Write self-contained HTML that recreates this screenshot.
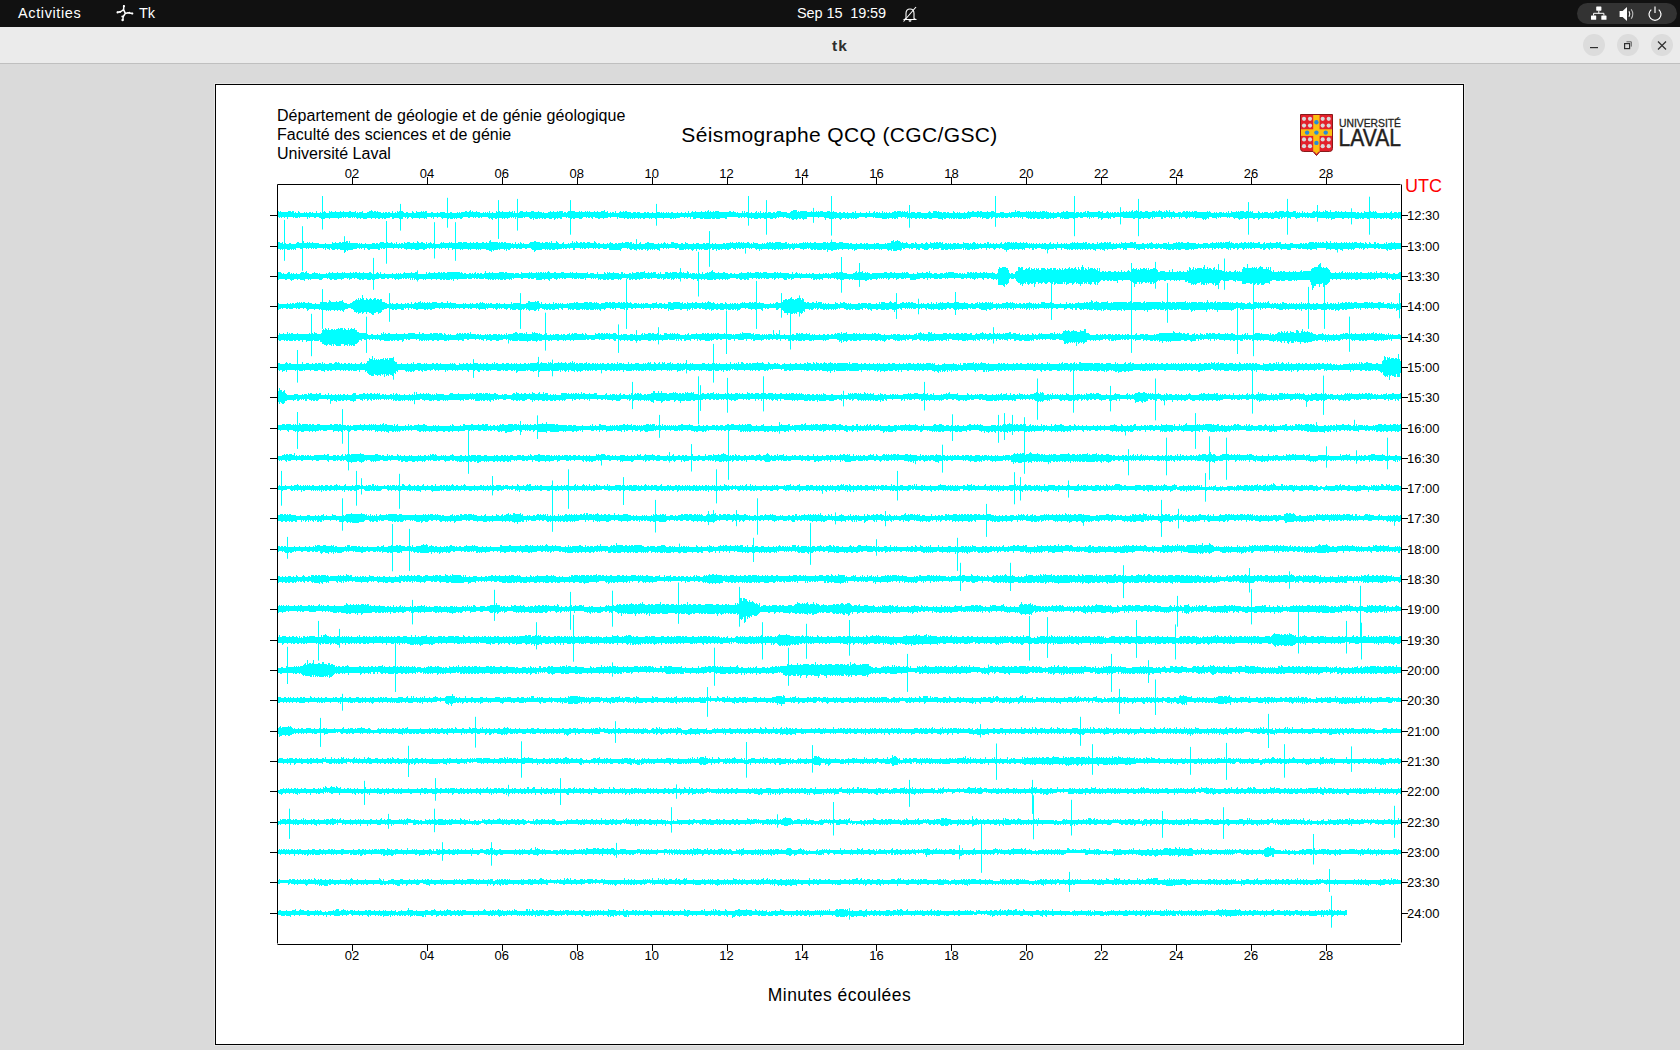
<!DOCTYPE html>
<html><head><meta charset="utf-8"><title>tk</title>
<style>
html,body{margin:0;padding:0;width:1680px;height:1050px;overflow:hidden;background:#dadada;font-family:"Liberation Sans",sans-serif;}
#top{position:absolute;left:0;top:0;width:1680px;height:27px;background:#111111;color:#fff;}
#top .t{position:absolute;top:0;height:27px;line-height:27px;font-size:14.5px;white-space:nowrap;}
#tb{position:absolute;left:0;top:27px;width:1680px;height:36px;background:#ebebeb;border-bottom:1px solid #bfbfbf;}
#tb .title{position:absolute;left:0;width:1680px;top:1px;height:36px;line-height:36px;text-align:center;font-size:15.5px;letter-spacing:1px;font-weight:bold;color:#2e2e2e;}
.wbtn{position:absolute;top:7px;width:22px;height:22px;border-radius:50%;background:#dcdcdc;}
#pill{position:absolute;left:1577px;top:3px;width:100px;height:21px;border-radius:11px;background:#333333;}
#cv{position:absolute;left:215px;top:84px;width:1247px;height:959px;border:1px solid #000;background:#fff;box-shadow:0 0 0 1px #e6e6e6;}
svg#main{position:absolute;left:0;top:0;}
</style></head>
<body>
<div id="top">
  <div class="t" style="left:18px;letter-spacing:0.62px;">Activities</div>
  <svg style="position:absolute;left:116px;top:5px" width="18" height="18" viewBox="0 0 18 18">
    <g stroke="#fff" stroke-width="1.5" fill="none" stroke-linecap="round" stroke-linejoin="round">
      <path d="M7.8 0.8 L7.6 4.6 L5 6.5 L1.6 7.2 M7.6 4.6 L9.3 8.4 L12 7.8 L16.2 8.4 M9.3 8.4 L7.3 11.5 L6.8 15"/>
    </g>
    <g fill="#fff">
      <circle cx="7.9" cy="1.2" r="1.1"/><circle cx="1.6" cy="7.4" r="1.1"/><circle cx="4" cy="7" r="0.9"/>
      <circle cx="16.3" cy="8.5" r="1.1"/><circle cx="13.4" cy="7.6" r="0.9"/>
      <circle cx="6.6" cy="15" r="1.2"/><circle cx="6.3" cy="11.6" r="1"/>
    </g>
  </svg>
  <div class="t" style="left:139px;">Tk</div>
  <div class="t" style="left:797px;letter-spacing:-0.1px;">Sep 15&nbsp; 19:59</div>
  <svg style="position:absolute;left:902px;top:6px" width="16" height="17" viewBox="0 0 16 17">
    <g stroke="#fff" stroke-width="1.1" fill="none">
      <path d="M4 12.5 L4 7.5 C4 4.5 5.5 3 8 3 C10.5 3 12 4.5 12 7.5 L12 12.5 L13.5 13.5 L2.5 13.5 L4 12.5"/>
      <path d="M1.5 15.5 L14 1"/>
    </g>
    <path d="M6.5 14.3 h3 a1.5 1.5 0 0 1 -3 0z" fill="#fff"/>
  </svg>
  <div id="pill">
    <svg style="position:absolute;left:13px;top:2.5px" width="18" height="17" viewBox="0 0 18 17">
      <g fill="#fff"><rect x="6.2" y="0.5" width="5.2" height="4.2" rx="0.6"/><rect x="1" y="9.5" width="5.2" height="4.3" rx="0.6"/><rect x="11.3" y="9.5" width="5.2" height="4.3" rx="0.6"/></g>
      <g stroke="#fff" stroke-width="1" fill="none"><path d="M8.8 4.7V7.3M3.6 9.5V7.3H13.9V9.5"/></g>
    </svg>
    <svg style="position:absolute;left:42px;top:2.5px" width="18" height="18" viewBox="0 0 18 18">
      <path d="M0.6 5 H3.6 L8 1 V15 L3.6 11 H0.6 Z" fill="#fff"/>
      <g stroke="#fff" stroke-width="1.1" fill="none"><path d="M10 5.3 Q11.6 8 10 10.7"/><path d="M12.2 3.2 Q15.4 8 12.2 12.8" stroke="#bbb"/></g>
    </svg>
    <svg style="position:absolute;left:70px;top:2.5px" width="16" height="16" viewBox="0 0 16 16">
      <g stroke="#fff" stroke-width="1.2" fill="none"><path d="M4.3 3.6 A6 6 0 1 0 11.7 3.6"/><path d="M8 0.5V7"/></g>
    </svg>
  </div>
</div>
<div id="tb">
  <div class="title">tk</div>
  <div class="wbtn" style="left:1583px;">
    <svg style="position:absolute;left:0;top:0" width="22" height="22" viewBox="0 0 22 22"><path d="M7 13.6H15" stroke="#2e2e2e" stroke-width="1.2"/></svg>
  </div>
  <div class="wbtn" style="left:1617px;">
    <svg style="position:absolute;left:0;top:0" width="22" height="22" viewBox="0 0 22 22"><g fill="none" stroke="#2e2e2e"><rect x="7.6" y="9.6" width="5" height="5" stroke-width="1.2"/><path d="M9.5 7.8H14.3V12.6" stroke-width="0.7"/></g></svg>
  </div>
  <div class="wbtn" style="left:1651px;">
    <svg style="position:absolute;left:0;top:0" width="22" height="22" viewBox="0 0 22 22"><g stroke="#2e2e2e" stroke-width="1.2"><path d="M7 7.5L15 15.5M15 7.5L7 15.5"/></g></svg>
  </div>
</div>
<div id="cv"></div>
<svg id="main" width="1680" height="1050" viewBox="0 0 1680 1050">
  <g fill="#00ffff" stroke="none">
<path d="M277 212h1v-1h1v1h1v-1h1v1h7v-1h3v1h1v-1h2v2h1v-1h1v1h2v-2h1v1h1v1h4v-1h1v1h1v-1h1v1h2v-1h2v1h1v-1h1v1h3v-2h1v2h3v-1h1v1h2v-1h1v-1h1v1h1v1h3v-2h1v1h1v-1h1v1h3v-1h1v1h4v-1h1v1h2v-1h1v1h5v-1h2v1h4v-1h1v2h1v-1h1v1h1v-1h3v-1h1v2h4v-1h2v-1h2v-1h1v1h1v1h1v-1h2v1h1v-1h1v1h3v1h2v-1h1v1h1v-1h2v1h1v-1h2v1h2v-2h1v2h2v-1h1v1h1v-2h1v1h1v-1h4v1h1v1h2v-1h2v1h4v-2h1v1h1v1h2v-2h1v1h4v-1h1v1h1v-1h1v1h1v-1h2v2h4v-1h2v1h4v-1h1v1h2v-1h5v1h2v-1h1v1h2v-1h2v1h5v-1h1v1h1v-1h1v1h1v-1h4v-1h2v1h2v-1h1v-1h1v2h1v-1h1v1h3v-1h1v1h3v1h3v-1h1v1h1v-1h1v1h1v-1h1v1h1v-2h1v2h2v-1h1v1h3v-2h1v1h2v-1h1v1h2v-1h1v1h6v-1h1v1h2v-1h1v2h1v-2h1v2h2v-1h1v1h1v-1h1v-1h3v1h3v-1h1v1h4v-1h3v1h4v-1h1v1h3v1h1v-1h1v1h4v-1h2v-1h1v1h2v-1h1v1h3v-1h1v1h1v-1h4v2h1v-1h2v1h1v-1h1v-1h7v1h4v-1h1v1h1v-1h1v1h3v-1h1v1h1v-1h1v1h1v-1h1v1h4v-1h1v1h2v-1h1v1h3v-1h3v-1h1v2h2v-1h1v2h2v-1h1v1h1v-1h2v1h1v-2h1v2h3v-1h1v-1h1v1h2v-1h1v1h1v-1h2v1h4v1h2v-1h3v1h1v-1h3v1h4v-1h2v1h1v-1h2v1h3v-1h1v1h4v-1h3v1h1v-1h1v1h1v-1h1v1h2v-1h1v1h1v-1h1v1h2v-1h2v1h4v-1h1v1h3v-1h1v1h3v-1h1v1h2v-2h1v2h2v-1h1v-1h1v1h2v-1h1v1h5v-1h1v1h3v-1h1v1h1v-1h1v-1h1v2h1v-1h1v1h2v-1h1v1h1v-1h4v1h10v-1h2v1h2v-1h1v1h2v1h1v-1h1v1h4v-2h1v2h1v-2h1v2h1v-1h3v1h2v-1h1v1h3v-1h1v-1h1v2h1v-1h1v1h1v-2h1v2h2v-1h1v1h1v-1h2v1h1v-1h3v1h2v-1h2v1h1v-1h1v-1h4v1h6v1h3v-1h1v-1h2v-1h4v2h1v-1h1v1h1v-1h7v1h4v-1h1v1h1v-1h1v1h2v-1h1v1h1v-1h1v1h1v-1h3v1h4v-1h3v1h1v-1h1v1h1v-1h1v1h3v1h2v-1h2v1h2v-1h2v1h2v-1h1v1h4v-1h2v1h1v-2h1v2h4v-1h1v1h5v-1h1v1h2v-2h1v2h3v-1h1v-1h1v2h1v-1h2v1h1v-1h1v1h2v-2h1v2h1v-1h1v1h1v-1h1v1h2v-1h1v1h2v-1h2v-1h2v1h1v-1h4v1h1v-1h1v1h1v-1h1v1h2v-1h1v2h1v-1h1v1h1v-1h4v1h2v-1h4v1h7v-1h1v-1h1v1h1v1h2v-2h4v1h1v-1h1v1h3v1h1v-1h3v1h1v-1h2v1h4v-2h1v1h1v1h2v-1h1v1h1v-1h1v1h4v-1h1v1h2v-1h1v-1h1v1h3v-1h2v1h3v-1h2v1h1v-1h2v1h5v-1h1v1h3v-1h3v1h2v1h4v-1h4v1h5v-1h1v1h1v-1h4v-2h1v2h1v-1h3v1h6v-1h1v1h1v-1h1v1h1v-1h1v1h2v-1h1v1h1v-1h1v1h4v-1h1v1h1v-1h3v1h1v-1h1v1h2v1h1v-1h1v1h2v-1h1v1h3v-1h2v1h2v-1h2v-1h1v1h2v-1h2v1h6v1h2v-1h3v1h1v-1h2v1h1v-1h2v-1h1v2h1v-2h2v1h9v-1h2v1h2v-1h1v2h3v-1h1v-1h1v1h1v1h1v-1h1v1h1v-1h1v1h1v-1h2v1h1v-1h2v1h1v-2h1v1h2v-1h1v1h2v-1h1v1h2v-1h1v1h1v-1h1v-1h1v2h1v-1h2v-1h1v1h2v1h1v-1h2v1h3v-1h3v1h4v-1h3v1h1v-1h1v1h1v-1h1v-1h1v1h2v1h2v-1h1v1h1v-2h1v1h1v1h1v-2h1v2h3v-1h1v1h1v1h3v-1h3v1h1v-1h1v-1h2v1h1v-1h2v1h1v-1h1v1h2v-1h1v1h1v-1h3v1h10v-1h1v1h1v-1h1v1h1v1h3v-1h1v1h1v-1h1v1h2v-1h3v1h1v-1h1v1h2v-1h1v1h1v-2h1v2h2v-2h1v1h4v-1h1v1h1v-1h1v1h1v-1h4v1h2v-1h3v1h1v-1h1v1h1v-1h1v2h5v-2h1v1h1v1h2v-1h1v1h1v-1h4v1h2v-1h1v1h1v-1h1v1h1v-1h1v-1h2v1h2v-1h5v1h2v-1h3v1h4v-1h3v2h1v-1h1v1h1v-1h1v1h2v-2h1v2h1v-1h1v1h2v-1h1v1h4v-1h1v-1h2v1h1v-1h1v1h2v-1h1v1h3v-1h1v1h1v-2h1v1h2v1h2v-2h1v2h4v-1h2v1h1v-1h1v1h2v-1h1v1h3v-1h1v1h5v1h1v-1h4v1h1v-1h2v1h2v-1h1v1h2v-2h1v1h4v-1h2v1h2v-1h1v1h1v-1h1v1h1v1h7v-1h1v1h1v-1h1v1h3v-1h1v-1h1v2h2v-1h3v1h1v-1h3V219h-1v-1h-1v1h-1v-1h-2v1h-1v-1h-2v1h-1v1h-1v-1h-2v-1h-2v1h-1v-1h-2v1h-1v-1h-1v1h-2v-1h-3v1h-1v-1h-1v1h-1v-1h-4v1h-3v-1h-3v1h-2v-1h-1v1h-1v-1h-1v1h-4v-1h-3v1h-1v-1h-2v1h-1v-1h-4v1h-2v-1h-7v1h-3v1h-1v-2h-2v1h-1v-1h-1v1h-1v-1h-9v-1h-2v1h-5v-1h-1v1h-2v-1h-1v1h-1v-1h-2v1h-1v-1h-2v1h-3v1h-1v-1h-1v-1h-4v2h-1v-1h-2v-1h-3v1h-1v-1h-1v1h-1v1h-1v-2h-1v2h-2v-1h-4v1h-3v-1h-2v1h-1v-1h-5v1h-1v-1h-2v1h-1v1h-1v-2h-3v1h-2v-1h-4v1h-1v-1h-1v1h-2v-1h-2v1h-3v1h-1v-1h-1v-1h-3v1h-1v-1h-1v-1h-3v1h-1v-1h-1v1h-1v-1h-6v1h-1v-1h-1v1h-1v-1h-1v2h-1v-1h-4v-1h-3v2h-1v-1h-1v1h-1v1h-1v-1h-1v1h-1v-1h-1v-1h-6v1h-1v-2h-1v1h-1v-1h-3v1h-1v-1h-1v1h-1v1h-1v-1h-1v-1h-3v1h-1v-1h-1v2h-1v-2h-4v1h-1v-1h-2v2h-1v-2h-1v1h-1v-1h-3v1h-2v-1h-1v2h-2v-2h-6v1h-1v-1h-1v2h-1v-2h-1v1h-1v1h-2v-1h-4v1h-1v-1h-2v1h-2v-1h-4v1h-2v-1h-10v-1h-2v1h-1v-1h-5v1h-2v-1h-2v2h-1v-1h-1v1h-1v-1h-5v1h-1v1h-1v-2h-2v1h-1v-2h-4v1h-1v-1h-1v1h-1v-1h-1v2h-1v-2h-1v1h-1v-1h-4v1h-3v-1h-2v1h-4v1h-1v-1h-4v1h-5v-1h-1v1h-1v-1h-1v1h-1v-2h-3v1h-3v1h-1v-1h-2v1h-1v-1h-1v1h-3v-1h-2v1h-3v-1h-1v1h-3v-1h-2v1h-2v-1h-1v1h-2v-1h-1v1h-1v-1h-2v-1h-3v2h-1v-2h-1v1h-1v-1h-1v1h-1v-1h-3v1h-1v-1h-2v1h-2v-1h-2v1h-3v-1h-1v1h-3v-1h-1v1h-1v-1h-1v1h-3v-1h-2v1h-1v1h-1v-2h-1v1h-1v1h-3v-1h-3v1h-1v-2h-1v1h-1v-1h-2v1h-1v-1h-6v1h-1v1h-1v-1h-1v1h-1v-1h-1v1h-3v-1h-1v1h-4v-1h-1v1h-1v-1h-1v1h-2v-1h-1v1h-1v-1h-1v1h-1v-1h-3v1h-2v-1h-1v2h-1v-1h-4v-1h-6v1h-3v-1h-2v1h-3v-1h-1v1h-1v-1h-2v1h-1v-1h-2v1h-2v-1h-3v1h-1v-1h-3v1h-1v-2h-1v1h-1v-1h-3v1h-1v-1h-3v2h-1v-1h-1v1h-2v-1h-1v1h-1v-1h-3v1h-1v-1h-1v1h-5v-1h-7v-1h-1v1h-1v-1h-6v1h-2v-1h-6v1h-2v1h-2v-1h-1v1h-1v-1h-1v1h-1v-1h-2v1h-2v-1h-1v1h-1v-1h-3v1h-1v1h-1v-1h-1v-1h-3v1h-1v-1h-1v1h-5v-1h-3v2h-1v-2h-1v-1h-5v1h-1v-1h-4v1h-1v-1h-6v2h-3v1h-1v-1h-1v-1h-1v1h-2v-1h-1v1h-1v1h-1v-1h-2v1h-2v-1h-1v-1h-1v1h-1v-1h-3v-1h-2v1h-1v-1h-4v1h-1v-1h-1v1h-1v1h-1v-1h-2v1h-3v-1h-4v1h-2v-1h-3v1h-1v-1h-2v1h-4v-1h-2v1h-1v-1h-2v-1h-1v1h-1v-1h-2v1h-1v-1h-2v1h-1v-1h-1v1h-2v-1h-11v2h-2v-1h-5v1h-4v-1h-1v1h-3v-1h-1v1h-7v-1h-1v1h-3v-1h-4v1h-3v-2h-2v2h-1v-2h-2v1h-1v-1h-2v1h-1v-1h-4v1h-4v1h-1v-1h-1v1h-1v-1h-1v1h-2v-1h-6v1h-1v-1h-7v1h-1v-1h-3v1h-1v-1h-1v1h-1v-1h-4v1h-2v-1h-2v1h-1v-1h-1v1h-1v-1h-3v1h-1v-1h-1v1h-1v-1h-1v1h-1v-1h-1v1h-2v-1h-2v1h-1v-1h-5v-1h-1v2h-1v-2h-6v1h-1v-1h-2v1h-4v1h-1v-1h-3v1h-2v-1h-3v-1h-2v2h-1v-1h-1v-1h-1v1h-2v-1h-1v1h-1v-1h-3v1h-1v1h-3v-1h-4v1h-2v-1h-1v1h-1v-1h-3v-1h-1v1h-1v-1h-4v2h-2v-1h-2v1h-1v-1h-1v1h-1v1h-1v-2h-2v1h-3v-1h-3v1h-2v-1h-1v1h-1v-1h-2v1h-1v-1h-1v1h-3v-1h-1v2h-1v-2h-1v1h-2v-1h-1v-1h-4v1h-1v-1h-1v1h-6v-1h-1v2h-1v-2h-1v1h-1v-1h-1v1h-1v-1h-1v1h-2v1h-1v-1h-2v1h-1v-1h-1v1h-1v-1h-5v1h-2v-1h-2v2h-1v-1h-1v-1h-1v1h-1v-1h-1v-1h-6v1h-1v-1h-1v1h-2v-1h-2v1h-1v-1h-1v1h-1v-1h-3v1h-2v-1h-5v1h-1v1h-2v-1h-3v1h-1v-1h-1v1h-1v-1h-1v1h-3v-1h-1v1h-1v-1h-5v1h-1v-1h-1v-1h-3v1h-1v-1h-3v2h-1v-2h-1v1h-1v-1h-4v2h-1v-1h-1v1h-1v-1h-4v1h-1v-1h-6v1h-1v-1h-1v-1h-2v1h-1v1h-1v-2h-1v1h-1v-1h-2v2h-2v-1h-1v1h-1v-1h-5v1h-2v-2h-2v1h-4v1h-2v-1h-1v1h-1v-1h-2v1h-2v-1h-2v1h-1v-1h-3v1h-1v-1h-4v1h-4v-1h-2v1h-1v-1h-2v1h-1v-1h-1v-1h-1v1h-1v-1h-1v1h-1v-1h-1v1h-3v-1h-2v1h-1v-1h-1v1h-1v-1h-1v1h-3v1h-1v-1h-8v1h-1v-1h-4v1h-2v-1h-1v1h-1v-1h-2v-1h-3v1h-2v-1h-4v1h-1v-1h-1v2h-1v-2h-7v1h-1v-1h-1v1h-3v-1h-1v1h-1v-1h-5v2h-1v-2h-2v1h-1v-1h-2v1h-1v-1h-1v1h-1v-1h-2z"/>
<path d="M277 242h3v1h2v-1h1v2h2v-1h1v1h3v-1h2v1h5v-1h1v-1h2v1h4v-2h1v2h3v-1h1v1h1v-1h1v1h2v-1h1v1h6v1h6v-1h1v1h6v-2h1v1h2v-1h1v1h3v-1h2v1h1v-1h4v-1h2v2h1v-2h1v2h8v1h1v-1h1v1h1v-1h1v1h3v-1h1v1h6v-1h3v1h1v-1h2v1h1v-1h1v-1h4v1h2v-1h2v1h3v-1h1v1h1v1h1v-1h1v1h1v-2h1v2h2v-1h1v1h1v-1h2v1h1v-2h1v1h2v-1h3v1h3v-1h1v1h3v-2h1v1h1v1h2v-1h2v1h2v1h1v-2h1v2h1v-1h2v-1h1v1h1v1h1v-1h1v1h6v-1h1v-1h1v1h1v-1h1v1h5v-1h1v1h1v-1h1v1h3v-1h1v1h2v-1h4v1h1v-1h4v1h3v-1h1v1h2v-1h1v1h2v-1h2v1h4v-1h2v1h2v-1h1v1h2v-2h1v-1h1v2h7v1h1v-1h1v1h1v-1h2v1h1v-1h2v1h5v1h1v-1h1v1h2v-2h1v2h2v-1h1v1h1v-2h1v1h1v1h1v-1h1v1h5v-1h1v-1h4v-1h2v1h4v1h2v-1h1v1h2v-1h3v1h1v-1h1v1h1v-2h1v2h4v-2h1v1h1v1h1v1h3v-1h1v-1h1v2h4v-1h1v1h1v-1h2v-2h1v2h1v-1h1v1h1v-2h1v1h1v1h2v-1h2v1h1v-1h2v1h2v-1h3v1h4v-2h1v1h1v1h1v1h1v-1h2v1h3v-1h1v1h3v-1h1v1h1v-1h1v-1h1v1h2v1h2v-1h2v1h1v-1h4v-1h1v1h2v-1h4v1h1v-1h2v2h1v-1h1v1h2v-1h1v1h2v-1h1v-1h1v2h4v-1h2v-1h2v1h5v1h4v-1h1v1h2v-1h1v1h1v-1h1v-1h1v1h1v1h1v-1h1v1h3v-2h3v1h4v1h3v-1h2v1h2v-2h1v1h2v1h5v-1h1v1h2v-1h3v1h4v-1h2v1h1v-1h3v1h3v-1h1v1h2v-1h1v1h7v-1h2v1h1v-1h4v-1h1v1h1v-1h1v1h3v-1h1v1h1v-1h2v1h1v-1h1v1h1v-1h1v1h3v-1h2v1h1v1h1v-1h1v1h1v-2h1v1h4v1h4v-1h1v1h1v-1h1v1h1v-1h1v-1h1v1h1v-1h2v1h1v-1h1v1h2v-1h6v1h4v-1h2v2h1v-1h1v1h3v-1h1v1h1v-1h1v1h1v-1h1v1h2v-1h4v-1h1v1h1v-1h1v1h1v-1h1v1h2v-1h1v1h3v-1h2v1h7v-1h3v1h1v-1h1v1h2v-1h1v1h1v-1h4v1h3v-1h4v1h6v1h1v-1h2v1h4v-1h1v1h3v-1h2v1h2v-1h1v1h1v-1h2v1h6v-1h1v1h1v-1h3v1h6v-1h1v1h1v-1h4v-2h2v-1h1v2h1v-1h2v-1h1v1h2v1h1v1h1v-1h1v1h3v-1h1v1h1v1h3v-1h3v1h1v-2h1v1h1v1h4v-1h2v1h2v-1h1v-1h1v1h1v1h2v-2h1v1h3v-1h1v1h1v-1h2v1h1v-1h2v1h1v-1h1v2h2v-1h2v1h1v-1h1v1h1v-1h1v1h2v-1h3v1h1v-1h2v1h4v-2h1v1h5v1h1v-1h1v1h1v-1h1v-1h2v1h1v1h1v-1h1v1h2v-1h1v1h3v-1h2v1h1v-2h2v2h1v-1h1v1h2v-1h1v1h2v-1h1v1h3v-1h1v-1h1v2h2v-1h1v-1h1v1h1v-1h3v1h1v-1h1v1h1v-1h1v1h1v-1h2v1h3v-1h1v1h2v-1h1v1h2v-1h1v1h1v1h1v-1h1v1h1v-1h1v1h1v-1h1v1h2v-1h1v1h2v-1h1v1h2v-1h1v1h1v-1h2v1h3v-1h1v-1h1v2h2v-1h1v1h3v-2h1v2h3v-1h1v1h2v-1h1v1h1v-1h1v1h3v-1h2v-1h1v1h1v-1h1v1h2v-1h1v1h5v-1h1v1h1v-1h2v2h1v-1h2v1h2v-1h2v1h3v-2h1v2h1v-1h2v-1h1v1h2v-1h2v1h1v-1h1v1h1v-1h2v2h2v-1h1v1h2v-1h1v1h2v-1h1v1h1v-2h1v1h3v-1h1v1h4v-1h3v1h1v-1h2v2h6v-1h2v1h3v-1h1v1h1v-1h2v-1h1v1h1v1h3v-1h1v1h1v-1h1v1h4v-1h4v1h1v-2h1v2h4v-1h3v-1h1v1h1v-1h2v1h1v-1h2v1h4v-1h2v1h7v1h2v-1h1v1h4v-1h5v1h2v-1h2v-1h1v1h3v-1h1v1h1v-1h1v1h1v-1h2v1h1v-1h1v1h1v-1h4v-1h1v2h1v-1h1v1h2v1h1v-1h3v1h1v-1h2v-1h1v1h2v-1h2v1h2v-1h1v1h1v-1h2v1h1v-1h1v1h4v-1h2v2h3v-1h1v-1h1v2h1v-1h4v-1h1v1h5v-1h2v1h1v-1h2v2h4v-1h1v1h4v-1h3v1h7v-1h2v1h1v-1h1v1h1v-1h2v1h1v-1h1v-1h5v1h1v-1h2v1h1v-1h1v1h1v-1h1v1h1v-1h2v1h2v-2h1v1h1v1h2v-2h1v2h3v-1h1v1h1v-1h1v1h4v-1h1v1h2v-1h1v1h1v-1h1v1h2v-1h1v1h2v-1h1v1h1v-1h3v1h3v-1h1v1h3v1h1v-2h1v1h1v1h2v-2h1v1h1v1h3v-2h2v2h1v-1h2v1h5v-1h1v1h1v-2h1v2h1v-1h3v-1h1v1h2v-1h1v1h6V249h-5v1h-1v-1h-3v1h-3v-1h-1v2h-1v-1h-1v-1h-5v-1h-1v1h-2v-1h-2v1h-2v-1h-6v1h-1v-1h-2v1h-1v1h-1v-2h-1v1h-1v-1h-1v1h-1v-1h-4v1h-1v1h-1v-1h-1v1h-1v-1h-2v1h-1v-1h-5v2h-1v-1h-2v-1h-2v1h-3v-1h-4v1h-1v-1h-3v1h-1v-2h-9v2h-1v-1h-4v1h-2v-1h-2v1h-1v-1h-5v-1h-1v1h-3v-1h-1v1h-1v-1h-5v2h-4v-1h-5v1h-1v-1h-1v-1h-3v1h-1v-1h-3v1h-2v-1h-1v2h-1v-1h-1v-1h-2v1h-1v1h-2v-2h-1v1h-2v-1h-5v1h-1v-1h-2v1h-2v-1h-1v1h-1v-1h-1v1h-1v-1h-1v1h-1v1h-1v-1h-1v-1h-3v1h-1v1h-1v-2h-2v1h-2v-1h-2v2h-1v-2h-1v2h-1v-1h-2v-1h-3v1h-2v-1h-2v1h-1v-1h-2v1h-2v-1h-1v2h-1v-2h-3v1h-1v-1h-2v1h-1v-1h-1v1h-1v-1h-2v1h-1v-1h-2v1h-4v1h-1v-1h-1v1h-1v-1h-2v1h-4v-1h-4v1h-3v-1h-1v1h-1v-1h-2v1h-2v-1h-1v1h-3v-1h-1v1h-1v-1h-3v-1h-1v1h-2v-1h-2v1h-3v-1h-2v1h-3v-1h-1v1h-2v-1h-2v2h-1v-1h-4v1h-2v-1h-1v1h-1v-2h-1v1h-1v-1h-7v2h-2v-1h-1v1h-1v-2h-2v1h-1v-1h-3v1h-4v1h-1v-1h-4v1h-1v-1h-2v2h-1v-1h-2v-1h-1v1h-1v-1h-4v2h-1v-1h-2v-1h-2v1h-1v-1h-2v1h-1v-1h-1v1h-1v-1h-2v1h-1v-1h-1v1h-1v-1h-2v1h-1v-1h-1v1h-1v-1h-2v1h-2v-1h-1v1h-1v-1h-1v1h-1v-1h-3v-1h-2v2h-1v-2h-4v2h-1v-1h-1v-1h-1v1h-5v1h-2v-1h-1v1h-1v-1h-4v-1h-4v1h-2v-1h-1v2h-2v-2h-2v1h-1v-1h-4v2h-1v-1h-1v1h-1v-1h-3v1h-1v-1h-3v1h-1v-1h-1v1h-1v-1h-3v1h-2v-1h-1v1h-2v-1h-2v-1h-2v1h-1v-1h-3v1h-1v1h-1v-1h-1v-1h-3v1h-1v-1h-2v2h-1v-2h-4v1h-1v-1h-2v1h-4v1h-1v-1h-1v1h-1v-1h-2v1h-3v-1h-1v1h-1v-2h-1v2h-1v-2h-1v1h-7v1h-1v-1h-1v1h-1v-1h-1v1h-1v-1h-2v1h-3v-1h-1v1h-3v-2h-2v1h-5v1h-1v-2h-1v1h-1v-1h-2v1h-1v1h-4v-1h-2v-1h-2v2h-2v-1h-1v1h-1v-2h-3v1h-2v-1h-1v1h-1v-1h-4v1h-2v-1h-1v2h-1v1h-1v-1h-3v1h-4v-2h-1v2h-1v-1h-2v1h-1v-1h-1v-1h-5v1h-1v-1h-1v1h-1v-1h-4v1h-1v-1h-4v1h-1v-1h-1v1h-2v-1h-1v1h-1v-1h-7v1h-2v1h-1v-2h-1v1h-1v-1h-3v1h-1v-1h-5v1h-1v-1h-3v1h-1v-1h-1v1h-4v1h-2v-1h-3v2h-1v-3h-1v1h-3v-1h-1v1h-5v-1h-1v1h-2v-1h-1v1h-2v-1h-1v-1h-1v1h-1v-1h-1v1h-3v1h-1v-1h-3v-1h-5v1h-1v1h-1v-1h-1v-1h-1v1h-1v1h-1v-2h-1v1h-5v1h-1v-1h-1v1h-1v-1h-1v1h-1v-1h-2v1h-2v-1h-1v1h-1v-1h-3v1h-1v-1h-6v1h-1v-1h-1v2h-1v-2h-2v1h-1v-1h-1v-1h-3v1h-1v-1h-1v1h-1v-1h-3v1h-1v-1h-1v1h-2v-1h-1v1h-2v-1h-1v1h-1v-1h-1v2h-1v-1h-2v-1h-2v1h-2v1h-2v-1h-1v1h-1v-1h-3v1h-1v-1h-1v1h-2v-1h-1v2h-1v-2h-2v1h-2v-2h-1v1h-3v1h-4v-1h-2v1h-1v-1h-1v1h-1v-1h-2v2h-1v-2h-2v1h-1v1h-1v-1h-1v-1h-2v1h-1v-1h-2v1h-1v-1h-1v1h-5v-2h-2v1h-2v-1h-6v1h-1v-1h-1v1h-1v-1h-2v1h-1v-1h-3v3h-1v-1h-2v-1h-2v1h-1v-1h-1v1h-1v-1h-1v1h-1v-1h-1v1h-1v1h-1v-2h-1v1h-1v-1h-2v1h-2v-1h-1v1h-1v-1h-3v1h-2v-1h-2v1h-2v-1h-1v-1h-1v1h-1v-1h-5v1h-1v2h-1v-1h-11v-2h-2v1h-4v-1h-3v1h-2v-1h-2v1h-1v-1h-1v1h-1v-1h-4v1h-1v-1h-2v1h-2v-1h-1v1h-1v-1h-1v1h-1v-1h-5v2h-2v-2h-3v1h-1v-1h-2v1h-2v-1h-1v1h-1v-1h-1v1h-4v1h-1v-1h-2v1h-3v-1h-1v1h-2v-1h-1v1h-1v-1h-1v1h-1v-1h-3v1h-6v1h-1v1h-1v-2h-2v-1h-1v-1h-4v1h-2v-1h-3v1h-3v-1h-1v1h-2v-1h-2v1h-1v-1h-2v1h-1v1h-2v-1h-1v2h-1v-2h-1v1h-1v-1h-4v1h-1v-1h-1v1h-4v1h-1v-1h-1v2h-1v-1h-2v-1h-3v-1h-5v1h-1v-1h-1v1h-1v-1h-1v1h-1v-1h-5v1h-1v-1h-1v1h-1v-1h-5v1h-1v-1h-1v1h-1v-1h-4v1h-1v-1h-2v1h-1v-2h-3v2h-1v-2h-2v1h-1v-1h-3v1h-1v-1h-1v1h-1v-1h-3v1h-2v-1h-1v1h-1v-1h-2v1h-1v-1h-2v1h-2v1h-2v-1h-4v1h-4v-1h-3v1h-1v-1h-4v1h-1v-1h-2v-1h-2v1h-1v-1h-2v1h-1v-1h-4v1h-1v-1h-8v1h-2v-1h-1v1h-1v-1h-1v2h-2v-1h-8v1h-2v-1h-1v-1h-2v2h-1v-2h-2v1h-1v-1h-1v1h-1v-1h-2v1h-4v1h-5v1h-1v-1h-1v2h-1v-2h-5v-1h-2v1h-1v-1h-2v1h-3v-1h-1v-1h-1v2h-1v-1h-2v-1h-1v2h-1v-2h-1v1h-1v-1h-6v1h-2v-1h-1v1h-1v-1h-1v1h-1v-1h-2v1h-1v-1h-1v1h-1v-1h-3v1h-3v-1h-4v2h-1v-1h-1v1h-1v-1h-1v1h-1v-1h-1v1h-3v-1h-2v1h-1v-1h-1v1h-1v-1h-1v1h-1v-1h-2v1h-1z"/>
<path d="M277 273h1v-1h3v1h1v1h1v-1h1v1h3v-1h1v-1h2v2h1v-1h1v1h1v-1h1v1h2v-1h1v1h3v-1h1v-1h3v1h1v-1h1v-1h1v2h2v1h3v-1h2v-1h1v1h3v1h1v-1h1v1h6v-1h1v1h1v-1h1v-1h1v1h2v-1h1v1h4v-1h1v1h4v-1h1v1h1v-1h1v1h5v-1h1v1h2v-1h1v1h1v-1h2v1h2v-1h1v1h3v-1h1v1h5v-1h2v1h1v1h4v-1h1v-1h1v1h1v1h1v-2h1v2h3v-1h1v1h7v-1h1v1h3v-1h1v1h1v-1h1v1h1v-1h1v1h2v-1h1v-1h1v1h6v-1h1v1h3v-1h2v1h1v1h8v-2h1v2h1v-1h1v-1h1v1h4v-1h1v1h3v-1h2v1h1v-1h1v1h1v-1h2v1h2v-1h13v1h1v-1h1v1h1v1h1v-1h2v1h3v-1h2v1h1v-1h1v1h1v-1h1v-1h1v2h1v-1h2v1h1v-1h2v1h2v-1h1v-2h1v2h3v-1h1v1h2v-1h1v1h6v-1h5v1h1v-1h2v1h7v1h1v-1h4v1h2v-2h1v1h7v-1h1v1h1v-1h1v1h4v-1h1v1h1v-1h1v1h1v-1h2v1h1v-1h1v1h1v-1h1v1h1v-1h1v-1h1v1h1v1h4v-1h2v1h5v-1h3v1h6v-1h1v1h1v-1h1v1h3v-1h1v1h10v-1h1v2h2v-1h4v1h3v-2h1v2h6v-2h1v1h1v1h1v-2h1v1h1v-1h1v1h3v-1h1v1h5v1h2v-2h2v2h1v-1h1v1h4v-1h2v1h1v-2h1v1h3v-1h3v1h1v-1h4v-1h1v2h3v-1h1v1h2v-1h1v1h1v-1h3v2h2v-1h1v1h1v-2h1v2h4v-2h3v1h2v-1h1v1h1v-1h5v1h2v-1h1v1h1v-1h1v1h1v-1h1v1h3v-2h1v1h1v2h1v-1h1v1h1v-1h3v1h1v-1h1v1h2v-1h1v1h2v-2h1v2h2v-1h2v-1h1v1h1v-1h2v-1h1v-1h1v2h2v1h3v-1h1v1h4v-1h2v1h3v1h2v-1h2v1h2v-1h1v1h4v-1h2v-1h1v1h5v-1h2v1h1v-1h1v1h4v-1h4v1h1v-1h1v1h2v-1h4v1h7v-1h2v1h1v-1h1v1h2v-1h1v1h8v1h3v-2h1v2h2v-1h1v-1h1v1h1v1h1v-1h1v1h1v-1h1v1h4v-1h1v1h2v-1h1v1h2v-1h2v1h5v-1h1v1h3v-1h1v1h1v-1h2v1h1v-1h1v1h2v-1h3v-1h1v1h1v-1h2v1h1v-1h2v1h1v-1h1v1h4v1h6v-1h2v-1h1v-1h1v2h1v-1h4v-1h1v2h2v-1h1v1h1v-1h1v1h2v1h2v-1h12v-1h3v1h3v-1h2v1h2v-1h1v1h7v-1h1v1h1v-1h1v1h1v-1h2v1h1v1h4v-1h1v1h3v-2h1v1h4v-1h1v1h3v-1h2v1h1v-2h1v2h2v1h2v-1h3v1h3v-1h3v1h1v-1h2v-1h1v1h1v-1h6v1h4v1h1v-1h2v1h1v-1h1v1h1v-1h1v1h2v-2h2v1h1v-1h2v1h1v-1h1v1h1v-1h2v1h3v-1h1v1h2v-1h2v1h1v-1h1v1h5v-1h1v1h2v1h2v-1h1v-4h1v-2h1v1h2v-1h4v1h2v2h1v3h1v1h1v-1h2v1h2v-2h1v-1h2v-4h2v1h1v-1h2v3h2v-1h1v-1h1v1h1v-1h1v-1h1v3h1v-2h1v1h2v-1h1v2h1v-2h1v1h1v-1h1v2h2v-2h4v1h1v1h1v-2h1v1h2v-1h2v2h1v-2h3v2h1v-1h1v1h1v-2h1v1h1v1h1v-2h1v2h1v-1h1v-1h1v1h2v-1h1v-1h1v2h1v-1h2v1h1v-1h1v-1h1v2h1v1h1v-3h1v2h1v1h1v-3h1v-2h1v2h1v3h1v-2h1v1h1v1h1v-3h1v2h1v-1h3v1h1v-1h1v1h1v1h1v-2h1v3h1v-3h1v4h2v-1h2v1h1v-1h1v1h2v-1h3v1h3v-1h2v1h2v-1h1v1h2v-2h1v2h2v-1h1v1h2v-1h1v-1h1v1h1v1h1v-1h1v-2h1v-1h1v1h2v-1h1v2h1v-1h1v1h1v-2h1v1h2v-1h2v1h1v-1h1v2h1v-2h1v2h1v-1h3v-1h2v2h1v-1h1v1h1v2h2v-1h5v1h4v-2h1v2h2v-3h1v3h4v-1h1v1h1v-1h2v1h2v-1h1v1h3v-2h1v1h1v-4h1v1h1v2h1v-1h1v-2h1v3h1v-2h1v1h1v-1h5v1h1v-2h1v-2h1v4h2v-2h1v2h1v-1h2v1h1v1h1v-2h1v-1h1v3h1v-1h1v1h1v-1h1v1h3v1h3v1h1v-1h1v1h2v-1h2v1h3v-1h1v-1h1v2h1v-1h1v1h1v-1h1v1h2v-3h1v-2h2v1h2v-4h1v4h4v-1h1v1h1v-1h1v1h1v-1h1v2h1v-1h1v-1h1v-1h1v1h2v2h3v-2h1v2h1v-2h1v3h1v-3h1v4h1v1h1v-2h1v2h4v-1h1v1h1v-1h2v1h1v-1h2v1h4v-1h1v1h3v-1h1v1h1v-1h1v1h4v-1h1v-1h1v2h1v-1h8v-2h1v-1h2v-1h4v-2h1v-1h1v-1h1v4h1v1h1v-1h1v1h2v-1h1v1h1v1h1v1h1v2h1v1h4v-1h1v1h3v-1h1v1h1v-1h1v-1h1v2h2v-1h1v1h1v-1h1v1h1v-1h1v1h1v-1h1v1h2v-1h1v1h1v-1h2v1h2v-1h2v1h6v-1h1v1h1v-1h2v1h2v-1h1v1h1v-2h1v2h3v-1h2v1h3v-1h1v1h1v-1h1v2h1v-1h1v1h3v-1h2v1h3v-1h1v-1h2V280h-1v-1h-4v1h-1v-1h-1v1h-2v-1h-1v-1h-1v1h-1v-1h-1v2h-1v-1h-1v-1h-4v1h-1v-1h-3v1h-1v-1h-1v1h-1v1h-1v-1h-3v1h-1v-1h-2v1h-1v-1h-6v1h-1v-1h-2v1h-3v-1h-3v1h-1v-1h-2v1h-1v-1h-1v1h-1v-1h-5v1h-1v-1h-3v1h-1v-1h-3v1h-1v-1h-2v3h-1v1h-1v1h-1v1h-2v1h-1v1h-1v-4h-1v1h-2v3h-1v-3h-3v2h-2v2h-1v2h-1v-5h-1v-3h-1v-2h-13v1h-1v-1h-1v1h-1v-1h-2v1h-4v-1h-3v1h-4v-1h-1v1h-4v-1h-4v1h-2v3h-1v-1h-4v1h-1v1h-3v-2h-1v1h-1v1h-2v-2h-1v1h-1v1h-2v-2h-1v1h-2v-1h-4v1h-4v-3h-5v-1h-1v2h-1v-1h-2v-1h-4v1h-4v-1h-1v1h-1v-1h-2v1h-1v2h-1v-1h-1v3h-2v1h-1v-3h-1v2h-1v-1h-1v-1h-3v1h-1v-1h-1v2h-1v-2h-1v2h-2v-1h-1v1h-1v-3h-1v1h-3v1h-1v1h-1v-1h-1v1h-1v-1h-1v1h-1v-2h-3v-2h-1v1h-2v-2h-5v1h-1v-1h-2v1h-1v-1h-1v1h-1v-1h-3v1h-1v-1h-4v1h-2v-1h-4v1h-1v-1h-1v1h-1v1h-1v1h-2v1h-1v-2h-1v2h-2v-2h-1v1h-1v-1h-1v1h-2v-1h-2v1h-1v1h-1v-2h-1v2h-1v-2h-2v2h-2v3h-1v-4h-1v-1h-1v-1h-2v-1h-7v1h-1v-1h-4v3h-1v-2h-4v-1h-1v1h-2v-1h-1v1h-2v-1h-2v1h-2v-1h-2v1h-1v1h-1v1h-1v2h-1v-3h-1v3h-1v-1h-1v-2h-2v2h-1v1h-1v-1h-2v-2h-1v2h-1v-1h-1v1h-1v-2h-1v2h-2v2h-1v-2h-2v-1h-1v1h-1v-2h-1v1h-1v1h-1v1h-1v-2h-3v1h-2v1h-1v-3h-1v2h-1v-2h-1v2h-6v-1h-1v1h-1v1h-1v-3h-1v2h-1v-1h-2v-1h-2v1h-1v1h-2v-1h-1v-1h-1v1h-1v1h-1v-1h-2v1h-1v-2h-2v2h-1v3h-1v-4h-1v1h-2v-1h-1v1h-1v1h-1v-1h-1v-2h-1v2h-1v-1h-1v1h-1v2h-1v-2h-1v1h-1v-2h-2v-1h-1v-1h-1v-2h-1v-1h-1v1h-3v-1h-1v1h-1v4h-1v1h-1v1h-1v-1h-1v3h-1v-1h-1v-1h-5v-6h-1v1h-1v-1h-2v1h-1v-1h-2v-1h-2v1h-2v-1h-3v2h-1v-1h-1v-1h-4v1h-1v-1h-1v1h-1v1h-1v-1h-2v-1h-1v1h-1v-1h-3v1h-1v-1h-2v1h-3v-1h-6v1h-1v-1h-6v1h-1v-1h-1v1h-1v-1h-3v1h-3v-1h-1v1h-4v-1h-3v1h-1v-1h-2v2h-1v-2h-2v1h-2v-1h-3v1h-4v1h-6v-2h-4v1h-1v-1h-1v1h-3v-1h-2v1h-2v1h-1v-2h-2v1h-1v-1h-3v1h-1v1h-1v-2h-1v1h-1v-1h-2v1h-1v-1h-1v1h-1v-1h-1v1h-1v-1h-1v1h-1v1h-1v-1h-4v1h-2v-1h-1v1h-2v1h-2v-1h-11v-1h-1v1h-1v-1h-2v1h-1v-1h-5v1h-2v-1h-1v1h-1v-1h-2v1h-1v-1h-1v-1h-1v1h-1v-1h-3v1h-1v-1h-1v1h-1v-1h-5v2h-1v-1h-2v1h-1v-1h-2v1h-1v-1h-1v1h-2v-2h-1v1h-1v-1h-10v1h-1v-1h-6v1h-2v1h-1v-2h-1v1h-2v-1h-1v2h-3v-1h-1v-1h-4v1h-1v-1h-2v1h-1v1h-1v-2h-1v1h-1v-1h-3v1h-3v-1h-1v1h-1v-1h-2v1h-1v-1h-1v1h-2v-1h-1v1h-1v-1h-3v1h-1v-1h-3v2h-2v-1h-1v1h-2v-1h-2v1h-2v-1h-1v-1h-1v1h-2v-1h-6v1h-2v1h-1v-1h-1v1h-1v-1h-2v1h-1v-1h-2v1h-1v-1h-3v1h-2v-1h-1v1h-6v-1h-2v1h-1v-1h-2v1h-1v-1h-3v2h-1v-2h-3v1h-1v-1h-2v-1h-3v1h-2v-1h-1v1h-1v-1h-4v1h-2v-1h-1v1h-1v-1h-1v1h-1v1h-1v-1h-1v1h-1v-2h-1v1h-3v-1h-1v1h-2v1h-1v-2h-1v1h-1v-1h-1v1h-3v-1h-5v1h-1v-1h-1v1h-3v-1h-1v1h-1v-1h-2v1h-3v1h-1v-1h-2v1h-2v-1h-2v1h-1v-1h-1v1h-2v-2h-1v1h-1v-1h-5v1h-1v1h-1v-1h-1v1h-1v-1h-4v1h-3v-1h-2v1h-2v-1h-1v1h-3v-1h-2v1h-1v-1h-1v1h-1v-2h-2v1h-1v-1h-1v1h-1v-1h-1v1h-1v-1h-5v2h-1v-2h-1v1h-4v-1h-1v1h-1v-1h-1v1h-3v-1h-1v1h-1v-1h-6v1h-2v-1h-1v1h-1v-1h-2v1h-1v-1h-1v1h-1v1h-1v-1h-2v-1h-2v1h-2v2h-1v-1h-1v-1h-3v1h-1v-1h-2v1h-6v-2h-2v1h-3v-1h-1v1h-2v-1h-5v1h-2v-1h-7v1h-1v-1h-1v2h-1v-1h-1v1h-1v-1h-3v1h-2v-1h-1v1h-3v-1h-1v1h-1v-1h-2v1h-1v-1h-1v1h-2v-1h-1v1h-1v-1h-1v1h-1v-1h-3v-1h-1v1h-5v-1h-1v1h-2v-1h-1v1h-1v-1h-2v1h-4v-1h-1v1h-9v1h-1v-1h-3v2h-1v-2h-1v1h-1v-1h-1v1h-4v-1h-1v1h-2v-1h-1v1h-2v-1h-3v1h-1v-1h-4v1h-1v-1h-5v1h-1v-1h-1v1h-1v-1h-4v1h-3v-1h-1v1h-1v-2h-1v2h-1v-2h-1v2h-1v-2h-1v1h-1v-1h-1v1h-2v-1h-1v1h-1v-1h-1v1h-3v1h-1v-1h-2v1h-1v-1h-1v-1h-1v1h-1v-1h-3v1h-2v-1h-2v1h-4v-1h-2v1h-4v1h-3v-1h-1v1h-4v-1h-3v1h-2v-1h-1v1h-2v-1h-2v-1h-2v1h-1v-1h-2v1h-2v1h-1v-2h-1v1h-1v-1h-3v1h-2v1h-1v-1h-4v1h-3v-1h-2v1h-2v-1h-1v-1h-1v1h-1v-1h-4v1h-1v1h-3v-1h-8v1h-1v-1h-1v1h-1v-1h-3v2h-1v-1h-4v-1h-2v1h-1v-1h-3v1h-2v1h-1v-1h-1v-1h-3v1h-2v-1h-6v1h-2z"/>
<path d="M277 304h1v-1h1v1h8v-1h1v1h2v-1h1v1h1v-1h2v1h1v-1h2v-1h1v1h1v-1h1v1h1v-1h1v1h1v-1h2v1h3v-1h1v1h3v1h3v-1h1v1h4v-2h7v1h1v-1h1v-2h1v1h1v1h5v-1h1v1h2v-1h3v-1h1v2h1v1h3v1h3v-1h2v-1h1v-1h2v-1h1v-1h1v1h1v-2h1v2h1v-2h1v1h1v-4h1v3h1v2h2v-2h1v1h1v1h1v-1h1v-1h1v1h1v1h1v-1h1v-1h2v2h1v-1h2v1h1v-1h2v3h3v1h2v1h3v-1h1v1h1v-1h1v1h3v-1h2v1h3v-1h1v1h3v-1h1v1h1v-1h2v1h2v-2h1v2h2v-1h1v-1h1v1h2v-1h2v-1h1v2h1v-1h1v1h1v-1h1v1h2v-1h1v1h1v-1h1v1h2v-1h5v1h4v-1h2v1h4v-2h1v2h2v-1h1v1h5v1h7v-1h1v1h1v-1h1v1h4v-1h1v1h1v-1h1v1h3v-1h2v1h1v-1h1v-1h1v1h1v-1h1v1h2v1h1v-1h1v1h1v-1h1v1h1v-1h2v1h4v-1h2v1h1v-1h1v1h4v-1h1v1h6v-2h1v2h1v-1h8v1h5v-1h2v-2h2v1h5v-1h1v1h1v-1h2v2h1v1h1v-2h1v2h3v-1h1v1h3v-1h1v1h3v-2h1v2h1v-1h2v1h1v-1h1v1h1v-1h1v1h1v-1h1v1h4v-1h1v1h1v-1h5v-1h1v1h1v-1h2v1h6v-1h4v1h1v-1h3v1h2v-1h1v1h1v-1h1v1h2v1h2v-1h4v-1h3v1h1v-1h2v1h1v-1h3v1h3v-1h2v1h1v-1h1v1h1v-1h2v1h1v-2h1v1h1v1h2v-1h1v1h1v1h2v-1h3v1h1v-1h1v1h2v-1h1v1h1v-1h1v1h1v-1h3v1h4v-1h4v-1h1v2h2v-1h3v1h2v-1h1v1h3v-2h3v1h2v-1h7v1h2v-1h1v2h1v-1h2v1h1v-2h1v1h4v-1h1v1h2v-1h2v1h5v-1h1v1h2v-1h1v1h1v-1h1v-1h1v1h2v1h2v-1h1v1h1v1h2v-1h1v1h2v-1h3v1h2v-2h1v1h1v1h3v-1h1v1h1v-1h1v1h1v-1h2v1h1v-1h1v1h2v-1h2v-1h1v1h1v-1h1v1h4v-1h2v1h1v-1h1v1h1v-1h2v1h3v-1h1v1h4v1h6v-1h1v1h2v-1h1v1h1v-1h1v-1h2v1h3v-1h2v-2h2v-1h2v1h1v-1h2v-1h1v-1h1v2h2v1h1v-1h2v-1h2v-2h1v2h1v2h1v-2h1v1h1v3h2v1h1v-1h2v1h3v-1h2v1h2v-2h1v2h1v-1h4v2h1v-1h1v1h1v-1h1v1h2v-1h1v1h6v-2h1v1h2v1h2v-2h1v1h2v-1h2v1h2v1h1v-1h1v1h1v-1h1v1h7v-1h2v1h1v-1h6v1h1v-1h3v1h5v-1h1v1h2v-2h1v2h1v-2h4v1h4v-1h1v-1h1v1h1v1h2v-1h2v1h1v1h3v-1h2v-1h2v1h2v-1h1v1h1v-1h2v1h1v-1h2v1h3v1h5v-1h1v1h1v-1h1v1h3v-1h2v1h2v-2h1v2h1v-1h1v1h2v-2h1v2h1v-1h2v-1h1v1h1v-1h1v1h4v-1h2v1h5v-1h5v1h5v-1h1v1h3v1h3v-1h2v1h2v-1h2v-1h1v2h1v-2h1v1h2v-1h1v1h2v-1h2v1h1v-1h1v1h1v-1h1v1h1v-1h1v2h3v-1h1v1h1v-1h1v1h3v-1h4v-1h2v1h2v-1h1v1h1v-1h1v1h2v1h1v-1h1v1h2v-1h2v1h2v-1h2v1h1v-1h3v-1h1v1h2v1h1v-1h1v1h1v-1h1v1h2v-1h1v1h2v-2h4v1h5v-1h2v1h2v1h6v-1h1v1h5v-2h1v2h2v-1h2v1h1v-1h1v1h2v-1h3v-1h1v1h5v-1h1v1h1v-1h2v1h1v-1h2v-2h1v1h1v2h1v-1h2v-1h1v1h2v1h2v-1h6v-1h1v2h3v-1h1v1h1v-1h14v1h1v-1h2v-1h1v1h1v1h1v-1h8v1h2v-1h1v-1h1v2h1v-1h15v1h1v-2h1v1h2v1h1v-1h5v1h1v-1h3v1h1v-1h9v-1h1v2h1v-1h1v1h1v-1h1v1h1v-1h6v1h1v-1h5v1h1v-1h1v1h1v-1h1v-2h1v2h1v1h1v-1h3v1h1v-1h1v-1h1v2h1v-1h4v1h1v-1h7v1h1v-1h1v1h1v-1h1v1h3v-1h2v1h3v-1h1v1h3v1h2v-1h2v-1h1v1h1v1h3v-2h3v1h1v-1h1v1h1v-1h1v1h2v-1h1v1h1v-1h1v1h1v-1h1v-1h1v2h1v1h2v-1h1v1h1v-1h2v1h1v-1h1v1h2v-1h1v1h1v-2h2v1h3v1h2v-1h1v1h1v-1h1v1h1v-1h1v1h2v-1h1v1h2v-1h1v1h1v-2h1v2h1v-1h1v1h1v-1h1v1h1v-1h1v1h1v-1h1v1h3v-1h1v1h2v-1h2v1h5v-1h1v1h1v-1h1v1h1v-2h1v2h2v-1h2v1h1v-1h1v1h1v-1h1v1h2v-2h1v2h1v-1h2v-1h1v1h2v-1h2v1h1v-1h2v1h1v-1h1v1h2v-1h3v1h7v-1h4v1h1v-1h1v1h1v-1h2v1h5v-1h3v1h2v-1h1v2h3v-1h3v1h1v-2h1v2h1v-1h1v1h3v-1h1v1h1v-1h2V309h-1v1h-3v1h-1v-3h-1v1h-1v-1h-1v1h-4v-1h-1v1h-1v-1h-7v2h-1v-1h-1v-1h-4v1h-1v-1h-1v1h-1v-1h-3v1h-1v-1h-1v1h-1v-1h-4v2h-1v-2h-1v1h-1v-1h-1v1h-1v-1h-2v1h-7v1h-2v-1h-1v1h-2v-1h-2v1h-1v1h-1v-1h-2v1h-1v-2h-1v1h-3v-1h-1v1h-1v-1h-2v1h-2v-1h-1v1h-3v-1h-4v1h-4v-1h-1v1h-2v-1h-1v1h-1v-1h-1v1h-2v-1h-3v2h-1v-2h-1v1h-1v-1h-2v1h-2v-1h-6v1h-1v-1h-2v1h-1v-1h-2v1h-4v-1h-3v-1h-2v1h-1v-1h-1v1h-1v-1h-5v1h-1v-1h-2v1h-1v-1h-1v2h-1v-2h-1v1h-1v-1h-2v1h-4v1h-1v-1h-7v1h-2v-1h-1v1h-1v-2h-4v1h-2v1h-2v1h-1v-1h-13v2h-1v-2h-3v-1h-1v1h-1v-1h-2v1h-1v-1h-1v1h-1v2h-1v-2h-11v1h-1v-1h-1v1h-1v1h-1v-2h-1v-1h-1v1h-8v-1h-2v1h-1v-1h-1v1h-3v-1h-1v1h-4v-1h-1v1h-2v1h-1v-2h-1v1h-4v-1h-1v1h-2v-1h-2v1h-1v-1h-2v1h-4v2h-1v-2h-2v1h-1v-1h-8v1h-1v-1h-10v1h-1v-1h-1v-1h-1v2h-1v-1h-3v1h-1v-1h-6v1h-1v-1h-3v-1h-1v1h-2v1h-1v-2h-1v2h-1v-1h-3v1h-1v-1h-3v-1h-1v1h-4v-1h-1v1h-1v-1h-3v1h-1v-1h-1v1h-2v-1h-1v-1h-2v2h-2v-2h-2v2h-1v-1h-2v-1h-3v1h-2v1h-1v-2h-6v1h-2v-1h-3v1h-1v-1h-3v1h-1v-1h-1v1h-1v-1h-1v1h-1v-1h-5v1h-1v-1h-1v1h-2v-1h-1v2h-1v-2h-1v1h-1v-1h-1v2h-1v-2h-1v1h-1v1h-1v-2h-1v1h-1v-1h-1v1h-1v-1h-1v1h-1v-1h-4v1h-1v-1h-1v2h-1v-2h-1v1h-2v-1h-2v2h-1v-2h-1v1h-1v-1h-1v1h-1v-1h-1v1h-1v-1h-1v1h-1v-1h-1v1h-1v1h-1v-2h-3v1h-2v1h-2v-1h-2v2h-1v-1h-5v-1h-2v-1h-3v1h-4v-1h-1v1h-1v-1h-2v2h-1v-1h-4v1h-1v-1h-3v1h-1v-1h-1v1h-3v-1h-1v-1h-2v1h-2v-1h-2v1h-1v1h-1v-1h-2v1h-2v-1h-1v1h-2v-1h-4v1h-1v-1h-1v1h-1v-1h-3v-1h-1v2h-1v-1h-1v-1h-3v1h-1v-1h-1v1h-2v-1h-2v1h-3v-1h-1v1h-1v-1h-1v1h-1v-1h-1v1h-1v-1h-1v1h-1v-1h-3v2h-1v-1h-1v-1h-1v1h-3v1h-1v2h-1v-2h-2v-1h-3v1h-3v-1h-1v1h-4v-1h-3v1h-2v-1h-4v2h-1v-1h-1v-1h-1v1h-1v-1h-1v-1h-1v1h-1v-1h-2v2h-1v-1h-2v1h-5v-1h-2v1h-1v-1h-1v1h-2v-1h-1v1h-2v-1h-2v-1h-4v1h-1v-1h-1v1h-2v1h-1v-1h-1v1h-1v-1h-1v1h-1v-1h-2v1h-1v-1h-1v1h-1v-1h-1v1h-2v-1h-3v-1h-1v1h-1v1h-1v-2h-1v1h-1v-1h-1v1h-1v1h-2v-1h-1v1h-1v-1h-4v3h-1v-1h-1v2h-1v1h-1v-1h-2v-1h-2v2h-1v-1h-1v1h-1v-1h-1v1h-2v-2h-1v1h-2v2h-1v-2h-3v-2h-1v-1h-1v-1h-1v-1h-2v1h-1v1h-2v-2h-7v1h-2v-1h-1v1h-1v-1h-2v3h-1v-1h-1v-1h-4v1h-2v-1h-3v1h-1v-1h-3v-1h-2v1h-1v-1h-4v1h-1v1h-2v1h-1v-2h-1v1h-1v-1h-1v1h-2v-1h-1v1h-3v-1h-1v1h-1v-1h-2v1h-4v-1h-2v1h-2v-1h-2v1h-2v1h-1v-2h-1v1h-1v-1h-2v1h-2v-1h-3v-1h-1v1h-2v-1h-2v1h-3v-1h-1v2h-1v-2h-1v1h-1v1h-1v-1h-1v2h-1v-2h-5v1h-2v-1h-6v1h-4v-1h-1v2h-1v-3h-1v1h-3v-1h-2v1h-1v-1h-2v1h-1v-1h-4v1h-1v-1h-2v2h-1v-2h-6v1h-1v-1h-1v1h-1v-1h-5v1h-1v-1h-2v1h-2v-1h-3v2h-1v-2h-2v2h-1v-1h-4v-1h-4v2h-1v-2h-1v1h-2v-1h-1v1h-1v-1h-4v1h-1v1h-1v-1h-3v2h-1v-1h-1v-1h-1v1h-1v-1h-1v1h-1v-1h-1v1h-4v-1h-1v1h-3v-1h-1v1h-1v-1h-1v1h-1v-1h-2v1h-4v-1h-2v1h-2v-1h-1v1h-1v-1h-1v1h-1v-2h-5v2h-1v-1h-1v-1h-2v2h-1v-1h-3v1h-3v-1h-1v1h-2v-1h-1v1h-2v-1h-1v1h-1v-1h-2v-1h-2v1h-1v2h-1v-2h-1v1h-1v1h-2v-1h-4v1h-1v-1h-1v-1h-1v1h-1v-2h-1v1h-1v1h-1v-1h-1v1h-4v-1h-2v1h-4v-1h-1v1h-1v-2h-2v1h-1v1h-1v-1h-2v-1h-2v1h-1v-1h-1v1h-1v-1h-1v1h-1v1h-1v-1h-1v-1h-1v1h-1v-1h-5v1h-1v-1h-1v2h-1v-1h-5v1h-1v-1h-1v-1h-1v1h-1v-1h-4v1h-2v-1h-1v1h-1v-1h-3v1h-2v-1h-3v1h-1v-1h-3v1h-1v-1h-1v1h-1v-1h-1v1h-1v-1h-1v1h-1v-1h-4v1h-1v-1h-1v1h-1v-1h-2v1h-1v-1h-4v1h-3v1h-2v-1h-2v1h-1v-1h-1v1h-2v-1h-6v1h-2v-1h-3v-1h-1v1h-1v-1h-2v2h-1v-2h-2v1h-1v-1h-1v2h-3v-1h-4v1h-2v-1h-1v1h-2v-1h-2v-1h-3v1h-3v1h-2v2h-1v1h-2v1h-1v-2h-2v1h-2v2h-2v-1h-1v-1h-2v-1h-2v2h-1v-2h-2v1h-1v1h-1v-2h-1v1h-2v1h-1v-2h-1v1h-1v-1h-2v-2h-1v-1h-2v-1h-3v1h-3v1h-1v2h-1v-1h-1v-1h-1v1h-1v-1h-2v1h-1v-1h-2v1h-1v-1h-3v1h-1v-1h-1v1h-1v-1h-1v1h-1v-1h-3v1h-1v-1h-1v-1h-1v1h-1v-1h-4v1h-1v-1h-5v1h-1v1h-1v-2h-1v-1h-2v1h-1v-1h-3v1h-2v-1h-1v1h-1v-1h-3v1h-4v-1h-1v1h-2v-1h-3v1h-1v-1h-1v1h-2v1h-1v-1h-1z"/>
<path d="M277 334h1v1h1v-2h1v1h3v-1h1v1h3v-2h1v2h1v-1h1v1h1v-1h2v1h4v-1h1v1h11v-1h1v1h1v-1h2v1h1v-2h1v1h2v1h4v-1h1v-3h1v-1h1v1h1v-2h1v1h1v1h1v-2h1v2h2v-1h2v1h1v-1h1v1h1v-1h2v-1h1v1h1v-1h3v2h1v-2h1v1h1v1h2v-2h1v2h1v-1h1v-1h1v1h2v-1h1v2h2v2h2v1h8v1h1v1h3v-1h2v1h4v-1h1v1h3v-2h1v1h1v-2h1v2h1v-1h1v1h2v-1h2v1h6v-1h1v1h7v-1h1v1h3v-1h7v1h4v-2h1v2h2v-1h2v1h6v-1h2v1h1v-1h5v1h1v-1h3v1h1v1h1v-2h1v1h1v1h2v-1h1v1h1v-1h1v1h5v-1h1v-1h1v1h1v-1h2v1h1v-1h1v1h1v-1h2v1h1v-1h2v1h1v-2h1v2h5v1h1v-1h2v1h1v-1h1v1h4v-1h1v1h1v-1h1v1h1v-1h2v1h2v-1h4v1h1v-1h2v1h1v-1h1v1h2v-1h1v1h1v-2h1v2h1v-1h5v-1h2v-1h2v1h1v1h1v-1h4v1h1v-1h1v1h1v-2h1v2h5v-2h1v1h1v-1h1v1h3v1h1v-1h1v1h2v1h2v-1h1v-1h2v2h3v-1h1v1h2v-1h1v1h1v-1h4v1h2v-1h1v1h1v-1h2v1h2v-1h2v-1h1v2h1v-1h1v-1h1v1h1v-1h3v1h5v-1h1v1h1v1h1v-2h1v1h1v1h8v-2h1v1h2v-1h2v1h1v-1h2v1h1v-1h1v1h1v-1h2v1h1v-1h1v1h3v-1h3v1h1v1h1v-1h1v1h2v-1h1v1h1v-1h4v1h3v-1h3v1h1v-1h1v1h1v-1h1v1h4v-1h1v-1h1v2h1v-2h1v1h3v-1h3v1h1v-1h2v1h3v-1h1v2h2v-1h1v1h3v-2h3v1h3v-1h1v1h1v-1h1v1h1v-1h1v1h2v-1h1v1h2v1h5v-1h1v1h1v-1h1v-1h1v2h2v-1h5v-1h1v1h5v-1h2v1h1v-1h1v1h1v-1h2v1h2v-1h1v1h1v-1h1v1h1v-1h1v1h1v-1h2v1h5v-1h1v1h7v1h1v-1h1v1h1v-1h5v-1h1v1h1v-2h1v1h8v1h2v-1h1v2h1v-1h5v1h2v-1h1v1h1v-1h1v1h1v-1h1v1h1v-1h4v1h1v-1h2v1h1v-2h1v1h3v1h4v-1h1v1h5v-1h1v1h1v-1h2v1h2v-2h2v1h1v-1h1v1h1v-1h2v1h3v-1h1v1h2v-1h1v2h2v-1h1v1h1v-1h1v1h4v-1h1v1h3v-1h2v1h2v-1h2v1h2v-1h2v1h1v-1h1v-1h1v1h1v-1h3v1h1v-2h1v2h1v-1h3v-1h1v2h6v-1h2v1h1v-1h1v1h2v-1h1v1h3v-1h1v1h1v-1h1v1h6v-1h1v1h1v-1h2v1h2v-1h1v1h2v1h3v-1h1v1h6v-1h1v1h1v-1h3v1h1v-1h3v1h3v-1h1v1h2v-1h1v1h2v-1h1v1h4v-1h2v-1h1v2h1v-2h2v-1h1v1h1v1h1v-1h1v1h4v-2h2v1h1v-1h1v2h2v-1h1v1h8v-1h4v1h2v-1h2v1h2v-1h1v1h2v-1h3v1h2v-1h2v1h1v-1h3v1h3v-1h2v2h3v-1h1v-1h1v1h3v-1h2v-1h1v1h1v1h1v-1h1v1h3v-1h2v1h3v-1h1v1h2v-1h1v1h1v-1h1v1h3v-1h1v1h1v-1h4v-1h2v2h2v-1h3v1h3v-1h1v2h2v-1h1v1h2v-1h1v1h1v-1h2v1h3v-2h1v1h1v1h1v-1h1v1h2v-1h1v-1h1v1h1v-1h1v1h8v-1h3v1h1v-2h1v2h2v-1h1v1h1v-1h1v1h2v-1h1v-2h2v-1h1v1h2v-1h1v1h1v1h1v-1h2v-1h1v1h3v1h3v-2h1v1h3v-2h2v4h3v1h1v1h6v-1h2v1h2v-1h1v1h1v-1h1v1h1v-1h2v1h2v-1h3v1h1v-1h1v1h2v-1h2v1h1v-1h2v1h2v-1h1v1h2v-1h1v1h1v-1h2v1h6v-1h1v-1h1v2h3v-1h4v1h1v-1h3v1h6v-1h1v1h1v-1h3v-1h14v-2h1v1h1v1h4v-1h1v1h2v1h1v-1h2v1h2v-1h2v2h3v-1h2v-1h1v2h1v-1h2v1h2v-2h1v1h2v1h1v-1h1v1h1v-2h2v1h1v-1h2v1h1v-1h3v1h3v-1h2v1h5v-1h1v1h1v-1h1v1h3v-1h2v1h2v1h7v-1h1v1h1v-1h1v-1h1v2h1v-2h1v2h5v-1h2v-1h5v1h1v-1h1v1h7v1h1v-2h1v2h1v-1h2v1h1v-1h2v-1h1v-1h2v1h1v-2h1v1h1v1h1v-2h1v2h1v-1h1v-1h1v2h2v-2h1v1h3v1h2v-3h2v1h1v2h2v-2h1v-2h1v3h1v-1h1v1h2v-1h1v1h2v1h1v-1h1v1h1v1h3v1h2v-1h4v-1h1v1h1v1h1v-1h1v1h2v-1h1v1h4v-1h1v1h2v-1h1v1h3v-1h3v-1h1v1h1v-1h3v1h1v-1h1v1h1v-1h1v1h3v-1h1v1h5v-1h1v1h1v-1h2v1h2v-1h1v1h1v-1h1v1h1v-1h2v-1h1v2h1v-1h2v1h2v-1h1v1h1v-1h1v1h3v1h1v-1h1v1h1v-2h1v2h1v-1h1v1h1v-1h1v1h5v-1h2v1h1V340h-1v-1h-8v2h-1v-2h-1v1h-1v-1h-1v1h-4v1h-1v-1h-1v1h-1v-1h-2v1h-1v-1h-1v1h-3v-1h-7v1h-2v-1h-1v1h-2v-1h-1v1h-2v-1h-4v1h-1v-1h-1v1h-1v-1h-1v-1h-4v1h-1v-1h-3v1h-1v-1h-1v1h-1v1h-2v-1h-3v1h-2v-1h-1v1h-1v-1h-1v1h-1v-1h-1v2h-1v-2h-1v2h-1v-2h-2v1h-1v-1h-4v1h-2v-1h-1v1h-3v1h-4v1h-1v-1h-1v1h-2v-1h-3v2h-1v-2h-3v-1h-1v1h-1v-1h-1v2h-3v-2h-1v1h-1v2h-1v-1h-1v-2h-2v2h-1v-2h-2v2h-1v-1h-1v-1h-2v1h-1v-2h-1v1h-2v1h-1v-1h-4v-1h-5v1h-1v-1h-2v1h-1v-1h-2v1h-1v-1h-3v-1h-1v2h-1v-2h-1v1h-2v-1h-1v1h-2v-1h-1v1h-1v-1h-1v2h-3v-1h-5v1h-2v-1h-2v1h-1v-1h-5v1h-1v-1h-5v-1h-2v1h-1v-1h-1v2h-1v-2h-3v2h-1v-2h-1v1h-1v-1h-4v1h-1v-1h-1v1h-2v-1h-1v2h-1v-2h-2v2h-4v1h-1v-1h-1v-1h-3v1h-3v-1h-3v1h-10v1h-1v-1h-1v1h-1v-1h-1v1h-1v-1h-3v2h-1v-2h-2v1h-1v-2h-1v1h-1v-1h-1v1h-2v-1h-1v1h-3v-1h-3v1h-1v-1h-2v1h-1v-2h-2v1h-5v1h-1v-2h-1v1h-1v-1h-1v2h-1v-2h-2v1h-2v-1h-1v1h-2v-1h-1v1h-1v-1h-1v1h-5v1h-1v-1h-1v1h-3v-2h-1v2h-1v-1h-1v-1h-2v1h-1v-1h-2v1h-3v1h-1v-1h-3v1h-1v-1h-1v1h-1v-1h-2v1h-1v-1h-3v2h-2v1h-1v1h-1v-2h-1v1h-1v-1h-1v1h-1v1h-1v-2h-1v4h-1v-4h-1v1h-1v-1h-1v1h-1v-1h-1v1h-1v-1h-1v1h-1v1h-1v-1h-1v1h-2v-3h-1v-1h-4v-1h-3v1h-4v-1h-1v1h-1v-1h-4v1h-1v-1h-2v1h-1v-1h-2v1h-1v-1h-1v1h-2v-1h-2v2h-1v-1h-1v1h-1v-1h-1v1h-6v-1h-2v1h-3v-1h-3v1h-2v-2h-3v1h-1v-1h-2v2h-1v-1h-3v-1h-1v1h-1v-1h-1v1h-2v-1h-2v2h-1v-2h-2v1h-1v-1h-1v1h-1v-1h-1v1h-2v1h-1v-2h-2v1h-1v-1h-1v1h-1v-1h-2v2h-1v-1h-2v-1h-1v2h-1v-1h-1v1h-1v-1h-5v1h-1v-1h-1v1h-4v-1h-3v1h-1v-1h-6v-1h-3v2h-1v-2h-1v2h-1v-1h-3v1h-2v-1h-1v1h-1v-1h-3v1h-1v-1h-1v1h-5v1h-1v-2h-1v1h-1v-1h-1v1h-2v-1h-2v1h-1v-1h-1v-1h-2v1h-4v1h-1v-2h-3v1h-2v-1h-1v2h-1v-1h-3v1h-1v-1h-1v1h-3v-1h-1v1h-1v-1h-2v-1h-3v1h-2v-1h-1v1h-1v1h-1v1h-1v-1h-2v-1h-1v1h-1v-1h-2v1h-3v-1h-3v1h-1v-1h-2v1h-1v-1h-7v1h-2v-1h-2v1h-4v-1h-1v1h-2v-1h-2v1h-1v1h-1v-1h-2v1h-1v-2h-1v3h-1v-2h-1v1h-1v-2h-2v-1h-8v1h-3v1h-1v-1h-1v1h-1v-1h-9v1h-1v-1h-1v1h-3v-1h-4v1h-2v-1h-1v1h-4v-1h-1v1h-1v-1h-2v1h-2v-1h-1v1h-3v-2h-2v1h-1v-1h-4v2h-1v-2h-2v1h-2v-1h-3v1h-1v-1h-2v1h-2v-1h-1v1h-1v-1h-2v1h-2v1h-1v-1h-6v1h-2v-2h-1v1h-1v-1h-4v2h-1v-2h-2v1h-6v-1h-3v2h-1v-2h-3v1h-3v-1h-1v1h-1v-1h-4v1h-2v-1h-2v1h-2v-1h-2v1h-2v1h-1v-1h-1v1h-5v-1h-4v1h-1v-1h-1v-1h-1v2h-1v-2h-2v1h-1v-1h-3v2h-1v-1h-4v1h-2v-2h-2v2h-1v-1h-1v-1h-1v2h-1v-2h-1v2h-1v-2h-1v1h-6v-1h-1v1h-5v1h-1v-1h-6v1h-1v-1h-1v1h-1v-1h-2v1h-3v-1h-7v1h-2v-1h-1v1h-1v-1h-1v1h-1v-1h-2v1h-3v-1h-2v1h-1v-1h-2v1h-1v-1h-3v1h-1v-1h-2v-1h-2v2h-2v-1h-1v-1h-3v1h-1v-1h-4v1h-4v-1h-1v1h-1v-1h-4v1h-4v-1h-2v1h-2v-1h-1v1h-12v1h-1v-1h-2v1h-1v-1h-4v1h-1v-1h-1v1h-1v-1h-4v1h-2v-1h-5v1h-1v-1h-1v1h-2v-1h-2v1h-1v-1h-3v1h-3v-1h-1v1h-1v1h-1v-1h-4v-1h-1v1h-3v1h-1v-1h-8v-1h-1v1h-6v-1h-1v1h-1v-1h-2v-1h-1v1h-1v-1h-3v1h-4v1h-3v-1h-4v1h-2v-1h-3v1h-1v-2h-2v2h-1v-1h-2v-1h-1v1h-1v-1h-3v1h-1v-1h-6v1h-2v-1h-3v2h-2v-1h-3v1h-1v-1h-9v1h-1v-1h-1v1h-3v-1h-5v1h-2v-1h-3v1h-2v-1h-3v1h-1v-1h-1v1h-1v-1h-1v1h-1v-1h-1v1h-2v-1h-1v1h-1v-2h-2v1h-1v-1h-6v1h-2v-1h-1v1h-1v-1h-2v2h-1v1h-1v-2h-3v1h-2v-1h-2v1h-1v-1h-1v1h-2v-1h-1v1h-6v-1h-3v1h-1v-1h-1v-1h-1v1h-1v-1h-1v1h-1v-1h-2v1h-1v-1h-2v1h-1v-1h-3v1h-2v-1h-2v2h-1v-1h-2v2h-1v1h-1v1h-2v2h-2v-1h-1v1h-1v-1h-1v1h-1v-2h-1v2h-1v-1h-2v1h-1v-2h-3v2h-5v-1h-1v-1h-1v2h-1v-2h-1v2h-1v-1h-2v-1h-1v1h-1v1h-1v-1h-2v-1h-2v-2h-2v-2h-1v1h-5v-1h-1v1h-1v-1h-1v1h-4v1h-1v-2h-3v2h-1v-2h-2v1h-2v-1h-2v1h-2v-1h-1v1h-4v-1h-1v1h-2v-1h-1v1h-1v-1h-3v1h-2v-1h-2z"/>
<path d="M277 364h1v-1h2v1h5v-1h1v-1h1v1h1v1h1v-1h2v1h11v-2h1v2h3v-1h3v1h3v-1h1v1h2v-1h2v1h1v-1h3v1h1v-2h1v2h1v-1h1v1h4v-1h3v1h2v-1h1v-1h2v1h1v-1h1v1h1v1h1v-1h1v1h2v-1h2v1h2v-1h2v1h1v-1h1v1h3v-1h1v1h4v-1h1v-1h1v2h2v-1h1v1h1v-1h1v-2h2v-3h1v1h2v-3h1v4h1v-2h1v2h1v-1h1v1h1v-1h1v1h1v-1h3v-1h1v2h1v-2h1v1h1v-1h1v2h1v-2h4v1h1v2h1v1h2v2h4v-1h1v1h5v-1h1v1h3v-1h1v1h1v-2h1v2h3v-1h4v1h3v-1h1v1h1v-1h1v1h5v-1h2v1h2v-1h2v1h2v-1h1v1h9v-1h1v1h1v-1h1v1h1v-1h1v1h1v1h3v-2h1v1h3v-1h1v1h2v-1h2v1h2v-1h1v1h2v-2h1v1h4v1h2v-1h1v1h2v-1h1v1h2v-1h2v1h4v-1h1v1h1v-2h1v2h1v-1h2v1h4v-1h2v1h2v-1h3v1h2v-1h1v1h2v-1h1v1h1v-1h1v1h3v-1h1v1h3v-1h2v1h2v-1h1v1h1v-1h7v-1h2v2h1v-1h1v-1h1v1h5v1h1v-2h1v1h1v-1h1v1h2v1h1v-1h4v-1h1v1h2v-1h1v1h3v-1h1v1h1v1h1v-1h2v-1h1v1h1v-2h1v2h1v-1h1v2h1v-1h2v1h1v-1h4v1h1v-1h2v-1h1v2h1v-1h2v1h2v-1h2v1h1v-1h1v1h1v-1h1v1h2v-1h1v1h1v-1h2v1h3v-1h2v1h2v-1h2v1h1v-1h1v1h2v-2h1v2h1v-1h3v1h1v-1h1v1h4v-2h1v2h2v-1h1v1h3v-1h4v1h4v-1h1v1h1v-1h1v1h1v-1h1v-1h1v1h1v-1h1v2h3v-2h1v1h1v1h2v-1h1v-1h1v2h2v-2h1v1h1v-1h1v2h2v-1h3v-1h1v2h1v-1h1v1h4v-1h2v1h1v-1h1v1h2v-1h1v1h1v-1h2v1h3v-1h1v1h1v-1h1v1h9v-1h3v1h3v-1h1v1h3v-1h1v-1h1v1h1v1h1v-1h1v1h2v-1h1v1h6v-1h1v1h3v-2h1v2h3v-1h1v1h1v-1h1v1h1v-2h1v2h2v-2h2v1h1v1h2v-1h2v1h1v-1h2v1h1v-1h5v-1h1v1h4v-1h1v1h1v1h4v-2h1v1h1v1h4v-1h2v1h1v-1h1v1h2v1h2v-1h2v-1h1v1h5v-1h1v1h4v-1h2v1h3v-1h1v1h3v-1h2v1h1v-2h1v1h3v1h2v-2h1v1h1v1h1v-2h1v1h2v1h1v-1h2v1h1v-1h1v-1h1v1h2v1h1v-1h2v-1h1v1h2v1h1v-1h2v1h1v-1h11v1h1v-2h1v2h2v-1h6v1h3v-1h1v1h2v-1h2v1h3v-1h1v1h3v-1h1v1h3v-1h1v1h1v-1h1v1h3v-1h1v1h4v-1h2v1h2v-1h3v1h4v-1h1v1h3v-1h1v1h2v-1h1v1h1v-1h3v1h2v-1h1v1h3v-1h2v1h1v-1h1v1h2v-1h1v1h2v-1h5v1h1v-1h1v1h1v-1h1v2h3v-1h1v1h3v-1h2v-1h1v1h8v-1h1v1h3v1h1v-1h1v1h1v-2h1v2h2v-2h3v1h1v-1h6v-1h1v2h1v-1h2v1h1v-1h1v1h1v-1h1v-1h1v1h4v1h2v-1h1v1h9v-1h2v1h1v-1h1v1h1v-1h2v1h2v-1h1v1h5v-1h1v1h2v-1h2v1h2v-1h2v1h5v-1h2v1h1v-1h1v1h1v-1h1v1h2v-1h1v1h1v-1h1v1h3v-1h2v1h4v-2h1v2h1v-1h1v1h9v-1h1v1h1v-1h1v-1h1v2h1v-1h4v1h2v-1h2v1h1v-1h1v-1h1v2h1v-1h1v1h2v-2h2v1h12v1h1v-1h6v1h1v-1h2v1h3v-1h5v1h4v-2h1v2h1v-1h1v1h6v-1h1v-1h1v2h2v-1h2v-1h1v2h1v-1h2v1h7v-1h1v1h3v-1h2v1h2v-1h1v1h1v-1h1v1h1v-1h2v1h2v-1h1v1h3v-1h2v1h3v-1h2v1h3v-1h1v1h1v-1h1v1h1v-1h1v1h2v-1h1v1h2v-1h1v1h1v-1h1v1h1v-1h2v1h2v-1h1v1h1v-1h1v1h3v-1h1v1h3v-1h2v1h3v-1h3v1h1v-1h2v1h1v-2h1v1h2v-1h1v2h1v-1h2v-1h1v2h1v-1h4v1h2v-1h1v1h2v-1h4v1h2v-1h1v1h3v-2h1v1h1v1h3v-1h1v1h1v-1h2v1h1v-1h2v1h1v-1h2v1h1v-1h2v1h3v1h3v-2h1v1h5v-1h2v1h2v-1h2v1h1v-2h1v2h1v-2h1v2h2v-1h1v-1h1v1h1v1h2v-1h1v1h1v-2h1v2h2v-1h1v1h4v-1h1v1h1v-1h2v1h2v-1h1v1h2v-1h2v1h3v-1h1v1h3v-1h1v1h1v-1h1v1h1v-1h2v1h2v-1h2v1h3v-1h1v1h2v-1h1v1h1v1h1v-1h2v1h1v-1h1v1h3v-1h1v1h2v-1h6v-1h1v1h2v-1h1v1h1v-1h1v1h1v-1h1v1h2v-2h1v2h1v-2h1v1h1v1h1v-1h2v-1h2v1h4v1h4v-1h2v1h4v-3h1v-1h1v-4h1v1h1v3h1v-3h1v1h1v-1h1v2h1v-1h3v1h1v-1h2v1h1v-5h1v5h1v2h1V373h-1v4h-3v-3h-1v3h-2v-1h-2v-1h-1v1h-1v4h-1v-5h-1v2h-1v-1h-1v1h-1v-1h-1v-1h-1v-3h-1v1h-1v-1h-1v-1h-2v-1h-2v1h-1v-1h-2v1h-1v-1h-1v1h-3v-1h-1v1h-2v-1h-3v1h-2v-1h-6v1h-1v-1h-2v2h-1v-2h-11v1h-1v-1h-5v1h-1v-1h-5v1h-1v-1h-1v1h-1v-2h-3v1h-3v-1h-1v1h-2v1h-1v-1h-5v1h-1v-1h-4v1h-1v-1h-4v1h-1v1h-1v-2h-3v1h-1v-1h-1v2h-1v-2h-1v1h-2v-1h-1v1h-2v-1h-2v1h-5v-1h-4v1h-4v-1h-1v1h-4v-1h-1v1h-1v-1h-6v2h-1v-2h-1v1h-1v-1h-2v1h-1v-1h-4v1h-1v-1h-3v1h-1v-1h-1v1h-2v1h-1v-2h-1v1h-4v-1h-1v1h-1v-1h-2v1h-5v-1h-3v1h-1v-1h-2v1h-1v-1h-1v1h-1v-1h-2v-1h-2v1h-6v1h-1v-1h-1v1h-3v1h-2v-2h-1v1h-1v-1h-3v1h-2v-1h-3v1h-1v-1h-2v1h-1v-1h-1v1h-4v-1h-2v1h-1v-1h-10v1h-2v-1h-6v1h-1v-1h-4v1h-1v-1h-1v1h-2v-1h-1v1h-1v-1h-1v1h-4v-1h-1v1h-1v-1h-7v1h-4v1h-1v-1h-2v1h-2v-1h-2v1h-3v1h-1v-2h-1v1h-2v-1h-2v-1h-1v1h-1v-1h-2v1h-2v1h-1v-2h-1v2h-1v-1h-3v-1h-1v1h-2v1h-1v-1h-4v-1h-1v1h-2v-1h-1v1h-5v-1h-1v1h-4v-1h-2v1h-1v-1h-1v1h-1v-1h-2v1h-1v1h-1v-2h-1v1h-1v-1h-3v1h-1v-1h-2v1h-1v-1h-1v1h-3v-1h-5v1h-3v-1h-3v1h-2v-1h-2v2h-1v-1h-1v-1h-4v1h-3v-1h-7v1h-1v-1h-10v1h-1v-1h-1v1h-1v-1h-3v1h-1v-1h-2v1h-2v-1h-2v1h-2v-1h-1v2h-1v-2h-1v1h-1v-1h-2v1h-5v1h-1v-2h-1v2h-1v-2h-1v2h-2v-2h-5v1h-1v-1h-1v2h-1v-1h-1v-1h-7v1h-1v-1h-3v1h-2v-1h-3v1h-3v-1h-1v1h-1v-1h-1v2h-1v-2h-1v1h-1v-1h-1v2h-1v-2h-1v1h-1v1h-1v-1h-1v1h-1v-2h-1v2h-1v-1h-1v2h-1v-1h-1v-1h-2v1h-1v-1h-2v-1h-4v1h-1v-1h-3v1h-2v-1h-2v1h-1v-1h-1v1h-1v-1h-1v1h-2v-1h-5v1h-2v-1h-5v2h-1v-2h-2v2h-1v-2h-1v1h-2v-1h-2v1h-4v-1h-1v1h-3v1h-1v-1h-3v1h-1v-2h-1v1h-1v1h-1v-2h-1v1h-2v-1h-4v1h-1v-1h-1v1h-1v-1h-5v2h-1v-2h-2v1h-10v-1h-1v1h-1v-1h-1v1h-10v-1h-1v2h-1v-2h-1v1h-2v2h-1v-2h-2v1h-1v-1h-5v-1h-2v1h-1v-1h-2v1h-2v-1h-2v1h-2v-1h-2v1h-3v-1h-1v1h-1v-1h-11v1h-1v-1h-1v1h-2v-1h-2v1h-3v-2h-2v1h-1v-1h-8v1h-1v-1h-1v1h-1v-1h-1v1h-1v1h-1v-1h-1v1h-2v-1h-4v1h-2v-1h-2v1h-1v-1h-2v1h-1v-1h-1v1h-1v-1h-5v1h-1v-1h-6v1h-1v-1h-3v-1h-1v1h-1v-1h-1v1h-1v1h-1v-1h-1v1h-2v-1h-2v2h-1v-2h-1v1h-1v-1h-2v1h-4v-1h-1v1h-1v-1h-1v1h-4v-1h-1v1h-1v-1h-4v1h-1v-1h-1v1h-1v-1h-4v1h-1v-1h-3v1h-2v-1h-2v-1h-2v1h-2v1h-1v-1h-1v1h-3v1h-1v-2h-5v1h-1v-1h-1v1h-1v-1h-1v1h-1v-1h-5v1h-1v-1h-5v1h-3v-1h-1v1h-1v-1h-1v1h-1v-1h-3v1h-1v-1h-1v1h-3v-1h-1v1h-2v-1h-1v1h-1v-1h-2v1h-1v-1h-1v1h-6v-1h-2v2h-1v-2h-3v1h-1v-1h-1v1h-2v-1h-1v1h-2v-1h-1v1h-2v-1h-3v1h-2v-1h-3v1h-1v-1h-4v1h-2v-1h-2v1h-1v-1h-1v1h-1v-1h-1v1h-2v-1h-1v1h-1v-1h-2v1h-2v1h-1v-1h-2v1h-1v-1h-1v-1h-1v2h-1v-1h-3v-1h-2v2h-1v-2h-1v1h-1v1h-1v-1h-1v-1h-1v1h-1v-1h-1v2h-1v-2h-1v1h-8v-1h-1v1h-10v1h-1v-1h-1v-1h-1v1h-3v1h-1v-1h-3v-1h-2v1h-1v-1h-1v1h-8v1h-1v1h-1v-3h-1v1h-1v-1h-1v1h-2v-1h-3v1h-3v-1h-1v1h-1v-1h-2v1h-4v-1h-6v1h-1v-1h-1v1h-3v-1h-2v1h-1v-1h-3v2h-2v-1h-1v-1h-2v1h-1v-1h-5v2h-1v-1h-1v-1h-4v1h-1v-1h-4v1h-1v-1h-1v1h-1v-1h-2v1h-1v-1h-4v1h-1v-1h-1v2h-1v-2h-6v1h-1v-1h-2v1h-1v-1h-1v-1h-1v1h-2v1h-1v-1h-3v1h-3v-1h-1v2h-1v-1h-1v-1h-1v1h-2v-1h-3v1h-1v1h-1v-1h-1v1h-2v-1h-1v1h-1v-1h-1v1h-1v-1h-1v-1h-7v2h-1v-1h-1v3h-1v-1h-1v1h-1v2h-1v-1h-2v-1h-1v2h-1v-1h-1v1h-1v-2h-1v3h-1v-3h-1v1h-1v-1h-1v2h-1v-1h-2v1h-1v-1h-2v-1h-1v2h-3v-1h-2v-1h-1v-1h-1v-2h-1v1h-1v-2h-5v2h-1v-2h-2v1h-4v-1h-1v1h-1v-1h-1v1h-2v-1h-2v1h-1v-1h-1v1h-1v-1h-2v1h-1v-1h-4v1h-1v-1h-3v1h-2v-1h-1v1h-2v-1h-2v2h-1v-1h-3v-1h-3v1h-4v-1h-3v1h-1v-1h-5v1h-1v-1h-1v1h-4v-1h-3v1h-1v-1h-8v2h-1v-2h-1v1h-2v1h-1v-2h-2v1h-1v-1h-1v2h-1z"/>
<path d="M277 392h1v-1h1v-3h1v2h2v2h1v-1h1v-1h1v3h1v1h1v1h7v-1h4v1h4v-1h1v1h1v-1h3v1h1v-2h1v1h1v-1h2v1h4v-1h1v1h2v-1h2v2h4v-1h1v1h2v-2h1v2h2v-1h1v1h3v-1h1v1h2v-1h1v1h1v-1h1v1h2v-1h2v1h2v-1h1v1h4v-1h1v-1h3v2h3v-1h4v-1h2v1h2v-1h1v1h2v-1h2v1h2v-1h1v1h2v-1h1v1h1v-1h1v2h2v-1h2v1h1v-1h1v1h4v-1h2v1h1v-2h1v2h1v-1h1v-1h1v1h1v1h1v-1h1v1h4v-1h1v1h4v-1h1v1h2v-1h1v1h1v-1h1v1h1v-3h1v2h3v-1h1v1h2v-1h1v1h2v-1h1v1h1v-1h1v1h2v1h1v-1h1v1h1v-1h1v1h1v-2h1v1h7v1h5v-1h1v-1h3v1h5v-1h1v1h11v-1h1v1h1v-1h1v1h3v-1h2v1h1v-1h3v1h1v-1h1v1h1v-1h3v1h1v-1h1v1h4v-1h2v1h2v1h4v-1h1v1h1v-1h3v1h5v-1h1v-1h2v1h1v-2h1v1h2v1h2v-1h1v1h2v-1h2v1h3v-1h1v1h2v-2h1v1h2v1h3v-1h1v-1h1v2h3v-2h1v2h1v-1h3v2h2v-1h1v1h2v-1h1v1h1v-1h1v1h5v-2h6v1h1v-1h1v1h2v-1h1v1h1v-1h1v1h1v-1h2v1h1v-1h1v1h2v-2h1v2h1v-1h2v1h4v-1h1v1h4v-1h3v2h8v-1h1v-1h1v2h3v-1h1v1h1v-1h3v1h1v-1h1v1h2v-1h1v-1h1v2h2v-1h2v1h4v-1h1v1h1v-2h1v2h2v-1h1v-1h1v1h1v-1h2v1h1v-1h1v1h1v1h2v-1h2v1h1v-1h4v-1h2v-2h2v2h3v-2h1v2h2v-2h1v2h5v1h2v-1h4v-1h1v1h1v-1h1v1h2v1h1v-1h2v1h1v-1h2v1h1v-2h1v1h1v-1h1v1h3v-1h1v1h1v-1h1v2h5v1h1v-1h2v-1h2v1h3v-1h2v1h1v-1h3v-1h1v2h2v-1h1v1h1v-1h1v1h6v-1h1v1h2v-1h1v1h2v-1h1v1h3v-1h3v1h1v-1h1v1h2v-1h1v1h4v-2h1v1h2v1h1v-1h2v1h2v-1h4v1h2v-1h2v1h1v-1h2v1h2v-1h5v1h2v-1h1v1h4v-1h2v1h4v-1h1v1h2v-1h1v1h1v-1h3v1h2v-1h1v1h2v-1h1v1h1v-1h1v1h2v1h1v-1h1v1h1v-1h3v1h2v-1h2v1h2v-1h2v1h1v-1h1v1h1v-1h1v1h1v-2h1v1h2v1h5v-1h2v1h8v-1h1v1h6v-2h1v1h1v-1h1v1h1v-1h1v1h1v-1h3v1h1v-1h1v1h1v-1h1v1h3v-2h1v1h1v1h1v-1h1v1h2v-1h1v1h2v-1h1v2h4v-1h1v1h1v-2h1v1h2v1h1v-1h2v1h4v-1h1v1h1v-1h2v1h1v-1h1v1h1v-1h1v1h5v-1h5v-1h1v1h1v-1h1v1h3v-1h4v1h5v-1h1v1h3v-1h1v2h2v-1h2v1h1v-2h1v2h7v-1h1v1h1v-1h3v-1h1v1h1v-1h1v-1h1v2h7v-1h1v2h9v-2h1v1h1v1h2v-1h1v1h3v-1h1v1h1v-1h1v1h1v-1h4v1h2v-1h2v1h5v-1h1v1h3v-1h1v1h1v-1h1v1h1v-1h1v-1h1v2h1v-1h3v-1h1v2h3v-2h1v2h2v-1h2v1h2v-1h1v1h1v-2h1v1h3v1h1v-1h1v1h2v-1h1v1h2v-1h4v-1h2v-1h1v1h2v1h1v-2h1v1h1v-1h1v1h1v2h3v-1h2v1h1v-1h1v1h1v-2h1v2h2v-1h1v1h1v-1h1v1h2v-1h1v1h1v-1h1v1h3v-2h1v1h2v1h4v-1h1v1h1v-1h1v1h1v-1h3v1h1v-1h1v1h2v-1h1v1h1v-2h1v1h3v-1h2v1h1v-1h1v1h2v-1h3v1h2v1h5v-1h1v1h3v-1h1v1h3v-1h1v-1h1v1h4v1h6v-1h1v-1h1v2h1v-1h1v1h2v-1h1v1h1v-1h1v-1h3v-1h2v1h3v-1h2v1h2v1h1v-1h1v1h1v-1h1v1h1v-1h1v1h5v-1h1v1h2v1h3v-1h1v1h1v-2h1v1h1v1h1v-1h3v1h3v-1h2v1h1v-1h1v1h2v-1h1v1h4v-1h1v1h1v-1h1v-1h1v1h1v1h8v-1h2v-1h1v1h1v-1h2v1h3v-1h1v1h5v-1h1v1h1v-1h2v2h2v-1h1v1h1v-1h1v1h1v-1h2v1h3v-1h1v1h3v-2h1v2h5v-1h1v1h2v-1h1v1h3v-1h1v-1h1v2h1v-1h1v1h1v-1h3v1h2v-1h2v-2h1v2h1v-1h1v1h1v-1h1v1h4v1h4v-2h1v2h1v-1h1v1h1v-1h2v1h2v-2h4v1h1v-1h1v1h2v-1h1v1h7v-1h1v1h1v-1h1v1h1v-1h1v1h3v-1h1v1h1v1h3v-1h1v1h2v-2h1v1h3v-1h2v1h4v-1h1v1h3v-1h1v1h1v1h1v-1h1v1h1v-1h3v1h4v-1h1v1h3v-1h1v1h2v-1h1v-1h1v1h1v-1h1v1h1v-1h1v1h1v-1h1v1h7v-1h1v1h2v-1h1v1h2v-1h2v1h1v-1h2v1h1v-1h1v1h1v1h1v-1h2v1h1v-1h1v1h3v-1h1v1h1v-1h3v-1h1v2h1v-1h4v-1h2v1h6v-1h1V399h-2v2h-1v-1h-1v-1h-1v2h-1v-2h-2v1h-3v-1h-1v2h-1v-2h-2v1h-2v-1h-7v1h-1v-1h-5v1h-1v-1h-1v1h-2v-1h-6v1h-1v-1h-1v1h-3v-1h-1v1h-1v-1h-3v1h-1v1h-2v-1h-2v1h-1v-1h-1v1h-1v-1h-3v1h-1v-1h-1v-1h-2v1h-1v-1h-1v1h-2v-1h-1v1h-1v-1h-3v1h-2v1h-1v-1h-2v1h-1v-1h-2v1h-3v-1h-3v1h-3v-1h-1v1h-1v1h-1v-1h-2v-1h-2v-1h-1v1h-1v-1h-1v1h-1v-1h-3v1h-1v-1h-2v1h-2v1h-1v-2h-5v1h-1v-1h-1v1h-4v-1h-1v2h-1v-1h-3v1h-1v-1h-3v1h-1v-1h-3v1h-1v-1h-1v1h-1v-1h-1v1h-2v1h-1v-2h-1v1h-1v-1h-1v-1h-1v1h-1v-1h-5v1h-3v-1h-4v1h-1v-1h-1v1h-3v-1h-2v1h-1v-1h-1v1h-2v-1h-8v1h-3v1h-1v-1h-1v1h-2v-1h-3v1h-1v-1h-3v1h-1v-1h-1v1h-1v-1h-2v1h-2v-1h-2v1h-1v-1h-4v1h-3v-1h-2v-1h-2v1h-2v1h-2v-1h-2v1h-1v-1h-3v1h-1v-1h-4v2h-1v-2h-5v1h-1v-1h-1v1h-2v-1h-1v1h-1v-1h-1v-1h-3v2h-1v-2h-1v1h-2v-1h-1v1h-2v-1h-2v2h-2v1h-2v-1h-1v2h-1v-1h-1v-1h-2v1h-3v1h-1v-3h-1v-1h-3v1h-1v-1h-2v1h-1v-1h-7v2h-1v-2h-2v2h-1v-1h-4v1h-1v-1h-1v1h-1v-2h-3v1h-4v1h-1v-1h-2v-1h-3v1h-2v-1h-2v1h-2v-1h-1v1h-1v1h-1v-1h-1v-1h-1v1h-1v-1h-1v1h-1v1h-1v-2h-2v1h-1v1h-1v-1h-2v1h-1v-1h-2v1h-4v-1h-3v1h-1v-1h-2v1h-2v-1h-1v-1h-7v1h-1v-1h-1v2h-1v-1h-1v1h-1v-1h-3v1h-1v1h-1v-1h-1v1h-1v-1h-1v1h-1v1h-1v-2h-2v-1h-1v-1h-1v1h-1v-1h-2v1h-1v-1h-3v1h-1v-1h-2v1h-1v-1h-1v1h-1v-1h-4v2h-2v-1h-1v1h-1v-1h-3v1h-1v-1h-5v1h-1v-1h-3v1h-1v-1h-1v1h-3v-1h-1v1h-7v-1h-4v-1h-1v1h-2v-1h-5v1h-3v-1h-1v1h-3v1h-2v-1h-1v1h-1v-1h-3v1h-2v-1h-2v-1h-2v1h-2v-1h-4v1h-2v-1h-2v1h-2v1h-1v-1h-1v1h-1v-1h-4v1h-1v-1h-4v1h-1v-1h-2v1h-1v-1h-3v1h-2v-2h-1v1h-1v-1h-4v1h-1v-1h-2v1h-3v-1h-1v1h-1v-1h-2v2h-1v-2h-1v1h-1v1h-1v-2h-8v1h-1v-1h-5v2h-1v-1h-1v-1h-1v2h-2v-1h-1v2h-1v-2h-2v1h-3v-1h-1v1h-1v-1h-2v1h-1v-1h-1v1h-1v-1h-2v1h-1v-1h-1v1h-1v-1h-1v1h-1v-1h-2v1h-1v-1h-1v-1h-3v1h-1v1h-1v-2h-1v1h-2v-1h-2v1h-1v-1h-4v2h-1v-1h-2v-1h-2v1h-3v1h-5v-1h-3v1h-7v-1h-1v2h-1v-2h-2v1h-3v-1h-1v1h-2v-1h-1v1h-4v-1h-6v1h-1v-1h-2v1h-1v-1h-1v1h-1v-1h-8v-1h-3v2h-1v-2h-2v2h-1v-1h-2v-1h-1v1h-1v1h-1v-1h-1v-1h-1v1h-1v-1h-2v1h-1v-1h-2v1h-1v-1h-1v2h-1v-2h-2v1h-1v-1h-2v2h-1v-2h-5v1h-2v-1h-1v1h-1v-1h-2v1h-1v-1h-5v1h-2v1h-2v-1h-2v1h-1v-1h-2v-1h-2v1h-1v-1h-2v1h-1v-1h-1v1h-1v-1h-2v1h-3v-1h-1v1h-2v-1h-2v1h-2v-1h-3v1h-1v-1h-2v1h-8v1h-2v-1h-2v1h-5v-1h-1v1h-4v2h-1v-2h-2v-1h-2v1h-1v1h-1v-2h-4v1h-4v-1h-1v1h-2v1h-1v1h-1v-2h-5v-1h-2v3h-1v-1h-2v-1h-1v-1h-1v1h-1v-1h-1v1h-1v-1h-1v1h-1v-1h-3v1h-1v-1h-1v1h-1v-1h-4v1h-1v-1h-1v-1h-1v1h-1v1h-1v-2h-1v1h-1v-1h-6v1h-1v1h-4v-1h-3v1h-1v-1h-5v-1h-1v1h-1v-1h-2v1h-2v-1h-3v1h-1v-1h-7v2h-1v-2h-1v1h-1v-1h-2v1h-1v-1h-4v1h-1v-1h-3v1h-2v-1h-1v2h-1v-2h-6v1h-1v1h-1v-1h-1v1h-1v-1h-2v1h-1v-1h-3v1h-2v-1h-1v1h-3v-1h-2v1h-2v-1h-1v1h-3v-1h-3v1h-1v-1h-3v1h-1v-1h-1v2h-1v-2h-2v-1h-3v1h-2v1h-3v-1h-2v1h-1v-1h-1v1h-2v-1h-2v1h-1v-1h-2v-1h-5v1h-3v-1h-4v1h-1v-1h-1v1h-2v-1h-1v2h-1v-1h-2v2h-1v-1h-1v-1h-1v1h-1v-1h-2v1h-2v-1h-1v1h-1v-1h-1v1h-5v-2h-1v1h-1v-1h-1v1h-1v-1h-2v1h-4v-1h-1v2h-1v-1h-2v1h-1v-1h-12v1h-1v-1h-1v1h-1v-1h-1v1h-1v-1h-3v1h-3v-1h-3v1h-1v-1h-1v1h-3v-1h-4v1h-1v-1h-2v-1h-2v1h-7v1h-1v-1h-1v1h-1v-1h-1v1h-1v-1h-3v1h-1v-1h-1v1h-1v-1h-1v1h-3v-1h-1v1h-2v-1h-1v1h-1v-2h-1v1h-1v-1h-2v1h-1v-1h-1v1h-1v-1h-1v1h-1v-1h-3v1h-1v-1h-1v1h-1v-1h-1v1h-1v-1h-1v1h-2v-1h-1v2h-1v-1h-1v-1h-1v1h-1v1h-1v-2h-2v1h-1v-1h-1v2h-1v-1h-2v-1h-4v2h-2v1h-1v-1h-3v-1h-3v1h-1v-1h-2v1h-2v-1h-1v1h-3v-1h-1v2h-1v-1h-2v-1h-1v1h-2v-2h-3v1h-1v-1h-8v1h-1v1h-2v-1h-1v1h-2v-1h-1v1h-1v-1h-2v-1h-2v2h-2v-2h-1v1h-1v-1h-1v1h-1v-1h-1v1h-1v1h-2v-2h-1v1h-2v1h-1v-1h-6v1h-2v2h-1v1h-2v-1h-1v-1h-1v2h-1v-2h-2z"/>
<path d="M277 424h1v1h4v-1h3v1h1v-1h5v1h2v-1h1v1h1v-1h1v1h1v-1h1v1h1v-2h1v1h1v1h1v-1h6v1h1v-1h2v1h1v-1h2v1h3v-1h3v1h10v-1h2v1h2v-1h4v1h1v-1h2v1h1v-1h1v1h3v1h1v-1h2v1h1v-1h1v1h2v-1h7v-1h1v1h3v-1h1v1h4v-1h1v1h1v-1h1v1h1v-1h1v1h1v-1h1v1h4v-1h1v1h1v-1h1v-1h1v2h1v-1h2v1h6v1h1v-2h1v2h1v-1h1v-1h1v2h7v-1h1v1h2v-2h1v2h1v-1h2v1h2v-1h4v-1h1v1h4v-1h2v1h2v1h6v-1h1v1h1v-1h1v1h2v-1h1v1h11v-1h1v1h1v-2h1v1h1v1h6v-1h1v1h2v-2h2v1h6v-1h2v1h5v-1h1v1h3v-1h2v1h1v-1h3v2h2v-1h1v1h2v-1h2v1h2v-1h1v1h1v-1h1v-1h1v1h1v-1h2v1h4v-1h5v1h1v-1h3v1h1v-1h1v1h1v-2h1v2h2v-1h1v1h1v-1h1v1h1v-1h1v1h2v-1h1v1h3v-1h2v1h1v-1h5v-1h1v1h3v-2h1v2h8v1h1v-1h2v1h9v1h1v-1h4v1h1v-1h3v1h6v-1h1v1h7v-1h1v1h1v-2h1v2h2v-1h1v1h3v-2h2v1h5v1h4v-1h1v1h1v-1h1v1h1v-1h1v1h1v-1h2v1h1v-1h4v-1h2v1h2v-1h1v1h3v-1h1v2h1v-1h3v1h1v-1h1v1h1v-1h1v1h1v-1h1v1h1v-1h3v-1h3v1h1v-1h1v1h1v-1h3v2h1v-1h1v1h1v-1h1v1h1v-1h1v1h1v-2h1v2h1v-1h2v1h1v-1h1v1h1v-1h1v1h1v-1h1v1h1v-1h1v1h1v-1h1v1h2v-1h3v-1h2v1h6v-1h1v1h3v1h5v-1h2v1h3v-1h1v1h2v-1h2v1h4v-1h3v1h1v-1h2v1h2v-1h3v1h2v-1h2v-1h2v1h2v-1h3v1h5v-1h1v1h2v-1h1v1h2v-1h1v1h1v-1h4v1h1v1h4v-1h1v1h4v-1h2v-1h1v2h7v-1h1v1h8v-1h1v-1h1v1h6v-1h2v2h2v-1h1v1h1v-1h7v-1h2v1h1v-1h1v-1h1v2h5v-1h1v1h1v-1h1v1h1v-1h3v1h2v-1h1v1h1v-1h5v1h1v-1h1v1h3v-1h4v1h3v-1h2v1h2v1h2v-1h2v1h5v-1h2v1h2v-2h2v2h2v-1h1v1h3v-1h1v1h1v-1h1v-1h1v2h1v-1h1v-1h1v2h2v-1h2v1h1v-1h2v-1h1v2h1v-1h1v1h7v-1h2v1h4v-1h3v1h1v-1h1v1h1v-1h5v-1h1v1h3v-1h1v1h5v-1h1v1h2v1h3v-1h1v1h1v-2h1v2h9v-1h1v-1h2v1h3v-1h3v1h2v1h2v-1h3v1h2v-1h1v-1h1v2h2v-1h1v1h1v-1h2v1h4v-1h1v1h3v-1h2v-1h2v1h3v-1h1v1h2v-1h1v1h2v-1h1v1h2v1h8v-1h5v1h1v-1h2v1h1v-1h1v1h1v-1h1v-1h1v1h1v-1h1v1h1v-1h2v-1h1v1h3v1h1v-1h1v1h1v-1h2v1h2v-1h2v1h1v-1h3v2h3v-1h1v-1h1v2h1v-1h2v1h1v-1h1v1h1v-1h1v1h3v-2h1v2h1v-1h2v1h1v-1h1v1h4v-2h1v2h2v-1h1v-1h1v1h4v-1h2v1h2v1h5v-1h2v1h3v-2h1v1h1v1h2v-1h1v1h3v-1h1v1h3v-1h1v1h6v-1h1v1h3v-1h1v1h2v-1h1v1h3v-1h1v1h5v-1h4v-1h1v1h2v1h4v-2h1v1h1v1h4v-1h1v1h2v-1h2v1h1v-1h1v-1h2v2h5v-1h1v1h2v-1h2v1h1v-1h1v1h1v-1h4v1h2v-1h2v1h1v-1h1v1h2v-2h1v1h4v-1h1v1h6v1h1v-2h1v2h4v-2h1v2h1v-1h1v1h1v-1h2v-1h1v-1h1v2h10v-1h1v1h1v-1h1v1h3v-1h1v1h1v-1h7v1h1v-1h1v1h3v-1h2v2h2v-1h2v1h1v-1h1v1h3v-1h1v1h2v-1h1v1h1v-1h1v-1h2v1h1v-1h2v1h2v1h3v-1h1v1h1v-2h1v2h1v-1h1v-1h1v2h1v-1h2v1h5v-1h4v1h2v-1h1v-1h1v1h1v1h2v-1h1v1h1v-1h1v1h1v-2h1v2h6v-1h1v1h1v-1h3v-1h2v2h3v-1h1v1h1v-1h1v1h2v-2h2v1h1v-1h2v1h1v-1h1v1h3v-1h4v1h1v-1h2v1h1v-1h1v1h1v1h1v-2h1v1h1v1h6v-1h2v1h2v-1h1v1h1v-1h2v1h1v-1h2v1h1v-2h1v1h5v-1h2v1h4v-1h1v1h2v1h2v-1h2v1h1v-2h1v2h1v-1h5v1h1v-1h1v1h1v-1h2v1h5v-1h1v1h1v-1h3v-1h4v1h2v-1h2v1h4v-1h1v1h2v-1h3v1h1v-1h1v1h2v-1h1V431h-2v1h-2v-1h-1v1h-1v-1h-3v1h-1v-1h-3v1h-2v-1h-2v1h-1v-1h-1v1h-2v-1h-2v1h-2v-2h-1v1h-1v-1h-1v1h-1v-1h-2v1h-2v-1h-1v1h-2v-1h-6v2h-1v-1h-5v-1h-2v1h-2v-1h-1v1h-1v-1h-2v1h-1v-1h-3v1h-2v-1h-2v2h-1v-2h-1v1h-2v-1h-2v2h-1v-1h-1v1h-2v-1h-2v2h-1v-1h-5v-1h-1v1h-8v-1h-1v1h-2v-1h-3v-1h-1v1h-2v-1h-2v1h-1v-1h-5v1h-2v-1h-3v1h-2v-1h-1v1h-1v-1h-7v2h-1v-1h-1v1h-1v-1h-2v1h-3v-2h-1v1h-1v-1h-2v1h-2v-1h-1v1h-3v-1h-2v1h-1v-1h-1v1h-1v-1h-2v1h-6v-1h-7v1h-1v-1h-2v1h-1v-1h-1v1h-1v-1h-2v1h-1v1h-1v-1h-2v1h-3v-1h-1v1h-1v-1h-2v1h-1v-1h-2v1h-1v-1h-1v1h-5v-1h-1v1h-1v-1h-1v-1h-4v2h-1v-2h-2v2h-1v-1h-6v1h-2v-1h-7v1h-1v-1h-2v-1h-2v1h-2v-1h-2v1h-1v-1h-1v2h-2v-1h-1v1h-1v-1h-2v1h-3v-1h-1v1h-1v-1h-1v1h-1v-2h-5v1h-2v-1h-2v1h-1v-1h-4v2h-1v-2h-4v1h-2v-1h-1v1h-1v-1h-3v1h-1v1h-3v-1h-1v1h-1v-1h-3v1h-1v-1h-1v1h-2v-1h-2v1h-1v-1h-1v1h-1v-1h-3v1h-1v-1h-2v-1h-5v1h-1v-1h-3v1h-1v-1h-2v1h-3v-1h-4v1h-2v-1h-1v1h-1v-1h-3v2h-1v-1h-1v-1h-5v1h-1v-1h-2v1h-1v-1h-2v2h-1v-1h-2v1h-1v-1h-2v1h-2v-1h-1v1h-1v-1h-3v1h-1v-1h-1v1h-1v-1h-3v1h-1v-1h-2v-1h-1v1h-1v-1h-2v1h-1v1h-1v-2h-1v1h-7v1h-1v-1h-2v1h-1v-1h-1v1h-2v-1h-1v1h-3v-1h-5v1h-1v-1h-3v1h-1v-1h-1v1h-1v-1h-1v1h-2v-1h-1v2h-1v-1h-4v-1h-1v1h-2v-1h-1v1h-1v-1h-2v2h-1v-1h-1v-1h-1v1h-2v-1h-1v1h-1v1h-1v-1h-2v-1h-1v2h-1v-2h-2v1h-1v-1h-2v-1h-8v1h-2v-1h-2v2h-1v-1h-4v1h-3v-1h-1v1h-3v-1h-4v1h-1v-1h-6v1h-2v-1h-1v1h-3v-1h-1v1h-1v-1h-1v1h-1v-1h-1v1h-1v-1h-3v-1h-1v1h-1v-1h-4v1h-1v1h-2v-2h-1v1h-1v-1h-2v1h-2v-1h-2v1h-4v-1h-1v1h-1v-1h-1v1h-1v-1h-1v1h-2v-1h-4v1h-1v1h-1v-1h-2v1h-5v-1h-1v1h-1v-1h-1v1h-1v1h-1v-2h-3v-1h-5v1h-1v-1h-2v1h-1v-1h-2v1h-1v-1h-1v1h-2v-1h-1v1h-2v-1h-1v1h-2v-1h-1v2h-1v-2h-3v1h-1v1h-1v-1h-1v-1h-1v1h-1v-1h-1v2h-2v-1h-2v-1h-4v1h-1v-1h-3v2h-1v-2h-2v1h-1v-1h-2v1h-1v-1h-3v1h-2v1h-1v-2h-1v1h-3v-1h-2v1h-1v-1h-3v1h-2v-1h-1v1h-1v-1h-3v1h-1v-1h-2v1h-2v-1h-1v1h-1v-1h-3v2h-1v-1h-1v-1h-3v1h-1v-1h-1v2h-1v-1h-2v1h-2v-1h-6v1h-1v-1h-1v1h-2v-1h-1v1h-1v-1h-3v1h-2v-1h-1v1h-2v-1h-5v1h-1v-1h-3v1h-1v-1h-3v1h-2v-1h-1v1h-1v-1h-1v1h-1v-1h-1v1h-1v-1h-1v1h-2v-2h-1v1h-1v-1h-8v1h-1v-1h-3v1h-2v-1h-2v1h-1v-1h-2v1h-1v-1h-1v1h-1v-1h-7v1h-1v-1h-1v1h-1v1h-1v-1h-1v1h-2v-1h-4v1h-2v-1h-1v1h-1v-1h-3v-1h-3v1h-1v-1h-4v1h-2v-1h-1v1h-1v-1h-1v1h-4v-1h-3v1h-1v-1h-4v1h-1v-1h-4v1h-1v-1h-4v1h-1v-1h-1v1h-6v1h-3v-1h-1v-1h-1v1h-2v1h-1v-2h-2v1h-3v-1h-2v2h-1v-2h-4v1h-2v-1h-1v2h-1v-2h-2v2h-1v-1h-4v-1h-2v1h-1v-1h-1v1h-6v1h-1v-2h-3v1h-1v-1h-2v2h-1v-2h-2v1h-1v-1h-2v1h-3v-1h-8v2h-1v-2h-1v1h-1v-1h-1v1h-2v1h-1v-1h-2v1h-2v-1h-6v1h-1v-1h-1v1h-1v-1h-4v1h-9v-1h-3v2h-1v-1h-8v-1h-1v-1h-2v1h-1v1h-1v-2h-2v1h-2v-1h-1v1h-1v-1h-1v1h-1v-1h-3v2h-1v-2h-1v1h-1v-1h-2v1h-1v-1h-2v1h-2v1h-5v1h-2v-2h-3v1h-1v-1h-1v1h-2v-1h-1v-1h-2v1h-1v-1h-2v1h-2v-1h-1v1h-1v-1h-1v1h-4v-1h-2v1h-3v-1h-4v1h-1v-1h-1v1h-1v-1h-1v1h-1v-1h-4v1h-6v1h-1v-1h-5v1h-1v-1h-2v1h-2v-1h-3v1h-2v-1h-5v1h-2v-1h-4v1h-1v-1h-1v1h-1v-1h-3v1h-1v-1h-1v1h-1v-1h-2v1h-2v-1h-2v-1h-5v1h-1v-1h-2v1h-1v-1h-2v1h-1v-1h-1v1h-2v-1h-1v1h-1v1h-1v-1h-1v1h-1v-1h-1v1h-1v-1h-1v1h-2v-1h-3v2h-1v-1h-2v-1h-1v1h-1v-1h-2v1h-1v-1h-3v1h-1v-1h-1v1h-1v-2h-3v1h-1v-1h-1v1h-1v-1h-1v1h-1v-1h-3v1h-2v-1h-5v1h-3v-1h-3v1h-1v1h-1v-1h-2v-1h-2v1h-1v-1h-1v1h-1v1h-1v-1h-2v1h-1v-1h-4v1h-1v-2h-6v1h-4v-1h-2v1h-1v-1h-1v1h-3v1h-1v-1h-2v1h-1v-1h-2v1h-1v-1h-5v1h-3v-1h-2v1h-1v-1h-2v1h-1v-1h-2v-1h-4v2h-1v-1h-1v-1h-6v1h-1v-1h-3z"/>
<path d="M277 454h1v2h4v-1h2v-1h1v1h1v-1h2v1h1v-1h3v1h2v-2h1v3h1v-1h1v1h2v-1h1v1h1v-1h3v1h1v-1h1v1h1v-1h2v1h1v-1h1v1h3v-1h10v-1h1v1h2v-1h2v2h4v-1h3v1h1v-1h2v1h2v-1h1v-1h1v2h2v-2h1v1h1v-1h3v1h1v-1h9v-1h1v1h3v1h11v-1h3v1h3v1h1v-1h2v1h3v-2h1v2h1v-1h1v1h1v-1h2v1h4v-2h1v1h1v1h1v-1h1v1h3v-1h1v1h4v-1h1v1h1v-1h1v1h6v-1h1v1h1v-1h1v1h3v-1h2v1h2v-1h1v1h1v-2h1v1h1v-1h2v1h1v-1h1v1h1v1h4v-1h1v1h1v-1h1v1h1v-1h1v1h4v-1h2v-1h1v1h1v1h6v-1h2v1h3v-1h1v1h2v-1h2v1h1v-1h5v1h1v-1h4v1h3v-1h3v1h7v-1h1v1h1v-1h2v1h3v-1h2v1h1v-1h2v1h1v-1h1v1h2v-1h3v1h4v-1h4v1h1v-1h2v1h4v-1h1v1h1v-2h1v1h1v1h2v-1h4v-1h2v1h5v1h1v-1h4v1h1v-1h1v1h2v-1h1v1h1v-1h1v1h1v-1h2v1h2v-1h1v1h1v-1h4v1h1v-1h2v1h2v-1h3v1h2v-1h2v1h3v-1h1v1h2v-1h1v1h2v-1h1v1h6v-2h1v1h1v-1h1v1h2v-1h4v1h1v1h1v-1h3v1h2v-1h1v1h2v-1h1v1h4v-1h5v1h2v-1h1v1h3v-1h1v1h2v-1h1v1h2v-2h1v1h2v-1h1v2h3v-1h1v-1h1v1h6v-1h1v1h2v1h2v-1h3v1h7v-1h1v1h1v-1h1v1h2v-1h1v-1h1v2h4v-1h2v1h2v-1h2v1h1v-1h2v1h4v-1h1v-1h1v2h5v-1h2v1h5v-2h1v2h2v-1h4v1h1v-2h1v1h4v-1h1v1h2v-1h2v-1h1v1h2v1h2v1h2v-1h1v1h1v-1h2v1h1v-2h1v1h1v1h1v-1h2v1h4v-1h2v1h3v-1h1v1h1v-1h3v1h2v-1h3v-1h1v1h1v1h2v-1h3v-1h1v-1h1v1h1v1h1v1h1v-1h1v1h2v-1h2v1h1v-2h1v2h1v-1h4v-1h1v2h2v-1h1v1h5v-1h1v1h1v-1h2v1h3v-1h2v1h1v-1h1v1h4v-1h2v1h4v-2h1v2h3v-1h1v1h4v-1h1v1h3v-1h3v1h1v-1h3v1h1v-1h2v1h1v-1h1v1h1v-1h1v-1h1v1h2v-1h2v1h2v-1h1v1h1v-1h1v2h3v-2h1v2h2v-1h1v1h1v-1h1v1h1v-1h1v1h2v-1h2v1h3v-1h2v-1h1v1h2v-1h1v2h2v-2h1v1h1v1h4v-1h1v-1h2v1h1v-1h1v1h1v-1h1v1h2v-1h1v1h1v-1h3v1h1v-1h2v1h6v-1h3v1h2v-1h1v1h6v1h3v-2h1v2h1v-1h2v1h1v-1h2v1h1v-1h1v1h1v-1h4v1h1v-1h1v-1h1v1h4v1h1v-1h3v1h2v-1h1v1h2v-1h1v1h1v-1h1v1h1v-1h2v1h1v-1h2v1h3v-1h2v1h1v-1h4v1h1v-1h2v1h3v-1h5v1h2v-1h1v1h1v-1h3v1h1v-1h1v1h2v-1h1v1h3v-1h1v1h1v-1h1v1h5v-1h1v1h1v-1h5v1h1v-1h2v-1h1v-1h1v1h2v-1h1v1h2v-1h1v1h1v-1h2v1h1v1h1v-1h3v-1h1v-1h1v1h1v1h5v-1h1v1h2v1h1v-1h2v1h1v-1h1v1h4v-1h1v1h1v-1h1v1h1v-1h3v1h4v-1h8v-1h1v1h1v1h2v-1h3v1h2v-1h1v1h1v-1h2v1h1v-1h5v-1h1v2h1v-1h1v1h2v-1h4v-1h1v2h1v-1h1v1h2v-1h2v1h3v-1h3v1h3v1h1v-1h2v1h3v-1h1v1h3v-1h2v1h1v-1h2v1h3v-1h1v1h1v-1h1v-1h1v2h1v-1h1v1h1v-2h1v2h2v-1h1v-1h1v2h1v-1h1v1h1v-1h1v1h1v-1h1v1h4v-1h1v1h4v-1h2v1h3v-1h1v1h2v-1h1v1h2v-1h1v1h1v-1h2v1h3v-1h1v1h1v-2h1v2h2v-2h1v2h1v-1h2v1h2v-1h1v1h3v-1h2v1h1v-1h1v1h2v-1h1v1h1v-1h1v-1h1v1h2v-1h4v1h2v-1h2v-2h1v2h1v1h1v-1h2v1h1v1h4v-1h2v-1h7v1h2v-1h1v1h2v-1h1v1h2v-1h1v1h1v-1h1v1h7v-1h1v1h1v-1h3v1h2v1h2v-1h1v1h5v-1h1v1h5v-2h1v2h4v-1h1v1h1v-1h3v1h5v-1h1v1h2v-2h1v1h2v-1h1v1h2v-1h2v1h1v-1h1v1h7v-1h1v1h1v1h1v-1h3v-1h1v2h8v-1h8v1h2v-1h1v1h11v-2h1v2h1v-1h4v-1h1v1h2v-1h1v2h6v-1h1v1h2v-1h1v1h1v-1h1v1h2v-1h2v1h2v-1h3v-1h4v1h7v-1h1v1h2v1h4v-1h1v1h5v-1h2v1h4V460h-1v1h-1v-1h-1v2h-1v-2h-1v2h-1v-1h-2v-1h-4v1h-1v-1h-1v1h-2v-1h-2v1h-6v-1h-1v1h-1v-1h-2v1h-2v-1h-1v2h-1v-2h-4v1h-2v-1h-1v1h-2v-1h-2v1h-2v-1h-1v1h-1v-1h-3v1h-1v-1h-2v1h-1v-1h-3v1h-1v-1h-1v1h-1v-1h-5v1h-1v-1h-1v1h-1v-1h-1v1h-2v-1h-2v1h-1v-1h-2v1h-2v-1h-1v1h-1v-1h-3v1h-2v1h-1v-1h-1v1h-1v-1h-2v1h-1v-1h-2v-1h-1v1h-1v-1h-10v1h-1v-1h-4v1h-1v-1h-1v1h-1v-1h-1v1h-1v-1h-4v1h-1v-1h-1v1h-2v-1h-2v1h-1v-1h-1v1h-2v-1h-1v1h-1v-1h-1v1h-1v1h-1v-1h-2v1h-1v-1h-1v1h-2v-1h-4v-1h-1v2h-1v-1h-2v-1h-3v2h-1v-2h-3v1h-1v-1h-1v1h-1v-1h-1v1h-1v-1h-1v1h-1v-1h-2v1h-1v1h-1v-2h-6v1h-1v-1h-1v1h-1v-1h-3v1h-4v-1h-1v1h-3v2h-1v-1h-2v-1h-1v1h-1v-1h-2v1h-2v-1h-1v-1h-1v1h-2v-1h-1v1h-4v-1h-1v1h-1v-1h-3v1h-1v-1h-3v1h-1v-1h-2v1h-1v-1h-3v1h-2v-1h-1v1h-1v-1h-2v2h-1v-1h-1v-1h-1v1h-1v-1h-1v1h-5v-1h-1v1h-1v-1h-1v1h-1v-1h-1v1h-3v-1h-2v1h-1v-1h-4v1h-1v-1h-4v1h-1v-1h-1v1h-1v-1h-1v1h-2v-1h-3v1h-1v-1h-1v1h-1v-1h-1v1h-1v-1h-3v1h-3v-1h-1v2h-1v-2h-3v1h-2v-1h-3v1h-2v-1h-1v1h-1v1h-2v1h-1v-1h-2v-1h-2v1h-1v-1h-1v2h-1v-1h-1v-1h-2v1h-2v-1h-1v1h-9v-1h-1v1h-3v-1h-1v1h-2v-1h-1v1h-1v-1h-1v1h-1v-1h-1v1h-1v-1h-2v2h-1v-2h-1v1h-1v-1h-2v1h-2v-1h-1v1h-1v-1h-2v1h-1v-1h-1v1h-2v-1h-1v1h-2v-1h-2v2h-1v-1h-7v-1h-1v1h-1v-1h-1v1h-1v-1h-1v1h-2v-1h-1v1h-1v-1h-2v2h-1v-1h-2v1h-1v-2h-1v1h-5v1h-4v-1h-2v1h-1v-1h-1v2h-1v-2h-2v-2h-2v1h-1v-1h-2v1h-1v-1h-2v1h-7v1h-1v-1h-2v1h-1v-1h-2v-1h-2v1h-1v-1h-2v1h-2v-1h-1v2h-1v-1h-1v1h-1v-1h-2v1h-3v-1h-3v1h-1v-1h-2v-1h-2v1h-1v-1h-1v1h-1v-1h-10v1h-2v-1h-3v1h-2v-1h-1v1h-1v-1h-2v1h-3v2h-1v-1h-3v-1h-2v-1h-2v1h-2v-1h-1v1h-3v1h-1v-1h-1v-1h-2v1h-2v-1h-1v1h-2v1h-1v-1h-1v2h-1v-2h-1v1h-2v-1h-1v1h-1v-1h-4v-1h-6v1h-1v-1h-2v1h-1v-1h-2v1h-1v-1h-2v1h-3v-1h-1v1h-1v-1h-2v1h-1v1h-1v-1h-1v-1h-3v1h-2v-1h-6v1h-2v-1h-1v1h-1v-1h-1v1h-5v-1h-2v1h-5v1h-6v-1h-1v-1h-1v1h-1v-1h-1v2h-1v-2h-4v1h-1v-1h-4v2h-1v-2h-2v1h-1v-1h-2v1h-1v-1h-2v1h-3v1h-1v-1h-2v1h-2v-2h-4v1h-3v-1h-1v1h-1v-1h-2v1h-2v-1h-10v1h-3v-1h-1v1h-4v-1h-1v1h-1v-1h-2v1h-1v-1h-2v1h-4v-1h-1v1h-1v1h-5v-1h-1v-1h-2v1h-2v-1h-3v1h-2v-1h-8v2h-1v-2h-1v1h-1v-1h-1v1h-2v-1h-2v1h-3v-1h-2v1h-1v1h-1v-2h-1v1h-2v-1h-1v1h-1v1h-1v-1h-2v1h-1v-1h-1v1h-3v-1h-3v1h-1v-2h-1v1h-2v-1h-1v1h-1v-1h-1v1h-1v-1h-3v1h-3v-1h-3v1h-2v-1h-1v1h-3v-1h-1v1h-1v-1h-2v1h-4v1h-1v-1h-1v-1h-1v2h-1v-2h-5v1h-1v1h-1v-1h-1v-1h-1v1h-4v-1h-1v1h-4v-1h-3v1h-4v-1h-2v1h-1v-1h-3v1h-2v-1h-1v1h-1v1h-1v-2h-1v1h-1v-1h-9v1h-1v1h-2v-1h-8v1h-1v-1h-1v1h-1v-2h-2v1h-1v-1h-6v1h-2v-1h-7v1h-2v-1h-1v1h-1v-1h-2v1h-3v1h-2v-1h-1v1h-1v-1h-2v1h-1v-1h-1v-1h-1v2h-1v-1h-1v-1h-7v1h-1v-1h-3v1h-1v-1h-1v1h-3v-1h-6v1h-2v1h-1v-2h-3v1h-4v1h-1v-1h-3v1h-1v-1h-5v1h-2v-1h-3v-1h-2v2h-1v-2h-4v1h-2v-1h-1v1h-3v-1h-5v1h-1v-1h-1v1h-1v-1h-3v2h-1v-1h-1v1h-2v-1h-2v1h-2v-1h-2v1h-1v-1h-2v1h-1v-1h-2v1h-2v-1h-4v1h-1v-1h-1v1h-1v-1h-1v1h-1v-1h-3v1h-2v1h-2v-2h-1v1h-2v-1h-2v1h-2v-1h-2v1h-2v-1h-2v1h-1v-1h-1v1h-3v-1h-1v1h-1v-1h-2v-1h-1v1h-2v-1h-2v1h-4v1h-1v-1h-1v-1h-4v1h-2v-1h-1v1h-4v-1h-2v1h-1v-1h-1v1h-1v-1h-2v1h-1v1h-1v-1h-1v1h-1v-1h-4v1h-1v-1h-2v1h-3v-1h-4v1h-3v-1h-2v1h-2v-2h-1v1h-2v-1h-7v1h-1v-1h-2v1h-5v-1h-3v1h-4v1h-1v-1h-1v1h-1v-1h-1v1h-1v-1h-1v-1h-3v1h-1v-1h-1v1h-1v1h-2v1h-1v-1h-2v-1h-2v1h-5v1h-1v-1h-4v-1h-1v-1h-2v1h-1v-1h-1v1h-2v-1h-2v1h-1v-1h-1v1h-3v-1h-4v2h-1v-1h-1v-1h-8v1h-3v-1h-3v1h-1v-1h-9v1h-2v-1h-4v1h-1v-1h-5v1h-3v-1h-1v2h-1v-1h-1v-1h-3v1h-1v-1h-1v1h-1v-1h-2z"/>
<path d="M277 486h2v-1h1v1h1v-1h1v1h3v-1h1v1h5v-1h1v1h2v-1h3v-1h1v1h1v1h1v-1h1v1h2v-1h1v1h1v-1h1v1h1v-1h1v1h1v-1h1v1h2v-1h2v1h5v-1h1v1h1v-1h2v1h2v-1h3v1h2v-1h2v1h2v-1h2v-1h1v1h1v1h1v-1h1v1h4v-1h1v-1h1v2h6v-1h1v1h2v-1h1v1h1v-1h3v1h2v-1h1v1h3v-1h1v1h1v-1h3v1h1v-2h2v2h1v-1h1v1h1v-1h1v1h6v-1h1v1h2v-1h2v1h1v-1h1v1h1v-1h3v1h1v-1h1v1h1v-1h2v1h2v-2h2v1h1v1h3v-1h1v-1h1v1h1v1h3v-1h1v1h2v-1h2v1h3v-1h1v-1h1v2h3v-1h1v1h3v-1h2v1h2v-2h1v2h4v-1h2v1h1v-1h2v1h1v-1h2v1h1v-1h1v1h1v-1h1v-1h1v1h1v1h2v-1h2v1h3v-1h1v1h1v-1h1v-1h1v1h1v1h8v-1h1v1h5v-1h2v1h1v-1h1v1h3v-1h1v1h2v-1h1v1h2v-1h1v1h2v-1h5v1h2v-1h1v1h1v-1h3v1h4v-1h1v1h4v-2h1v1h1v1h4v-1h1v1h2v-1h1v-1h1v1h1v-1h2v2h4v-1h1v1h1v-1h1v1h2v-1h2v1h9v-1h2v1h4v-1h1v1h3v-1h1v1h2v-1h1v1h1v-1h2v1h6v-1h1v-1h1v2h1v-1h1v1h4v-1h1v-1h1v1h1v1h1v-1h1v1h2v-2h1v2h3v-1h2v1h1v-2h1v1h1v1h1v-1h1v1h4v-1h1v1h2v-2h1v2h1v-1h1v1h5v-1h6v1h1v-1h1v1h1v-1h1v1h2v-1h1v1h1v-1h3v1h1v-1h4v1h1v-1h1v1h2v-1h1v1h2v-1h1v-1h1v1h1v1h1v-1h1v1h2v-1h2v1h1v-1h3v1h3v-1h1v-1h1v2h5v-1h2v1h1v-1h1v1h4v-1h2v1h1v-1h2v1h2v-1h1v1h2v-1h1v1h1v-1h1v1h1v-1h1v1h3v-1h2v1h1v-1h1v1h2v-1h1v1h2v-1h1v1h2v-1h2v1h1v-1h1v1h3v-1h1v1h1v-1h1v1h5v-1h1v1h3v-2h1v1h2v1h1v-1h1v1h3v-1h1v1h2v-1h1v1h4v-1h1v1h1v-1h1v1h2v-1h1v-1h1v2h3v-2h1v2h1v-1h1v1h2v-1h1v1h7v-1h1v1h2v-1h1v1h5v-1h1v1h1v-1h1v1h1v-1h2v1h6v-1h1v1h1v-1h4v-1h1v2h2v-1h1v1h3v-1h2v-1h1v2h6v-1h3v1h1v-1h3v1h3v-1h1v1h2v-1h1v1h2v-1h2v1h3v-1h1v1h2v-1h1v1h1v-1h1v1h4v-1h2v1h1v-1h1v-1h1v1h1v-1h1v2h1v-1h3v1h1v-2h1v1h1v1h2v-1h1v1h3v-1h2v1h1v-1h2v1h3v-1h3v1h3v-1h1v1h1v-1h1v1h1v-1h1v1h2v-1h1v1h2v-1h3v1h1v-1h2v1h4v-2h1v2h1v-1h2v1h2v-1h1v1h2v-1h3v1h5v-1h3v1h1v-1h1v1h1v-2h1v2h1v-2h1v2h4v-1h2v1h1v-1h1v1h5v-1h1v1h7v-1h2v-1h1v1h5v1h2v-1h1v1h1v-1h1v1h1v-1h1v1h2v-1h1v1h1v-1h1v1h5v-1h2v1h2v-2h1v1h3v-1h1v2h1v-1h2v1h3v-1h1v1h5v-1h1v-1h1v2h4v-1h2v1h1v-1h1v1h1v-1h1v1h1v-1h1v1h1v-1h1v1h3v-1h1v1h5v-1h5v1h1v-2h1v2h1v-1h1v1h1v-1h1v1h4v-1h1v-1h1v1h1v1h1v-1h3v1h3v-1h1v1h1v-1h2v1h1v-1h1v1h4v-2h1v2h3v-1h7v1h3v-1h2v1h2v-1h1v1h4v-1h3v1h7v-1h1v-1h1v2h2v-1h1v1h1v-1h3v1h1v-1h1v1h3v-1h1v1h3v-1h4v1h1v-1h1v1h2v-1h1v1h2v-2h1v1h1v1h1v-1h1v1h2v-1h1v1h1v-1h1v-1h5v1h2v1h2v-1h2v1h9v-1h6v1h2v-1h2v1h1v-1h7v1h3v-1h1v1h1v-1h1v1h2v-1h1v1h1v-1h1v-1h1v1h2v1h5v-1h2v-1h1v1h2v2h2v-1h4v-1h1v1h4v-1h1v1h1v-1h1v1h2v-1h1v1h3v-1h1v1h1v-1h1v2h1v-2h1v2h7v-1h1v1h1v-1h1v1h1v-1h2v-1h1v2h4v-1h1v1h1v-1h1v1h4v-1h6v1h1v-1h1v1h1v-1h1v-1h2v1h1v-1h1v1h3v-1h4v1h1v-1h1v1h1v-1h2v1h1v-1h3v-1h1v2h1v-1h2v1h2v-1h2v-1h1v2h1v-1h1v1h1v-1h2v-1h1v1h1v-2h1v1h1v1h1v1h5v-2h2v2h1v-1h1v1h1v-1h1v1h2v-1h4v1h1v-1h1v1h1v-1h1v1h4v-1h2v1h1v-1h1v1h1v-1h1v1h2v-1h4v1h3v-1h1v1h1v1h2v-1h2v1h3v-1h1v-1h1v1h8v-1h3v1h1v-1h1v-1h1v2h1v-1h3v1h3v-1h2v1h7v-1h1v1h1v-1h2v1h2v-1h2v1h3v1h1v-1h1v1h1v-2h1v1h1v-1h2v1h1v-1h1v1h1v-1h1v1h2v-2h2v1h1v1h2v-2h1v1h2v-1h1v2h1v-1h1v1h2v-1h5v1h2V491h-1v-1h-1v1h-2v-1h-1v1h-5v-1h-2v1h-1v-1h-9v1h-4v-1h-1v1h-1v-1h-4v2h-1v-2h-7v1h-4v1h-1v-1h-2v-1h-1v1h-1v-1h-2v1h-3v-1h-5v1h-1v-1h-2v1h-2v-1h-2v1h-5v-1h-1v1h-1v-1h-3v1h-1v-1h-1v-1h-2v1h-3v1h-2v-1h-1v1h-2v-1h-4v1h-1v-1h-5v1h-4v-1h-4v1h-1v1h-1v-1h-1v-1h-4v1h-1v-1h-4v1h-1v-1h-3v1h-1v-1h-5v1h-1v-1h-2v1h-3v-1h-1v1h-3v-1h-4v2h-1v-2h-1v1h-1v-1h-2v1h-4v-1h-1v1h-2v-1h-1v1h-3v-1h-4v1h-1v-1h-1v1h-1v-1h-1v1h-1v-1h-4v1h-2v-1h-3v1h-1v-1h-2v1h-2v-1h-1v1h-3v-1h-2v1h-1v-1h-6v1h-1v-1h-11v1h-1v-1h-2v1h-2v-1h-1v1h-1v-1h-1v2h-1v-2h-1v1h-2v-1h-1v1h-2v-1h-3v-1h-1v1h-3v1h-2v1h-1v-2h-2v1h-1v-1h-3v1h-2v-1h-1v1h-1v-1h-3v1h-2v-1h-1v1h-2v-1h-1v1h-1v-1h-1v2h-1v-1h-1v-1h-2v1h-2v-1h-6v1h-2v-1h-7v1h-1v-1h-5v1h-1v-1h-1v1h-1v-1h-7v1h-1v-1h-3v1h-1v-1h-1v1h-2v-1h-3v1h-2v-1h-2v1h-5v-1h-5v1h-4v-1h-2v1h-1v-1h-1v1h-5v-1h-7v1h-1v-1h-7v2h-1v-2h-1v1h-2v-1h-1v1h-1v-1h-4v1h-1v1h-1v-1h-3v-1h-2v2h-1v-2h-1v1h-2v-1h-2v1h-2v-1h-2v1h-2v-1h-2v1h-1v-1h-1v1h-1v-1h-2v2h-1v-1h-1v1h-1v-1h-1v-1h-2v1h-1v-1h-1v1h-1v-1h-1v1h-3v-1h-2v1h-1v-1h-3v1h-2v-1h-1v1h-1v-1h-1v2h-1v-2h-1v1h-1v-1h-3v1h-2v-1h-1v1h-1v-1h-1v1h-1v-1h-11v1h-1v-1h-3v1h-1v-1h-1v1h-2v-1h-4v1h-1v-2h-3v2h-1v-1h-1v1h-5v-1h-1v1h-2v-1h-2v1h-1v-1h-1v1h-1v-1h-1v1h-1v-1h-4v1h-1v-1h-2v1h-2v-1h-2v2h-1v-1h-1v-1h-2v1h-1v-1h-4v1h-2v-1h-6v-1h-1v1h-2v-1h-1v1h-2v1h-2v-1h-4v1h-1v-1h-2v1h-1v-1h-2v1h-2v-1h-1v1h-2v-1h-1v1h-1v-1h-7v1h-1v-1h-2v-1h-1v1h-1v-1h-1v2h-1v-2h-1v2h-2v-1h-5v1h-1v-1h-1v1h-1v-1h-3v1h-1v-1h-4v1h-1v-1h-2v2h-1v-2h-2v2h-1v-1h-1v-1h-1v2h-1v-2h-1v1h-1v-1h-5v1h-2v-1h-2v2h-1v-2h-2v1h-1v-1h-2v1h-1v-1h-2v2h-1v-1h-1v-1h-3v1h-1v-1h-1v1h-1v-1h-1v1h-2v-1h-2v1h-1v-1h-3v1h-1v-1h-1v1h-2v-1h-3v1h-1v-1h-1v1h-1v1h-1v-2h-3v1h-1v-1h-6v1h-1v-1h-1v1h-2v-1h-2v-1h-4v1h-1v1h-1v-1h-4v1h-3v-1h-2v1h-1v-1h-5v1h-2v-1h-3v1h-1v-1h-1v1h-2v-1h-1v1h-2v-1h-3v1h-1v-1h-2v1h-1v-1h-3v1h-2v-1h-1v-1h-1v1h-1v-1h-2v1h-2v-1h-1v1h-1v1h-1v-1h-1v1h-1v-1h-3v1h-2v-1h-1v1h-1v-1h-1v1h-1v1h-1v-1h-2v-1h-2v1h-1v-1h-2v2h-1v-2h-1v1h-2v-1h-1v1h-1v-1h-2v1h-1v-1h-1v1h-4v-1h-1v1h-2v-1h-1v1h-2v-1h-2v1h-1v-1h-1v1h-1v-1h-1v1h-1v-1h-1v1h-1v-1h-1v1h-1v1h-1v-2h-3v1h-2v-1h-2v1h-1v-1h-1v1h-1v-1h-1v1h-2v-1h-1v1h-2v-1h-2v1h-3v-1h-4v1h-1v-1h-5v1h-2v-1h-3v1h-3v-1h-2v1h-5v-1h-1v1h-1v-1h-4v1h-1v-1h-3v1h-2v-1h-2v1h-1v-1h-4v1h-1v-1h-1v1h-2v-1h-4v-1h-2v1h-7v1h-2v-1h-1v1h-1v-1h-3v1h-1v-1h-2v1h-1v-1h-1v1h-1v-1h-5v1h-1v-1h-1v1h-1v-1h-3v1h-1v-1h-2v1h-1v-1h-4v1h-1v-1h-3v1h-1v-1h-1v1h-2v-1h-5v1h-3v-1h-5v1h-2v-1h-7v1h-1v-1h-1v1h-3v-1h-1v1h-2v-1h-5v2h-1v-2h-1v1h-1v-1h-1v1h-1v-2h-2v1h-2v-1h-1v1h-1v-1h-1v1h-1v-1h-3v1h-2v1h-1v-1h-2v1h-2v-1h-3v1h-2v-1h-3v1h-1v-1h-2v1h-1v-1h-1v1h-1v-1h-5v1h-1v-1h-2v1h-1v-1h-2v1h-3v-1h-4v1h-1v-1h-3v1h-1v-1h-1v1h-1v-1h-2v1h-1v-1h-1v1h-1v-1h-2v1h-5v-1h-2v1h-1v-1h-1v1h-1v-1h-1v1h-7v1h-1v-1h-1v-1h-5v1h-1v-1h-4v2h-1v-1h-4v-1h-1v1h-1v-1h-1v1h-1v-1h-1v1h-2v-1h-1v1h-1v-1h-6v1h-1v-1h-1v1h-1v-1h-2v1h-1v-1h-3v1h-1v-1h-2v1h-1v-1h-1v-1h-5v1h-1v1h-5v-1h-1v1h-2v-1h-1v1h-1v-1h-1v1h-5v-1h-1v-1h-5v1h-3v1h-2v-1h-2v1h-2v-1h-1v1h-1v-1h-3v2h-1v-2h-1v1h-1v-1h-5v1h-1v-1h-1v1h-1v-1h-3v1h-2v-1h-2v1h-2v-1h-1v1h-1v-1h-1v2h-1v-2h-1v1h-1v-1h-1v1h-1v-1h-1v1h-1v-1h-1v1h-1v-1h-1v1h-1v-1h-6v1h-2v-1h-1v2h-1v-2h-3v1h-1v-1h-2v1h-1v-1h-1v1h-2v-1h-1v-1h-3v1h-4v1h-1v-1h-5z"/>
<path d="M277 514h1v1h2v-1h3v1h1v-1h2v1h1v-1h1v1h1v-1h2v1h5v1h4v-1h1v1h6v-1h3v1h5v-1h1v1h2v-1h1v1h2v-1h2v-1h1v2h2v-1h1v1h5v-2h1v1h3v1h6v-1h2v1h1v-1h1v-1h5v-1h1v1h9v-1h1v1h3v1h1v-1h1v2h1v-1h1v1h1v-2h1v2h1v-1h1v1h1v-1h1v1h1v-2h1v2h2v-1h1v-1h1v1h5v-1h1v1h1v-1h9v1h2v-1h3v1h13v-1h1v1h7v-1h1v1h1v-1h1v1h2v-1h1v1h1v-1h3v1h2v-1h1v1h1v-1h1v1h3v1h1v-1h2v1h6v-1h2v-1h1v2h1v-1h1v1h1v-1h3v1h1v-2h2v1h2v-1h3v1h1v-1h4v1h1v-1h1v1h3v1h4v-1h1v1h2v-1h1v-1h1v2h6v-1h1v1h3v-2h1v1h2v1h2v-1h1v-1h1v2h1v-1h2v-1h2v-1h1v2h1v-1h1v1h2v-2h2v1h5v-1h1v2h1v-1h1v2h4v-1h1v1h1v-1h1v1h3v-1h2v1h1v-1h1v-1h2v1h1v-1h1v1h2v-1h1v1h1v-1h1v2h1v-2h1v2h2v-1h1v1h3v-1h1v1h3v-2h1v2h1v-1h1v1h1v-1h1v1h1v-1h1v-1h2v1h2v-1h1v1h1v-1h1v1h2v-1h1v1h1v-1h1v1h3v-1h2v1h1v-1h1v-1h1v2h1v-2h2v2h1v-1h3v1h1v-1h1v1h1v-1h2v-1h1v1h1v1h2v-1h1v1h2v-1h2v1h2v-1h2v1h4v-2h1v2h3v-1h1v1h4v-1h5v1h3v1h2v-1h1v1h2v-1h1v1h5v-1h1v1h1v-1h1v1h1v-1h1v1h4v-1h1v1h1v-2h1v1h1v-1h2v1h3v-1h1v1h1v-1h2v1h1v-1h1v2h4v-1h3v1h2v-1h1v1h2v-1h3v-1h2v1h1v-1h4v1h1v-1h3v1h2v-1h2v1h1v-1h1v1h1v-1h1v1h1v-1h1v1h1v1h3v-1h1v-1h1v1h1v-1h1v1h1v-1h4v-1h1v2h2v1h1v-2h2v1h2v-1h3v1h1v-1h3v1h3v-1h2v1h2v-1h2v1h5v-1h2v1h2v1h1v-1h1v1h4v-1h2v1h4v-1h3v1h1v-1h1v-1h1v1h4v-1h1v1h1v-1h1v1h3v1h4v-1h1v1h1v-1h1v1h5v-1h2v1h2v-1h2v1h1v-2h2v2h2v-1h1v1h1v-1h3v-1h1v1h3v-1h1v1h1v-1h1v1h2v-1h1v1h1v-1h1v1h2v-1h1v1h1v-2h1v2h2v1h2v-1h1v1h2v-2h1v1h1v1h1v-2h1v2h7v-1h2v-1h1v1h2v1h4v-1h1v1h1v-2h1v2h2v-1h1v1h1v-1h2v1h1v-1h1v1h5v-2h1v2h2v-2h1v1h2v1h1v-1h2v-1h1v1h2v-1h2v1h2v-1h2v1h2v1h3v-1h1v1h1v-2h1v1h1v1h3v-1h1v1h1v-1h1v1h4v-1h3v-1h1v-1h1v2h2v-1h1v1h1v-1h3v1h1v-1h1v1h2v-1h1v1h1v-1h1v2h2v-1h3v1h6v-2h1v2h3v-1h1v1h2v-1h2v1h1v-1h2v1h2v-2h2v1h1v-1h1v1h4v-1h4v1h2v-1h1v1h1v-1h2v1h1v-1h2v1h1v-1h2v1h1v-1h2v1h2v-1h3v1h1v-1h2v1h3v-1h1v1h3v-1h4v1h3v1h1v-1h1v1h3v-1h1v1h2v-1h1v1h2v-1h2v1h3v-1h4v1h2v-1h1v1h1v-2h1v1h2v-1h1v1h1v-1h1v1h1v1h1v-1h1v-1h1v2h2v-1h2v-1h1v2h1v-1h2v1h4v-1h4v-1h1v1h1v-1h1v1h1v-1h1v1h3v-1h1v1h3v-1h1v1h2v-1h1v1h2v-1h1v1h2v-2h1v1h1v1h1v-1h1v1h1v-1h1v1h3v-1h2v1h2v-1h4v1h1v-1h1v1h6v1h6v-1h2v1h1v-1h7v-1h3v1h3v-1h1v1h3v1h1v-1h2v1h1v-1h2v1h3v-1h1v1h4v-1h1v1h1v-2h2v1h1v-1h1v1h3v-1h2v1h2v-2h1v1h3v2h1v-1h1v1h1v-2h1v2h1v-1h2v1h4v-2h1v2h2v-1h1v-1h1v1h2v-1h2v1h1v-1h2v2h2v-1h1v1h1v-1h3v-1h1v2h2v-1h1v-1h1v2h1v-1h1v1h1v-1h1v1h2v-1h2v1h2v-1h2v1h1v-1h2v1h1v-1h1v-1h2v1h5v1h1v-1h1v-1h1v2h1v-1h1v1h2v-2h1v2h5v-1h1v-1h1v1h4v-1h2v1h1v-1h2v1h1v-1h1v1h1v-1h1v1h3v-1h1v1h2v-1h3v1h1v-1h1v1h2v-1h2v1h1v-1h1v1h1v-1h1v2h1v-1h1v1h1v-1h2v1h2v-1h2v1h1v-1h1v1h1v-1h2v1h1v-1h1v1h2v-1h1v1h1v-1h4v1h1v-1h3v1h3v-2h2v-1h2v1h1v-1h2v1h2v-1h1v1h1v1h1v1h3v-1h2v1h6v-1h1v1h1v-1h3v1h1v-1h2v1h1v-2h2v1h1v-1h1v1h2v-1h1v1h2v-1h1v1h1v-1h1v1h3v-1h1v1h1v-1h1v1h1v-1h1v1h1v-1h1v1h1v-1h1v1h3v-1h2v1h1v-1h4v1h2v-1h1v2h2v-2h2v2h2v-1h1v1h4v-1h1v-1h3v1h1v-1h1v1h4v1h4v-1h1v-1h1v2h1v-1h1v1h6v-1h1v1h1v-1h1v1h2v-1h2v1h1v-1h2v1h2v-1h1V521h-1v1h-2v-1h-2v1h-1v-1h-2v1h-1v-1h-1v1h-1v-1h-2v1h-1v-1h-1v-1h-2v1h-1v-1h-4v1h-1v-1h-6v1h-4v-1h-4v1h-1v-1h-5v1h-1v-1h-1v1h-1v-1h-1v1h-1v-1h-2v1h-2v-1h-1v1h-1v-1h-3v1h-1v-1h-1v1h-2v-1h-2v1h-2v-1h-1v1h-2v-1h-1v1h-1v-1h-1v2h-1v-2h-4v1h-3v-1h-5v1h-1v-1h-2v2h-1v-1h-4v1h-1v-1h-2v1h-2v-1h-1v1h-2v-1h-1v1h-1v-1h-2v1h-1v-1h-2v1h-7v1h-2v-2h-1v-1h-5v1h-2v1h-1v-1h-1v-1h-2v1h-4v1h-1v-1h-7v1h-2v-1h-4v-1h-2v1h-2v-1h-1v1h-1v-1h-2v2h-1v-2h-4v1h-1v-1h-2v1h-1v-1h-2v1h-2v-1h-5v1h-1v1h-1v-2h-1v1h-1v1h-2v-1h-3v1h-1v-1h-9v1h-2v-1h-1v-1h-2v2h-1v-2h-4v1h-4v1h-1v-1h-1v1h-1v-1h-3v1h-3v-1h-2v-1h-1v2h-1v-2h-7v1h-1v-1h-2v2h-1v-1h-1v1h-2v-1h-6v1h-1v-1h-1v2h-1v-2h-2v-1h-6v1h-1v-1h-2v1h-2v-1h-1v1h-1v-1h-1v2h-3v-1h-5v1h-3v-1h-1v1h-2v-1h-2v1h-1v-1h-2v1h-1v-1h-2v-1h-6v1h-1v-1h-2v1h-1v1h-1v-2h-1v1h-2v-1h-3v1h-1v-1h-2v1h-1v-1h-1v1h-1v1h-1v-1h-3v-1h-1v1h-2v1h-1v-1h-1v1h-2v-1h-1v1h-1v-1h-1v1h-1v-1h-1v2h-1v-1h-1v-1h-3v1h-2v-1h-4v1h-2v1h-1v-2h-1v1h-1v-1h-5v1h-1v-1h-3v1h-1v-1h-1v1h-1v-1h-2v-1h-4v1h-1v-1h-2v1h-1v-1h-1v1h-2v1h-1v-2h-1v1h-1v1h-1v-1h-1v1h-3v-1h-1v1h-2v-1h-5v-1h-3v1h-1v-1h-1v1h-1v-1h-2v2h-1v-2h-4v1h-1v1h-1v-1h-4v1h-1v-1h-3v1h-1v-1h-2v1h-3v-1h-1v1h-2v-1h-1v1h-1v-1h-2v-1h-1v1h-3v-1h-10v2h-1v-1h-1v-1h-1v1h-1v1h-1v-1h-1v1h-2v-1h-5v1h-1v-1h-3v1h-1v-1h-2v1h-1v-1h-2v1h-1v-2h-2v1h-1v-1h-2v1h-2v-1h-3v1h-1v1h-1v-2h-1v1h-1v-1h-1v2h-1v-2h-3v1h-1v-1h-1v1h-1v1h-2v-1h-1v1h-1v-1h-3v1h-1v-1h-1v1h-1v-1h-4v-1h-1v1h-1v-1h-4v1h-1v1h-1v-1h-3v-1h-1v2h-1v-2h-2v1h-2v-1h-5v1h-1v-1h-1v2h-1v-1h-1v-1h-1v1h-5v-1h-1v1h-2v-1h-4v2h-1v-2h-1v2h-1v-1h-1v-1h-5v1h-2v1h-1v1h-1v-3h-2v1h-4v-1h-1v2h-1v-2h-1v2h-1v-2h-1v2h-1v-1h-1v-1h-2v1h-1v-1h-2v2h-1v-1h-3v1h-1v-1h-5v1h-1v-1h-1v-1h-1v1h-1v-1h-5v1h-2v1h-2v-1h-1v1h-1v-1h-4v1h-1v-1h-3v1h-1v-1h-3v-1h-1v1h-1v-1h-2v1h-1v-1h-2v1h-2v-1h-2v1h-1v-1h-2v2h-3v-1h-1v-1h-2v1h-1v-1h-1v1h-4v-1h-4v1h-1v-1h-1v1h-2v1h-1v-1h-2v-1h-3v1h-1v-1h-4v1h-1v-1h-2v1h-2v-1h-3v1h-1v-1h-1v1h-2v-1h-2v1h-1v-1h-4v1h-1v1h-1v-1h-1v-1h-1v1h-1v1h-1v-2h-2v1h-2v-1h-1v1h-1v1h-1v-2h-4v1h-2v-1h-6v1h-1v-1h-2v1h-2v1h-8v-1h-1v1h-2v-1h-2v1h-1v-1h-3v1h-1v-1h-3v1h-1v-1h-2v-1h-2v1h-3v-1h-3v1h-3v-1h-2v1h-2v-1h-1v1h-1v-1h-4v1h-1v-1h-2v1h-1v1h-7v-1h-4v1h-2v-1h-2v1h-1v-1h-3v-1h-1v1h-2v-1h-1v1h-2v-1h-1v2h-1v-2h-1v1h-2v-1h-1v1h-2v-1h-2v1h-3v1h-1v-1h-5v1h-1v-1h-3v-1h-3v1h-1v-1h-3v1h-2v1h-3v-1h-6v1h-1v-1h-1v1h-1v-1h-2v-1h-1v2h-1v-2h-4v1h-1v-1h-2v2h-1v-2h-6v1h-4v1h-1v-1h-1v1h-1v-1h-1v1h-1v-1h-2v1h-2v-1h-1v1h-2v-1h-2v1h-1v-1h-1v1h-1v-1h-2v1h-1v-1h-4v1h-1v-1h-1v1h-2v-1h-1v-1h-2v1h-2v-1h-2v1h-1v-1h-3v1h-5v-1h-2v1h-1v-1h-1v2h-1v-2h-2v2h-2v-1h-1v1h-3v2h-1v-2h-2v1h-1v-1h-2v-1h-2v1h-1v-1h-3v1h-1v-1h-2v1h-1v-1h-9v1h-1v-1h-2v1h-1v-1h-2v1h-4v-1h-5v1h-1v-1h-4v-1h-3v1h-2v-1h-1v1h-1v-1h-4v1h-6v1h-1v1h-1v-2h-3v1h-1v-1h-2v1h-1v-1h-1v1h-1v-1h-3v1h-2v-1h-1v-1h-2v1h-1v-1h-3v1h-2v-1h-2v1h-1v1h-3v-1h-2v1h-1v1h-1v-2h-1v1h-4v-1h-2v-1h-1v1h-1v-1h-1v1h-1v-1h-4v1h-1v-1h-1v1h-1v1h-3v-1h-1v1h-2v-1h-1v1h-2v-1h-1v1h-1v-1h-4v-1h-4v1h-3v-1h-1v1h-1v-1h-1v2h-2v-1h-2v1h-2v-1h-1v1h-1v-1h-1v-1h-4v1h-1v1h-5v1h-7v-1h-1v1h-1v-1h-2v1h-1v-1h-1v-1h-2v1h-5v-2h-2v1h-1v-1h-5v1h-1v-1h-6v1h-1v-1h-1v2h-2v-1h-1v1h-2v-2h-1v1h-1v-1h-1v2h-1v-1h-1v-1h-1v1h-1v-1h-1v2h-1v-2h-1v1h-1v1h-1v-2h-1v1h-1v-1h-1v2h-1v-2h-4v2h-2v-1h-2v1h-2v-1h-1v1h-1v-1h-2v1h-2v-1h-2v1h-2v-1h-3v1h-1z"/>
<path d="M277 547h1v-1h2v1h1v-1h2v1h1v-1h2v1h8v-1h1v1h4v-1h1v1h5v-1h1v1h3v-1h1v1h3v-1h1v1h1v-2h1v1h1v-1h3v1h3v-1h3v1h5v-1h1v1h1v-1h1v2h1v-1h2v1h8v-1h1v1h1v-2h3v2h1v-1h6v1h1v-1h2v1h2v-1h1v1h4v-1h1v1h9v-1h2v1h2v-1h2v-1h1v2h4v-1h3v-1h1v1h4v-1h2v1h1v-1h2v1h4v1h2v-1h2v-1h1v1h1v1h1v-2h1v2h3v-1h5v-1h2v-1h1v1h2v-1h1v1h1v2h1v-1h2v-1h1v1h2v1h1v-1h2v1h3v-1h1v1h3v-1h1v1h1v-1h2v1h1v-1h1v-1h2v1h3v1h1v-1h1v1h2v-1h2v1h3v-1h2v-1h1v1h5v-1h1v1h1v-1h1v1h3v1h4v-1h1v1h3v-1h1v1h3v-1h1v1h9v-2h2v1h7v-1h2v1h9v-1h1v1h4v-1h3v1h2v-1h1v1h1v-1h1v1h4v-1h1v1h2v-1h1v1h1v-1h1v1h2v-1h1v-1h1v1h1v1h4v-1h1v1h2v-1h1v1h5v1h4v-1h1v1h2v-2h1v2h1v-1h1v1h1v-1h7v-1h2v1h2v1h2v-2h1v2h1v-1h2v1h1v-1h3v1h1v-1h3v-1h1v1h2v-2h1v2h7v1h2v-1h1v-1h1v1h1v-1h2v1h1v-3h1v2h6v1h2v-1h2v1h2v-1h1v1h1v-1h2v1h1v-1h8v1h2v1h3v-1h2v1h1v-1h5v1h2v-1h4v-1h4v1h1v1h3v-1h2v1h1v-1h1v1h1v-1h1v1h6v-1h1v1h1v-1h2v1h1v-1h1v1h1v-1h1v1h7v-2h1v1h1v1h3v-1h1v1h5v-1h1v1h1v-2h1v1h2v1h1v-1h1v1h4v-1h2v-1h1v1h2v-1h1v1h1v-1h2v1h3v-1h1v1h4v-1h1v1h1v-1h1v1h2v-1h3v2h2v-1h1v1h1v-2h1v2h4v-2h1v2h2v-1h3v1h3v-1h3v1h4v-1h1v1h4v-1h1v1h2v-1h1v1h1v-1h1v-1h1v1h1v1h1v-1h2v1h1v-1h1v1h1v-1h1v1h1v-1h1v1h2v-2h4v2h1v-1h1v-1h1v2h2v-1h6v1h1v-1h1v1h1v-1h1v1h1v-1h3v1h2v-1h3v-1h1v1h1v1h1v-1h1v1h2v-1h3v-1h2v1h1v1h1v-2h1v1h1v1h1v-1h3v1h3v-1h1v1h6v-1h1v-1h1v1h1v1h1v-1h1v1h3v-1h1v-1h3v1h5v-1h1v1h5v1h1v-1h2v1h3v-1h1v1h5v-1h3v1h3v-2h1v2h3v-1h1v1h1v-1h1v1h10v-1h1v1h3v-1h2v1h2v-2h1v1h1v1h3v-2h1v1h2v1h3v-1h1v1h1v-1h1v1h1v-2h1v2h7v-2h1v2h3v-1h1v1h5v-1h3v1h4v-1h1v1h5v-1h3v1h1v-1h2v1h1v-1h1v1h1v-1h1v1h1v-2h1v1h3v1h6v-1h2v1h1v-1h2v1h3v-1h2v1h1v-1h1v1h2v-1h1v1h2v-1h1v1h2v-1h1v-1h1v2h4v-1h1v1h1v-1h3v-1h2v1h2v-1h2v1h4v-1h1v1h1v-1h2v2h7v-1h1v1h2v-2h1v1h3v-1h1v1h5v-1h1v1h2v-1h1v1h3v-1h2v1h2v-2h1v2h2v-1h1v1h3v-1h4v1h1v-1h2v1h1v1h4v-1h1v1h1v-1h1v1h5v-1h1v1h2v-1h1v-1h2v2h1v-1h2v1h4v-1h3v1h1v-1h1v1h1v-1h1v1h3v-1h3v1h2v-1h1v1h2v-1h1v1h1v-1h1v1h1v-1h1v1h1v-1h2v-1h1v1h1v-1h1v1h1v-1h1v1h3v-1h2v1h2v-1h1v1h3v-1h1v1h3v-1h2v1h1v1h5v-1h1v1h1v-1h1v1h7v-2h2v1h1v-1h1v1h1v-1h2v1h3v-1h1v1h2v-1h1v1h1v-2h1v2h1v-1h1v1h1v-1h1v1h1v-1h1v1h1v1h1v-1h1v-1h8v1h1v-2h1v2h1v-1h4v-2h1v3h1v-1h5v-2h1v1h1v1h2v1h1v1h2v-1h1v1h1v-1h1v1h5v-1h1v1h1v-1h1v1h1v-1h1v1h2v-1h1v1h5v-2h1v2h1v-1h1v1h3v-1h1v1h1v-1h1v1h3v-2h1v1h2v-1h1v1h1v-1h2v1h1v-1h1v1h2v-1h1v1h1v-1h1v1h1v-1h5v1h3v-1h1v1h1v-1h1v1h1v-1h2v1h2v-1h1v1h2v-1h1v1h4v1h1v-1h1v-1h1v2h1v-1h1v1h1v-1h2v1h2v-1h2v1h2v-1h1v1h2v-1h1v1h1v-1h1v1h3v-1h1v1h3v-1h3v-1h1v-1h1v1h1v1h1v-1h4v-1h1v1h1v1h2v1h2v-1h2v1h3v-1h5v-1h1v1h2v-1h1v1h1v-1h1v1h4v-1h1v1h2v1h1v-1h1v1h1v-1h1v1h2v-1h1v1h6v-1h2v1h3v-2h1v1h1v-1h2v1h3v-1h1v1h2v-1h1v1h4v-1h1v2h6v-1h1v1h1v-1h1v1h1v-1h1v1h1V551h-1v2h-2v-2h-2v1h-2v-1h-1v1h-1v-1h-2v1h-1v-1h-1v1h-1v-1h-2v1h-2v-1h-2v1h-1v-1h-1v1h-3v-1h-4v2h-1v-1h-1v-1h-2v1h-1v-1h-3v1h-1v-1h-1v1h-1v-1h-1v1h-1v-1h-1v1h-2v-1h-6v1h-1v-1h-5v2h-1v-2h-5v1h-1v1h-1v-1h-7v1h-2v-1h-1v1h-9v-1h-2v1h-1v-1h-2v1h-1v-1h-1v1h-1v-1h-1v1h-2v-1h-1v1h-1v-2h-1v1h-2v-1h-1v1h-3v-1h-2v1h-2v-1h-4v1h-2v-1h-1v1h-1v-1h-1v1h-2v-1h-3v2h-1v-2h-1v1h-1v-1h-1v2h-1v-2h-7v1h-1v-1h-1v1h-1v-1h-1v1h-1v-1h-1v1h-1v-1h-6v1h-1v1h-2v-2h-1v1h-2v-1h-1v1h-1v1h-1v-1h-1v1h-2v1h-1v-2h-1v1h-1v-1h-1v1h-1v-1h-6v1h-1v-1h-1v1h-1v-1h-2v1h-4v-1h-2v-1h-6v1h-2v1h-2v1h-1v-1h-1v-1h-1v1h-2v-1h-1v1h-1v1h-1v-1h-1v1h-1v-1h-1v-1h-1v2h-1v-1h-9v-1h-5v-1h-1v2h-1v-2h-4v1h-1v-1h-1v1h-1v-1h-1v1h-1v1h-1v-1h-3v1h-1v-1h-2v1h-2v-1h-2v1h-1v-2h-1v1h-2v-1h-3v2h-1v-1h-1v-1h-2v1h-2v-1h-1v1h-1v-1h-2v1h-1v-1h-8v1h-2v1h-1v-1h-4v1h-2v-1h-1v1h-5v-1h-3v1h-3v-1h-8v1h-1v-1h-5v1h-1v-1h-1v1h-3v-1h-1v1h-1v-1h-2v1h-3v-1h-4v-1h-2v1h-1v-1h-1v1h-4v-1h-1v1h-1v-1h-1v1h-1v-1h-2v1h-1v-1h-6v2h-1v-1h-7v1h-3v-1h-3v1h-1v-2h-3v1h-1v-1h-1v1h-1v1h-1v-1h-1v1h-1v-1h-2v1h-1v-1h-1v1h-1v-1h-3v2h-1v-2h-1v1h-1v-1h-1v1h-1v-1h-1v-1h-1v1h-4v-1h-6v2h-1v-2h-4v1h-2v-1h-1v1h-2v-1h-3v1h-1v-1h-1v1h-1v1h-1v-2h-2v1h-1v-1h-2v1h-3v1h-2v-1h-1v1h-1v-1h-2v1h-2v-1h-1v1h-2v-1h-1v-1h-1v1h-2v-1h-1v1h-3v1h-1v-1h-1v2h-1v-1h-1v-1h-1v1h-1v-1h-1v1h-1v-1h-3v1h-1v-1h-2v2h-1v-2h-5v1h-1v-1h-1v1h-1v-1h-4v1h-1v-1h-3v-1h-2v1h-4v1h-1v-1h-1v1h-1v-1h-1v1h-1v-1h-1v1h-1v-1h-1v1h-2v-1h-2v-1h-4v1h-3v-1h-1v1h-3v-1h-1v1h-1v-1h-1v1h-1v-1h-4v1h-2v-1h-3v1h-1v-1h-1v1h-1v-1h-3v1h-2v-1h-1v1h-2v1h-1v-2h-2v1h-2v-1h-1v1h-2v-1h-2v1h-1v-1h-2v1h-6v-1h-4v1h-2v-1h-1v1h-2v1h-2v-1h-3v1h-2v-1h-3v1h-2v-1h-1v1h-1v-1h-5v1h-3v-1h-1v1h-1v-1h-5v1h-1v-2h-3v1h-2v-1h-3v1h-1v-1h-3v1h-1v-1h-1v1h-1v1h-3v-1h-1v2h-1v-1h-1v-1h-2v1h-4v-1h-1v1h-2v-1h-1v-1h-1v1h-1v-1h-3v1h-1v-1h-2v1h-1v-1h-1v1h-1v-1h-1v1h-1v-1h-5v1h-1v-1h-1v2h-1v-1h-1v1h-1v-1h-3v1h-2v-1h-2v1h-1v-1h-1v1h-1v-1h-2v1h-1v-1h-1v1h-1v-1h-4v1h-1v-1h-1v1h-1v-1h-3v1h-2v-1h-1v1h-1v-1h-2v1h-1v-1h-5v-1h-2v1h-1v-1h-4v2h-1v-2h-2v1h-1v-1h-2v1h-1v-1h-3v2h-1v-2h-3v2h-1v-2h-2v1h-3v1h-1v-1h-1v-1h-5v2h-2v-1h-2v1h-2v-1h-4v1h-1v-1h-5v1h-4v-1h-2v1h-1v-1h-1v1h-1v-1h-4v1h-1v-1h-2v1h-5v-1h-1v1h-1v-1h-1v1h-3v-1h-2v1h-1v-1h-1v1h-1v-1h-3v1h-1v-2h-2v1h-1v1h-1v-1h-1v1h-1v-1h-1v1h-1v-1h-1v1h-1v-1h-3v1h-3v-1h-1v1h-1v-1h-2v1h-1v-1h-1v1h-2v-1h-2v1h-1v-1h-3v1h-4v-1h-1v1h-3v-1h-2v1h-3v-2h-2v1h-1v-1h-3v1h-1v-1h-1v1h-1v-1h-1v1h-2v-1h-1v1h-1v1h-1v-1h-2v1h-2v-1h-3v1h-1v-1h-3v1h-1v-1h-2v1h-2v-1h-1v1h-1v-1h-2v1h-6v-1h-1v1h-1v-1h-3v-1h-1v1h-2v-1h-5v1h-1v-1h-1v1h-1v1h-1v-2h-1v1h-2v-1h-1v1h-1v-1h-2v1h-2v-1h-4v1h-5v1h-1v-1h-1v1h-2v-1h-5v1h-1v-1h-1v-1h-1v1h-1v-1h-2v1h-1v1h-1v-1h-4v-1h-1v1h-4v1h-2v-1h-3v1h-1v-2h-2v1h-1v-1h-3v1h-1v-1h-3v1h-4v1h-1v-1h-3v1h-1v-1h-1v1h-1v-1h-1v1h-2v-2h-2v1h-1v-1h-1v1h-1v-1h-1v1h-3v-1h-1v1h-2v-1h-2v1h-1v-1h-6v1h-2v-1h-2v1h-1v1h-2v-1h-1v1h-1v-1h-3v1h-1v-1h-1v1h-1v1h-1v-2h-1v1h-1v-1h-2v1h-1v-1h-2v2h-1v-2h-2v1h-9v-1h-1v1h-2v-1h-2v1h-1v-1h-1v-1h-1v1h-1v-1h-9v2h-1v-1h-1v1h-3v-1h-5v1h-2v-1h-1v1h-2v-1h-4v1h-1v-2h-1v1h-2v-1h-1v1h-1v-1h-1v1h-3v-1h-3v1h-2v-1h-2v1h-3v1h-2v-1h-6v-1h-1v1h-1v-1h-4v1h-1v-1h-1v1h-1v-1h-2v1h-2v1h-5v-1h-1v1h-1v-1h-1v2h-1v-2h-1v1h-1v-1h-2v2h-1v-1h-3v-1h-2v1h-1v1h-1v-1h-1v-2h-2v1h-3v-1h-1v1h-2v-1h-2v1h-3v-1h-4v1h-2v-1h-5v1h-1v-1h-1v1h-2v1h-2v-1h-1v1h-1v-1h-1v1h-2v-1h-1v-1h-1v1h-1v-1h-3v1h-2z"/>
<path d="M277 576h3v1h2v-1h1v1h2v-1h1v1h2v-1h3v1h2v-1h1v1h2v-2h1v1h1v1h4v-1h1v-1h1v1h1v1h3v-1h2v1h1v-2h3v1h1v-1h2v1h1v-1h2v1h1v-1h5v1h1v-1h1v1h1v1h1v-1h8v-1h1v1h1v-1h1v1h2v-1h1v1h2v-2h1v1h2v1h1v-1h2v2h3v-1h1v1h1v-1h1v1h2v-1h1v1h1v-1h2v1h1v-1h1v1h3v-2h1v1h4v1h3v-1h1v1h1v-1h1v1h3v-1h2v1h4v-1h1v1h5v-1h1v1h3v-2h1v1h1v-1h1v1h2v-1h1v1h2v-1h2v1h2v-1h1v1h2v-1h1v1h2v-1h3v1h2v1h1v-1h2v-1h3v1h5v-1h1v1h1v-1h3v1h1v-1h2v1h4v-2h1v1h2v1h2v-1h1v1h1v-2h1v1h8v1h1v1h1v-2h1v2h1v-2h1v2h3v-1h1v1h3v-1h4v1h4v-1h1v1h3v-1h2v1h1v-1h3v-1h2v1h2v-1h1v1h3v-1h1v1h5v-1h1v1h3v-1h1v1h1v-1h3v1h3v-1h1v1h1v-1h1v1h1v1h5v-1h1v1h3v-2h1v1h1v1h1v-1h1v1h1v-1h2v-1h1v1h8v-1h2v1h3v-1h1v1h1v-1h1v1h2v1h3v-1h1v1h2v-1h1v1h6v-1h1v1h1v-2h2v1h1v-1h4v1h1v-1h1v1h1v-1h4v1h1v-1h3v1h1v-1h2v1h1v-1h3v-1h1v2h1v-1h3v1h1v-1h2v1h2v-1h1v1h3v-1h2v1h5v-1h3v1h2v-1h2v1h2v-1h1v1h4v-1h5v1h2v-1h1v1h1v-1h1v1h1v-1h1v1h3v-1h2v1h5v1h2v-1h4v-1h1v2h4v-2h1v2h1v-1h4v-1h1v2h2v-1h3v1h2v-1h2v1h1v-1h3v1h2v-1h2v1h2v-1h1v1h2v-1h1v-1h1v2h1v-2h1v1h3v1h3v-1h1v-1h1v1h1v-1h1v1h1v-1h1v-1h1v1h2v-1h2v1h2v-1h1v1h5v1h2v-1h1v1h1v-1h1v1h3v-1h4v1h2v-1h1v1h3v-1h1v1h3v-1h2v1h2v-1h3v1h1v-1h5v1h1v-1h1v1h3v-1h1v1h2v-1h1v1h1v-1h1v1h3v-1h2v1h3v-1h2v1h11v-1h1v1h3v-1h4v1h2v-1h2v1h2v-1h1v1h1v-1h1v1h9v-1h1v1h3v-1h4v1h3v-1h3v1h2v-2h1v1h1v1h2v-1h1v1h2v-2h1v1h6v2h1v-1h1v1h4v-1h2v-1h1v1h1v-1h1v2h4v-1h1v1h1v-2h1v2h1v-1h1v1h2v-2h1v2h1v-1h2v-1h1v2h1v-1h1v1h1v-1h1v1h1v-2h1v2h3v-1h4v-1h1v1h1v-1h2v1h1v-1h1v1h1v-1h5v1h1v-1h1v1h3v-1h1v1h4v1h7v-1h1v1h1v-1h2v1h1v-2h2v1h6v-1h3v1h1v-1h1v1h1v-1h1v1h2v-1h1v1h2v-1h1v1h6v1h2v-1h1v1h2v-1h5v1h1v-1h2v-1h2v1h1v-1h3v1h6v-2h1v1h1v1h4v-1h1v1h2v1h1v-1h2v1h1v-1h1v1h2v-2h1v1h1v1h3v-1h1v-1h1v1h2v-1h2v1h2v-1h1v1h1v-1h1v1h1v-1h1v-1h1v1h1v1h5v-1h1v1h2v1h3v-1h1v1h2v-1h1v1h2v-1h2v-2h1v2h1v-1h5v1h3v-1h1v1h1v-1h1v1h1v-2h1v1h1v1h1v-2h1v1h1v-1h1v1h5v-1h1v2h1v-1h2v1h2v-1h2v1h1v-1h2v1h1v-1h5v1h1v-1h3v1h1v-1h2v1h3v-2h1v1h1v1h2v-2h1v1h1v1h1v-1h8v1h1v-1h1v1h1v-2h1v2h2v-1h2v1h1v-1h1v1h2v-1h7v1h1v-1h1v-1h2v2h2v-1h3v1h1v-1h1v1h2v-1h1v1h5v-1h2v1h3v-1h2v-1h1v1h3v1h1v-1h1v-1h1v2h2v-1h1v-1h2v1h2v1h2v-1h2v1h1v-1h3v1h2v-1h2v1h1v-1h1v1h2v-1h5v1h2v-1h5v1h1v-1h3v1h2v-1h2v1h1v-1h1v1h1v-1h1v1h3v-1h1v1h1v-1h2v1h2v1h1v-1h1v1h1v-2h1v2h1v-1h3v1h1v-1h1v-1h1v2h4v-1h1v1h1v-2h1v2h1v-1h1v1h5v-1h1v-1h1v2h1v-1h2v1h1v-1h1v-1h2v1h2v-1h2v1h2v-1h2v1h1v-1h1v-1h1v1h1v1h1v-1h2v1h4v-1h1v1h2v-1h2v1h1v-1h2v1h3v-1h3v1h3v-1h1v1h2v-1h1v1h3v-1h2v1h1v-1h1v1h1v-1h5v1h1v-1h2v-1h1v1h2v1h1v1h1v-1h3v-1h1v1h2v1h1v-2h1v1h1v-1h1v1h2v-1h1v1h3v-1h1v1h1v-1h2v1h3v1h1v-2h1v2h3v-1h1v1h5v-1h1v1h1v-1h1v1h5v-2h1v2h1v-1h3v1h1v-1h3v-1h1v2h1v-1h3v1h2v-1h1v1h1v-1h2v1h1v-1h1v1h1v-2h1v1h2v-1h2v1h1v-1h1v-1h1v2h3v-1h2v1h2v-1h2v1h2v-1h1v1h1v-1h2v1h2v-1h1v1h4v-1h1v2h1v-1h1v1h6v-2h1V582h-1v1h-1v-1h-1v-1h-3v1h-1v-1h-3v1h-2v-1h-1v1h-1v1h-1v-1h-3v1h-3v-1h-1v1h-1v-1h-5v1h-1v-1h-3v1h-2v-1h-1v1h-1v-1h-1v1h-1v-2h-1v1h-1v-1h-2v2h-1v-2h-4v2h-1v-2h-6v2h-3v-1h-1v1h-1v-1h-2v1h-1v-1h-1v1h-3v-1h-4v1h-1v-1h-3v1h-2v-1h-2v1h-1v-1h-1v1h-1v1h-1v-2h-4v1h-2v-1h-2v1h-2v-1h-5v1h-1v-1h-1v-1h-3v2h-1v-1h-2v1h-1v-2h-1v1h-7v1h-2v-1h-5v1h-1v-1h-5v1h-1v-1h-1v1h-1v-1h-1v1h-1v-2h-1v1h-3v-1h-1v1h-1v-1h-1v1h-1v-1h-3v1h-1v-1h-2v1h-1v1h-4v-1h-1v1h-1v-1h-1v1h-2v-1h-1v1h-2v-1h-1v1h-1v-1h-1v-1h-2v1h-1v-1h-2v1h-1v-1h-1v1h-4v-1h-3v1h-1v-1h-4v1h-3v1h-1v-1h-1v1h-2v-1h-3v1h-2v-1h-2v1h-3v-1h-2v1h-2v-1h-2v1h-3v-1h-1v1h-13v-1h-2v1h-1v-1h-1v1h-1v-1h-2v2h-1v-1h-2v-1h-2v1h-3v-1h-1v1h-1v-1h-2v1h-4v-1h-2v1h-2v-1h-3v1h-2v-1h-1v1h-2v-1h-3v1h-1v-1h-2v1h-5v-1h-1v1h-1v-1h-1v1h-2v-1h-2v1h-2v1h-1v-1h-2v-1h-4v1h-2v-1h-1v1h-6v-1h-1v2h-1v-1h-1v-1h-3v1h-1v-1h-2v1h-3v-1h-2v1h-3v-1h-1v1h-2v1h-1v-1h-3v-1h-1v1h-1v1h-1v-2h-1v1h-1v-1h-2v1h-1v-1h-1v1h-1v-1h-3v1h-1v-1h-1v1h-11v1h-1v-1h-4v-1h-1v1h-1v-1h-3v1h-1v-1h-1v1h-1v1h-1v-2h-1v1h-4v-1h-1v1h-2v-1h-2v1h-2v-1h-1v1h-5v-1h-1v1h-4v-1h-1v1h-3v-1h-4v1h-3v-1h-1v1h-2v-1h-1v1h-2v-1h-1v1h-1v-1h-2v1h-1v-1h-1v1h-2v-1h-2v1h-2v-1h-2v-1h-2v1h-1v-1h-5v2h-1v-2h-4v1h-3v1h-3v-1h-1v-1h-1v1h-4v-1h-2v1h-1v1h-1v-2h-10v1h-1v-1h-1v1h-1v-1h-6v1h-1v-1h-3v1h-1v-1h-1v1h-1v-1h-1v1h-2v-1h-2v2h-1v-2h-4v1h-1v-1h-1v2h-1v-2h-1v1h-1v-1h-3v1h-1v1h-2v-1h-1v1h-1v-1h-1v1h-1v-1h-2v1h-1v-1h-3v1h-1v-2h-1v1h-1v-1h-2v2h-1v-2h-2v1h-1v-1h-3v1h-1v-1h-1v1h-3v1h-1v-1h-6v1h-1v-1h-4v2h-1v-2h-1v1h-1v-2h-5v1h-3v-1h-1v1h-1v-1h-1v1h-1v-1h-2v1h-2v-1h-2v1h-1v-1h-6v2h-1v-2h-1v2h-1v-1h-1v1h-3v1h-1v-1h-6v-1h-2v1h-1v-1h-2v1h-2v-2h-1v2h-2v-2h-6v1h-1v-1h-1v1h-2v-1h-1v1h-1v-1h-1v1h-2v-1h-1v2h-1v-2h-1v2h-1v-2h-7v2h-1v-2h-1v1h-2v-1h-1v1h-1v-1h-1v1h-5v-1h-1v2h-1v-1h-1v-1h-1v1h-3v-1h-1v1h-1v-1h-1v1h-1v1h-2v-1h-4v1h-5v-1h-4v1h-2v-1h-1v1h-1v-1h-1v1h-1v-1h-2v1h-3v-1h-1v1h-2v-1h-1v1h-1v-1h-1v1h-1v-1h-3v1h-1v-1h-2v1h-2v-1h-1v1h-2v-1h-2v1h-1v-1h-3v-1h-2v2h-3v1h-1v-1h-3v1h-1v-1h-2v1h-1v-1h-2v1h-1v-1h-2v-1h-1v1h-1v-1h-1v1h-1v-1h-1v-1h-2v1h-2v-1h-3v1h-1v-1h-4v1h-3v-1h-1v2h-1v-2h-3v1h-1v-1h-10v1h-1v-1h-1v1h-1v-1h-3v1h-1v-1h-7v1h-4v1h-1v-1h-2v1h-1v-1h-3v1h-1v-1h-1v1h-1v-1h-1v-1h-2v1h-1v1h-1v-2h-5v1h-1v-1h-2v2h-1v-2h-1v1h-1v1h-1v-1h-2v1h-1v-1h-5v1h-1v-1h-2v1h-2v-1h-1v1h-1v-1h-1v1h-1v1h-1v-2h-1v1h-1v-1h-1v-1h-6v1h-2v1h-1v-1h-7v1h-4v1h-1v-1h-1v-1h-1v1h-3v-1h-4v1h-2v-1h-3v1h-1v-1h-4v1h-1v-1h-4v1h-3v-1h-1v1h-1v-1h-2v1h-2v-1h-2v1h-4v-1h-1v1h-1v-1h-3v1h-1v-1h-2v1h-3v-1h-4v1h-1v-1h-2v1h-4v-1h-1v1h-2v-1h-3v1h-1v-1h-1v1h-2v-1h-1v1h-5v-1h-1v1h-4v-1h-3v-1h-2v1h-3v-1h-2v1h-1v-1h-4v1h-1v-1h-1v1h-1v-1h-2v1h-1v-1h-2v1h-1v-1h-2v2h-1v-1h-4v1h-2v1h-1v-2h-4v1h-13v-1h-2v1h-3v-1h-5v1h-1v-1h-1v-1h-2v1h-3v-1h-1v1h-2v-1h-5v1h-1v1h-1v-1h-3v1h-1v-1h-4v-1h-1v1h-1v-1h-1v2h-1v-2h-1v1h-2v-1h-1v1h-2v-1h-1v1h-2v-1h-2v2h-2v-1h-5v1h-3v-1h-3v1h-3v-1h-1v1h-1v-1h-4v1h-1v-1h-1v-1h-3v1h-1v-1h-1v1h-1v-1h-2v1h-1v1h-1v-1h-5v1h-1v-1h-6v-1h-2v1h-1v-1h-3v1h-1v-1h-1v1h-2v-1h-1v2h-1v-2h-1v2h-1v-1h-2v-1h-1v2h-1v-1h-1v-1h-7v2h-1v-1h-1v1h-1v-1h-3v2h-1v-1h-1v-1h-1v2h-1v-1h-5v-1h-1v1h-1v-1h-1v-1h-2v1h-2v-1h-2v2h-1v-1h-1v-1h-1v1h-2v-1h-1v1h-1v-1h-1v1h-1v1h-1v-1h-1v1h-2v-1h-2v1h-2v-1h-1v1h-2v-1h-2v1h-1v-1h-3v1h-2z"/>
<path d="M277 605h1v1h1v-1h1v1h1v-1h1v1h1v-1h1v1h2v-1h1v1h1v-1h1v1h5v-1h1v1h3v-1h1v1h1v-1h2v1h6v-1h2v1h1v-1h1v1h1v-1h1v1h4v-1h1v-1h1v2h1v-1h1v1h1v-1h1v1h3v-1h2v1h5v-1h1v1h9v-1h2v-2h1v1h1v1h2v-1h1v1h2v-1h1v1h2v-1h1v1h1v-1h1v1h2v-1h3v1h1v-1h1v1h1v-1h2v2h1v-1h1v1h3v-1h1v1h4v-1h1v1h5v1h2v-1h2v1h1v-1h1v1h2v-2h1v2h2v-1h1v1h2v-1h1v-1h1v2h1v-1h1v1h1v-1h1v1h5v-1h1v1h1v-1h1v1h1v-1h2v1h1v-1h4v-1h1v1h2v-1h1v2h1v-1h1v1h2v-1h1v1h4v-1h4v1h1v-1h2v1h3v-1h1v1h1v-1h1v1h3v-1h3v1h1v-1h1v1h1v-1h1v1h5v-1h2v1h1v-1h1v1h1v-2h1v2h1v-1h1v1h1v-1h1v1h1v-2h2v1h1v1h4v-1h5v1h2v-1h3v-1h6v-2h1v2h3v2h1v-1h1v1h1v-1h2v1h2v-1h1v1h3v-2h1v1h2v-1h2v1h4v-1h1v1h2v-1h1v1h1v1h3v-1h1v1h1v-1h3v1h1v-1h1v-1h1v1h2v-1h2v1h2v-1h2v1h1v-1h2v1h1v-1h1v1h5v-1h1v1h2v-2h1v1h1v2h2v-1h1v1h3v-1h2v1h2v-1h2v-1h1v2h1v-1h2v-1h1v1h3v-1h3v1h1v-1h1v2h5v-1h1v1h1v-1h2v1h7v-1h1v1h4v-1h1v-1h1v1h1v-1h1v1h3v-1h2v1h2v-1h1v-1h1v1h1v-1h2v1h2v-1h2v1h1v-1h2v1h1v-1h2v-1h1v1h2v1h1v-1h2v1h1v-1h2v-1h1v1h1v-2h1v2h2v1h3v-1h2v1h1v-1h2v1h2v-1h5v-2h1v3h1v-1h3v1h1v-1h3v1h2v-1h3v1h2v-1h1v1h4v-1h1v1h1v-1h3v1h1v-3h1v3h1v-1h2v1h2v-1h3v1h2v-1h3v1h4v-1h8v1h3v-1h3v1h3v-1h1v1h2v-1h2v1h1v-1h1v1h6v-2h1v2h1v-2h1v1h1v1h1v-7h2v3h1v-3h2v1h2v2h1v1h1v-2h1v2h2v-1h1v1h1v1h1v1h1v-1h1v1h1v1h1v-2h1v4h1v-1h2v-1h3v1h3v-1h1v1h2v-1h5v1h2v-1h2v1h1v-1h2v1h4v-1h4v1h2v-1h1v-1h2v-2h1v1h2v1h2v-1h1v1h1v-1h1v1h1v-1h1v-1h1v2h1v1h1v-1h3v-2h1v2h1v1h1v-2h1v1h2v1h1v1h1v-1h2v-1h1v1h3v1h1v-1h5v-1h2v1h1v-1h3v1h1v-1h1v-1h2v1h1v1h1v-1h2v-1h3v1h1v1h1v1h2v-1h3v1h1v-1h1v-1h1v2h4v-1h4v1h5v-1h1v1h1v1h3v-1h1v1h1v-1h1v1h1v-2h1v1h1v-1h1v1h4v-1h2v1h1v-1h1v1h1v1h1v-1h2v-1h1v2h3v-1h1v1h1v-1h1v1h3v-1h2v1h2v-1h3v-1h1v1h4v1h2v-2h1v1h1v1h1v-1h1v1h1v-1h2v1h5v-1h1v1h2v-1h1v1h4v-2h1v2h2v-1h2v1h1v-1h1v1h1v-1h1v1h4v-1h1v-1h1v1h5v-1h1v2h3v-1h6v-1h3v1h1v-1h3v1h1v-1h2v1h2v1h2v-1h1v1h4v-2h1v1h1v-1h4v1h5v-1h2v-1h1v2h1v1h1v-1h1v1h3v-1h1v1h3v-1h1v1h4v-2h1v-1h1v-2h1v2h1v1h1v-1h3v1h1v-1h2v-1h1v2h1v-1h1v2h1v-1h2v1h5v1h1v-1h2v1h1v-1h2v1h1v-1h2v1h1v-1h1v-1h1v1h3v-1h1v1h2v-1h2v1h1v-1h1v1h1v1h3v-1h1v1h1v-1h1v1h1v-1h1v1h2v-1h1v1h2v-1h2v1h1v-1h1v1h2v-1h1v-1h1v1h1v1h1v-1h1v-1h1v1h1v1h1v-1h1v-1h1v1h2v-1h1v-1h1v1h6v1h2v-1h1v1h2v-1h1v1h1v-1h1v1h1v1h5v-2h1v1h1v1h3v-2h1v1h1v-1h2v1h2v-1h3v1h1v-1h1v1h2v-1h5v1h4v-1h3v1h1v-1h2v1h4v-1h2v1h1v-1h1v1h3v1h8v-1h1v-1h1v1h1v1h2v-2h1v2h1v-1h3v1h1v-2h1v1h1v1h2v-2h4v-1h1v2h1v1h2v-1h1v1h1v-1h1v1h1v-2h1v2h1v-1h1v-1h1v1h2v-1h1v1h2v-1h2v2h4v-1h1v1h1v-1h3v1h1v-1h7v-1h2v1h3v-1h1v1h1v-1h2v1h1v-1h1v1h6v1h2v-1h1v1h3v-1h2v1h6v-1h7v-1h1v1h1v-1h2v2h3v-2h1v2h3v-1h1v1h3v-2h1v1h2v1h2v-2h1v2h3v-1h1v1h3v-1h3v-1h1v1h2v-1h1v1h2v-1h1v1h2v-1h1v1h4v-1h3v1h2v-1h1v1h2v-1h1v1h3v-1h1v1h1v-1h1v1h1v-1h1v1h1v-1h1v1h3v1h2v-1h2v1h1v-1h2v1h2v-1h1v1h1v-2h2v1h2v-1h1v1h1v-1h2v1h1v-2h1v2h3v1h2v-1h1v1h3v-1h1v1h1v-1h2v1h4v-2h1v1h1v-1h1v1h1v-1h2v1h2v-1h1v1h3v-1h2v1h3v-1h2v2h1v-1h2v1h3v-1h1v1h2v-1h1v-1h1v1h2v1h2V611h-4v1h-1v-1h-4v1h-1v-1h-1v1h-1v-1h-2v2h-1v-2h-1v2h-1v-2h-1v1h-3v-1h-1v1h-1v1h-1v-1h-1v1h-1v-1h-3v1h-2v-1h-2v1h-2v-1h-2v-1h-3v1h-1v-1h-2v2h-1v-1h-1v-1h-5v1h-1v-1h-3v1h-1v-1h-4v2h-1v-1h-2v1h-1v-1h-3v1h-5v-1h-1v1h-7v-1h-2v1h-2v-1h-1v1h-1v-1h-7v1h-1v-1h-4v1h-1v-1h-4v1h-1v-1h-9v-1h-1v1h-1v-1h-4v1h-2v1h-1v-1h-1v1h-1v-1h-3v2h-1v-2h-3v1h-1v-1h-5v1h-1v-1h-2v1h-1v-1h-4v1h-3v-1h-6v1h-3v-1h-3v-1h-3v2h-1v-1h-2v-1h-1v1h-1v1h-1v-2h-3v1h-1v-1h-1v2h-2v-1h-1v1h-1v-1h-1v1h-1v-1h-1v1h-1v-1h-4v1h-1v-1h-1v1h-1v-1h-3v-1h-2v1h-1v-1h-4v1h-2v-1h-1v1h-2v-1h-1v1h-1v-1h-2v1h-2v1h-1v-2h-1v1h-1v2h-1v-1h-1v1h-1v-1h-2v-2h-1v2h-1v-2h-3v1h-1v-1h-1v1h-1v-1h-3v1h-1v-1h-1v1h-2v1h-1v-1h-1v1h-1v-1h-1v1h-1v-1h-4v-1h-1v1h-4v-1h-3v1h-2v-1h-1v1h-2v-1h-4v1h-2v-1h-3v1h-1v-1h-1v1h-1v-1h-2v1h-1v-1h-3v2h-1v-2h-1v1h-1v-1h-1v2h-1v-2h-4v1h-2v1h-1v-1h-1v1h-1v-1h-1v1h-1v1h-1v-2h-1v1h-1v-1h-4v1h-5v-1h-5v1h-1v-1h-3v2h-1v-2h-3v1h-1v-1h-1v2h-1v-1h-2v-1h-2v-1h-2v1h-1v-1h-3v1h-1v1h-1v-2h-2v1h-1v-1h-6v1h-1v-1h-1v1h-1v-1h-1v1h-1v-1h-2v1h-2v-1h-1v1h-1v-1h-5v1h-3v-1h-1v1h-1v-1h-2v1h-2v-1h-1v1h-2v1h-1v-2h-1v1h-1v1h-1v2h-1v-1h-1v1h-1v-1h-3v1h-1v-1h-3v1h-1v-1h-1v-1h-1v-1h-1v1h-1v-1h-1v1h-1v-1h-5v1h-1v-1h-1v1h-1v-1h-3v-1h-2v1h-1v-1h-4v1h-1v-1h-4v1h-1v-1h-1v2h-1v-1h-1v-1h-2v1h-1v-1h-2v2h-1v-2h-1v1h-1v-1h-1v1h-3v-1h-1v1h-2v-1h-1v1h-1v-1h-1v1h-1v-1h-1v1h-1v-1h-1v1h-3v-1h-1v1h-1v-1h-3v1h-6v1h-2v-1h-2v1h-1v-1h-2v1h-1v-1h-2v1h-3v-1h-2v1h-1v-1h-2v-1h-1v2h-1v-2h-3v1h-1v-1h-3v1h-2v-1h-2v1h-2v-1h-1v2h-1v-1h-3v1h-1v1h-1v-2h-1v1h-1v-1h-1v1h-1v-1h-8v1h-1v-1h-1v1h-2v-1h-3v1h-1v-1h-1v2h-1v-1h-1v-1h-1v1h-6v-1h-2v1h-1v-1h-1v1h-1v-1h-3v1h-1v-1h-1v1h-1v-1h-1v1h-3v-1h-3v1h-2v-1h-2v1h-2v1h-1v-2h-4v2h-1v-2h-1v1h-1v2h-1v1h-1v-2h-2v-1h-1v2h-2v-1h-1v-1h-1v1h-1v-1h-1v1h-3v-1h-1v1h-2v-1h-1v-1h-2v1h-4v-1h-2v1h-2v-1h-1v1h-1v-1h-1v1h-2v1h-3v1h-2v-2h-1v1h-2v-1h-1v2h-1v-1h-3v-1h-1v1h-1v-1h-1v1h-2v-1h-2v1h-2v-1h-3v-1h-1v1h-1v1h-1v-1h-6v-1h-3v1h-1v-1h-3v1h-1v1h-1v-2h-4v1h-2v-1h-8v1h-1v1h-1v1h-1v1h-3v-1h-2v2h-1v-1h-1v2h-1v-1h-1v2h-1v-3h-1v6h-1v1h-1v-6h-1v2h-1v1h-1v-1h-1v-5h-2v1h-1v-2h-1v1h-3v-1h-1v1h-2v-1h-1v1h-1v-1h-2v1h-1v-1h-1v1h-2v1h-1v-1h-1v-1h-1v1h-1v2h-1v-2h-1v-1h-1v1h-8v-1h-1v1h-2v-1h-1v1h-2v-1h-1v1h-1v-1h-4v1h-2v-1h-1v1h-2v1h-2v-1h-2v-1h-1v1h-4v-1h-1v1h-1v-1h-2v1h-2v-1h-7v1h-6v-1h-2v1h-3v-1h-1v1h-5v-1h-1v3h-1v-3h-1v1h-1v1h-1v-2h-1v1h-1v-1h-2v1h-1v-1h-1v1h-2v-1h-1v1h-1v2h-1v-2h-1v-1h-1v1h-6v-1h-1v1h-1v-1h-1v1h-1v-1h-1v3h-1v-3h-2v1h-1v-1h-1v-1h-2v-1h-3v2h-1v-1h-1v1h-1v-2h-2v1h-2v-1h-2v1h-2v1h-4v-1h-2v1h-1v-1h-1v1h-1v-1h-1v2h-1v-1h-1v-1h-1v1h-1v-1h-3v-1h-9v2h-1v-2h-5v1h-1v-1h-1v1h-1v-1h-1v1h-1v-1h-2v1h-1v1h-1v-2h-1v1h-2v1h-1v-1h-1v-1h-4v1h-1v-1h-2v1h-1v1h-2v-1h-2v1h-4v-1h-1v1h-3v-1h-1v1h-1v-1h-1v1h-3v-1h-4v1h-1v-1h-2v1h-1v-1h-2v1h-1v-1h-1v1h-1v-1h-3v-1h-6v1h-2v1h-1v-2h-1v1h-1v-1h-1v1h-2v1h-1v1h-1v-2h-1v1h-2v-1h-1v1h-3v-1h-1v-1h-6v1h-3v-1h-4v1h-5v1h-1v-2h-4v1h-1v-1h-2v1h-1v1h-2v-1h-1v1h-1v-1h-2v1h-3v1h-1v-1h-3v-1h-1v1h-1v-1h-5v1h-1v-1h-2v1h-1v-1h-1v1h-2v-1h-2v-1h-1v1h-7v1h-1v-1h-3v1h-1v-1h-1v1h-1v-1h-4v1h-3v-2h-1v1h-1v-1h-3v1h-2v1h-2v-1h-3v1h-1v-1h-2v1h-3v-1h-2v2h-1v-2h-2v1h-1v-1h-1v1h-1v-1h-1v1h-2v-1h-1v1h-3v-1h-1v1h-2v-1h-3v1h-9v1h-1v1h-1v-2h-3v2h-1v-2h-1v1h-1v-1h-4v1h-2v-1h-1v1h-2v-1h-5v-1h-2v1h-1v-1h-1v1h-4v-1h-3v-1h-1v1h-1v-1h-2v1h-1v-1h-2v1h-1v-1h-6v1h-7v-1h-5v1h-2v-1h-1v1h-1v-1h-2v1h-1v-1h-8v1h-1v-1h-2v1h-3v1h-1v-1h-3v1h-2z"/>
<path d="M277 636h1v1h1v-2h1v2h2v-1h4v1h3v-1h1v1h2v-1h2v1h2v-1h1v1h1v1h1v-2h1v2h1v-1h1v1h1v-2h2v1h2v-1h1v1h1v-1h6v1h3v-1h1v1h2v-2h1v2h1v-2h2v-1h1v1h1v1h2v1h1v-1h1v1h3v-1h1v1h2v-1h3v1h2v-1h1v1h1v-1h1v1h1v-1h1v1h1v-1h1v1h2v-1h1v1h5v-1h1v1h1v-2h1v2h3v-1h2v1h1v-1h1v1h2v-1h1v1h3v-1h1v1h1v-1h2v1h2v-1h2v1h1v-1h1v1h3v-1h1v1h1v-1h1v1h2v-1h1v1h2v-1h1v1h2v-1h3v1h3v-1h4v1h4v-2h1v2h3v-2h1v2h2v-1h1v1h2v-1h5v-1h1v2h3v-1h2v1h1v-1h1v1h4v-1h4v1h1v-1h2v1h3v-1h6v1h1v-1h4v1h4v-2h1v1h1v1h3v-1h2v1h4v-1h1v1h1v-1h1v1h1v-1h1v1h3v-1h1v1h1v-1h2v1h2v-1h1v1h1v-1h1v1h3v-1h2v1h1v-1h2v1h4v-1h1v1h2v-1h1v1h2v-1h1v1h2v-1h1v1h1v-1h2v1h1v-1h1v1h1v-1h6v-1h2v1h1v-1h3v2h1v-1h3v-1h1v1h2v-1h1v1h1v-1h1v2h2v-1h3v1h2v-1h2v1h4v-1h2v1h1v-1h3v1h1v-1h1v1h2v-1h2v1h1v-1h1v1h1v-1h1v1h1v-1h1v1h1v-1h2v1h3v-1h1v1h2v-1h1v1h1v-1h1v1h1v-1h4v1h2v-1h1v1h4v-1h1v1h1v-1h1v1h3v1h1v-1h3v-1h1v1h5v-2h1v1h4v-1h1v1h1v1h3v-1h1v1h1v-1h2v-1h1v1h1v-1h3v1h1v1h1v-1h1v1h2v-1h2v1h7v-1h3v1h1v-1h1v1h1v-1h4v1h6v-1h3v1h3v-1h2v1h2v-1h1v1h2v-1h1v1h1v-1h5v1h1v-1h2v1h1v-1h2v1h5v-1h2v1h4v-1h1v1h1v-1h2v1h1v-1h4v1h1v-1h2v1h2v-1h2v1h1v-1h1v1h2v-1h1v1h1v1h1v-1h1v1h1v-1h2v1h1v-1h1v-1h1v2h3v-1h1v1h3v-1h1v-1h2v1h2v-1h1v1h1v-1h1v1h1v-1h1v1h4v-1h2v1h1v-1h1v1h3v-1h1v1h1v-1h1v1h1v-1h1v-1h1v1h1v1h2v-1h1v1h1v-1h2v1h1v-1h2v1h3v-1h1v1h1v-1h1v-1h1v-1h1v1h6v-1h1v1h3v1h4v1h1v-1h5v1h1v-1h1v-1h1v1h1v1h1v-1h1v1h1v-1h2v1h1v-1h1v1h1v-1h1v1h4v-2h1v1h1v1h2v-1h1v1h5v-1h2v1h2v-1h1v1h4v-1h1v1h1v-1h3v1h2v-1h2v1h2v-1h2v1h1v-1h1v1h1v-1h1v1h3v-1h1v1h1v-1h1v1h4v-1h1v1h2v-2h1v1h1v1h2v-1h2v-1h1v1h3v-1h1v1h1v-1h1v1h2v1h1v-1h2v1h1v-1h2v1h1v-1h1v1h4v-1h1v1h9v-1h3v-1h1v1h6v-1h1v1h1v-1h1v-1h1v2h1v-1h2v1h4v-1h2v-1h1v3h1v-2h1v1h1v-1h1v1h6v1h3v-1h1v1h1v-1h3v1h1v-1h2v1h2v-1h1v-1h1v2h2v-1h1v1h1v-1h1v1h5v-1h2v1h3v-1h2v1h2v-1h2v1h4v-1h1v1h4v-1h1v1h4v-1h1v1h7v-1h1v1h4v-1h1v1h1v-1h1v1h1v-1h2v1h1v-1h1v1h3v-1h2v1h3v-1h2v1h2v-1h1v1h2v-2h1v2h2v-1h3v-1h1v2h1v1h3v-1h1v1h2v-2h1v1h2v-1h5v1h1v-1h2v1h1v-1h1v1h1v-2h1v1h1v1h1v-1h1v1h2v-1h1v1h1v-1h1v1h1v-1h1v1h2v-1h1v1h2v-1h1v1h1v-2h1v2h1v-1h2v1h2v-1h2v1h1v-1h1v1h3v-1h2v1h1v-1h2v1h1v-1h2v1h4v-1h1v1h2v-1h3v1h1v-1h1v1h1v-1h1v2h1v-1h1v1h3v-1h2v-1h4v1h4v-1h1v1h1v-1h1v1h3v-1h4v1h2v-1h1v1h5v-1h4v1h4v-1h1v1h2v-1h3v1h4v-1h1v1h1v-1h2v1h3v-1h1v1h4v-1h1v1h7v1h4v-1h1v-1h2v1h1v-1h3v1h1v-1h3v1h2v-1h3v1h1v-1h1v1h2v1h1v-1h1v1h1v-1h1v-1h1v1h3v-1h1v1h3v-1h1v1h1v-1h2v-1h1v2h1v-2h1v1h1v1h2v-1h1v1h2v-1h2v1h2v-1h1v1h1v-2h1v1h1v1h2v-1h1v1h1v-1h1v1h2v-1h3v1h2v-1h2v1h1v-1h1v1h1v-1h1v1h1v-1h1v1h1v-1h3v1h1v-1h2v1h6v-1h5v1h1v-1h1v-1h1v-1h1v-1h1v1h5v1h1v-1h1v1h2v-1h2v1h1v-1h1v1h1v-2h1v1h2v1h2v1h1v-1h1v2h4v-1h1v1h1v-1h2v-1h1v1h2v1h4v-1h3v1h3v-1h2v1h1v-1h4v1h1v-1h1v1h6v-1h1v1h5v-1h2v1h2v-1h1v1h2v-1h1v1h6v-1h1v-1h1v2h2v-1h2v1h2v-1h2v1h1v-1h3v1h2v-2h1v2h2v-1h1v1h1v-1h1v1h2v-1h1v1h2v-1h3v1h1v-1h5v1h1v-2h1v2h1v-1h1v1h1v-1h2v1h4v-1h2V643h-1v1h-3v-1h-2v1h-1v1h-1v-1h-2v-1h-1v1h-1v-1h-5v1h-1v-1h-1v1h-1v-1h-2v2h-1v-2h-1v1h-1v-1h-1v1h-1v-1h-15v1h-4v-1h-5v1h-1v-2h-2v1h-1v-1h-1v1h-4v1h-1v-1h-1v1h-1v-1h-3v1h-1v-1h-2v1h-1v-1h-5v1h-1v-1h-5v1h-2v-1h-5v1h-1v-1h-6v2h-1v-2h-1v1h-1v-1h-2v1h-1v-1h-1v1h-1v-1h-2v1h-1v1h-2v1h-3v-1h-1v1h-1v-1h-1v1h-3v-1h-2v1h-1v-1h-2v1h-2v-1h-1v2h-1v-1h-1v-1h-1v-1h-1v-1h-1v1h-3v-1h-6v1h-3v-1h-1v1h-1v-1h-2v1h-1v-1h-2v2h-1v-2h-2v1h-1v-1h-13v1h-3v-1h-1v1h-2v-1h-1v1h-1v-1h-2v1h-2v-1h-6v1h-1v-1h-4v1h-1v-1h-1v1h-1v1h-1v-1h-1v-1h-2v1h-2v-1h-2v1h-4v1h-1v-2h-3v1h-2v-1h-2v1h-3v-1h-2v1h-1v-1h-1v1h-2v-1h-1v1h-1v-1h-3v1h-3v-1h-3v1h-1v-1h-2v1h-3v-1h-2v1h-4v-1h-1v2h-1v-2h-3v1h-1v-1h-1v1h-1v-1h-3v1h-2v-1h-1v1h-5v-1h-2v1h-1v-1h-4v1h-3v-1h-3v1h-1v-1h-3v2h-1v-1h-1v-1h-4v1h-1v-1h-8v1h-1v-1h-2v1h-4v-1h-1v1h-1v-1h-1v1h-1v-1h-1v1h-1v-1h-2v2h-1v-2h-8v1h-1v-1h-2v2h-1v-1h-2v-1h-2v1h-3v-1h-2v1h-1v-1h-1v1h-1v-1h-1v1h-1v-1h-1v1h-6v-1h-1v1h-1v-1h-1v2h-1v-2h-2v1h-1v-1h-1v1h-2v-1h-2v1h-2v-1h-1v1h-1v-1h-2v1h-5v-1h-2v1h-2v1h-1v-1h-1v-1h-4v1h-1v1h-2v-1h-1v-1h-1v1h-1v-1h-1v1h-1v-1h-2v1h-2v-1h-2v-1h-1v1h-6v1h-1v-1h-1v1h-1v-1h-1v2h-1v-1h-1v1h-1v-1h-1v-1h-3v1h-2v-1h-3v1h-1v-1h-1v1h-1v-1h-4v1h-2v-1h-2v1h-1v-2h-2v1h-3v1h-1v-1h-1v1h-4v-1h-3v1h-1v-1h-2v1h-2v-1h-1v1h-2v-1h-7v1h-3v-1h-3v1h-1v-1h-1v2h-1v-1h-6v1h-1v-1h-7v1h-1v-1h-3v1h-1v-1h-2v1h-3v-1h-1v2h-1v-2h-2v1h-1v-1h-1v1h-2v-1h-3v-1h-1v1h-1v-1h-3v2h-1v-1h-1v-1h-1v2h-1v-1h-1v1h-2v-1h-3v-1h-1v1h-1v-1h-1v2h-1v-2h-3v1h-2v-1h-1v1h-3v-1h-4v1h-1v-1h-1v1h-1v1h-1v-1h-2v1h-1v-2h-1v1h-1v-1h-2v1h-1v-1h-3v1h-1v1h-1v-2h-2v1h-1v-1h-2v2h-1v-1h-4v-1h-2v1h-1v-1h-10v1h-1v-1h-2v1h-2v-1h-2v1h-1v-1h-2v1h-1v-1h-5v1h-1v-1h-1v1h-2v-1h-1v1h-1v-1h-3v1h-1v-1h-2v1h-2v-1h-1v2h-2v-1h-1v1h-2v-1h-1v1h-1v-1h-1v1h-1v1h-1v-1h-1v1h-2v-1h-1v1h-1v-1h-1v1h-1v-1h-1v1h-2v-1h-1v-1h-1v-1h-2v1h-1v1h-1v-2h-1v2h-1v-2h-5v2h-1v-2h-2v1h-2v-1h-2v1h-1v-1h-1v1h-1v-1h-1v1h-2v-1h-1v1h-2v-1h-2v1h-4v-1h-1v1h-1v-1h-1v1h-1v-1h-1v1h-1v-1h-2v-1h-2v1h-1v-1h-1v2h-1v-2h-1v2h-1v-1h-6v1h-3v-1h-2v1h-1v-1h-2v1h-1v-1h-3v1h-1v-1h-2v1h-2v-1h-2v2h-1v-1h-1v-1h-5v1h-1v-1h-1v1h-1v-1h-1v1h-3v-1h-6v1h-1v-1h-2v1h-1v-1h-2v1h-2v-1h-2v1h-1v-1h-1v1h-2v-1h-1v1h-1v-1h-1v1h-2v-1h-3v2h-1v-2h-2v1h-1v-1h-1v1h-2v1h-1v-1h-1v-1h-1v1h-2v-1h-1v1h-2v-1h-1v1h-2v-1h-1v1h-1v-1h-1v2h-1v-1h-1v1h-1v-1h-2v1h-1v-1h-1v1h-2v-2h-1v2h-1v-2h-1v1h-1v1h-1v-1h-1v-1h-3v1h-1v-1h-4v2h-1v-2h-3v1h-2v-1h-1v1h-2v-1h-2v1h-1v-1h-1v1h-1v-1h-5v2h-1v-2h-1v1h-1v-1h-1v1h-1v-1h-1v1h-3v-1h-4v1h-1v-1h-1v1h-3v-1h-1v1h-1v-1h-4v1h-1v-1h-1v1h-1v-1h-1v1h-4v-1h-3v2h-1v-2h-2v2h-1v-2h-1v1h-1v-1h-2v2h-1v-1h-1v-1h-3v1h-1v-1h-1v1h-4v-1h-3v2h-1v-1h-2v1h-2v-2h-1v1h-1v2h-1v-2h-2v1h-1v-2h-1v1h-3v1h-1v-1h-1v-1h-3v1h-5v1h-1v-2h-1v1h-3v-1h-2v2h-1v-1h-1v-1h-3v1h-1v-1h-2v1h-1v-1h-1v1h-1v1h-1v-2h-3v1h-3v-1h-1v2h-1v-1h-4v-1h-6v-1h-1v2h-1v-1h-1v1h-1v-1h-5v1h-1v-1h-4v1h-1v-1h-1v1h-1v-1h-1v1h-1v-1h-1v1h-3v-1h-2v1h-1v-1h-7v1h-1v-1h-4v1h-1v-1h-2v1h-1v-1h-3v1h-2v1h-2v-1h-1v1h-1v-1h-6v1h-2v1h-1v-1h-1v-1h-1v1h-1v-1h-1v1h-1v-1h-1v1h-4v-1h-3v-1h-2v1h-1v-1h-1v1h-1v-1h-2v2h-1v-2h-1v1h-1v-1h-3v1h-3v-1h-4v2h-1v-2h-3v1h-1v-1h-8v1h-1v-1h-4v1h-2v-1h-1v1h-3v-1h-2v1h-2v-1h-2v1h-1v-1h-1v1h-1v-1h-2v1h-1v-1h-1v1h-2v-1h-2v2h-1v-2h-2v1h-1v-1h-2v1h-1v1h-2v-1h-2v-1h-1v1h-1v-1h-1v1h-1v1h-1v-2h-1v1h-4v-1h-1v1h-2v-1h-1v2h-1v-1h-2v-1h-1v1h-1v-1h-9v1h-1v-1h-1v1h-2v-1h-1v1h-1v-1h-2v1h-2v-1h-2v1h-2v-1h-1v1h-1v-1h-3v1h-1v-1h-3v1h-1v1h-1v-2h-5z"/>
<path d="M277 668h4v-1h2v1h3v-2h1v2h1v-1h6v-1h1v1h1v-1h1v1h1v-1h1v1h1v-1h3v-1h1v-1h1v-1h1v2h1v-5h1v4h1v-1h2v1h1v-1h1v-3h1v4h4v-1h2v1h2v-2h2v2h3v1h1v-2h2v2h1v-1h2v1h2v2h1v-1h1v1h1v-1h2v1h2v-1h2v1h1v-1h2v-1h1v1h1v1h10v-1h2v1h2v-1h1v1h4v-1h1v1h2v-1h2v1h2v-1h1v1h2v-1h4v-1h1v2h1v-1h1v1h4v-1h1v1h3v-1h3v1h1v-1h1v1h2v-1h2v1h1v-1h1v1h2v-1h1v1h1v-1h1v1h3v-1h1v1h1v-1h1v1h1v1h1v-1h4v1h3v-1h1v1h1v-1h2v-1h1v1h1v-1h2v1h3v-1h1v1h1v-1h2v1h3v1h1v-1h1v1h1v-1h2v1h2v-2h1v1h3v-1h1v1h2v-1h1v1h1v-2h1v2h3v-1h1v1h1v-1h2v1h2v-1h2v1h2v-1h1v1h1v-1h3v1h2v-1h1v1h6v-1h3v1h1v-1h2v1h1v-1h2v1h5v-1h2v1h4v-1h2v1h7v1h1v-1h2v1h4v-1h4v1h2v-1h1v1h1v-2h1v1h1v1h1v-1h1v1h1v-1h1v1h3v-2h2v2h2v-1h3v1h1v-1h1v-1h2v1h1v-1h2v1h7v-1h1v1h1v-1h3v1h1v-2h1v2h1v-1h3v1h4v-1h2v1h7v1h6v-2h1v1h1v1h1v-1h1v1h2v-1h5v-2h1v2h2v-1h1v1h2v-1h1v1h1v-1h2v1h2v-1h3v1h1v-1h1v1h5v-1h1v1h3v-1h1v1h6v-1h4v1h2v-1h1v1h1v-1h1v1h1v-1h3v1h1v-1h3v1h1v-1h1v1h1v1h1v-1h1v1h4v-2h2v2h2v-2h3v1h1v-1h4v1h9v-1h1v2h3v-1h1v1h6v-1h1v1h5v-2h1v2h2v-1h4v-1h1v1h2v-1h3v1h1v-1h2v1h1v-1h1v1h1v-1h1v1h2v-1h1v1h1v-1h1v1h7v-1h1v1h5v-1h1v-1h1v2h1v1h2v-1h2v1h5v-1h1v1h1v-1h1v1h2v-1h1v1h1v-1h1v-1h1v2h5v-1h3v1h2v-1h1v1h2v-1h2v-1h1v1h2v-1h2v1h1v-1h1v1h1v-1h7v-2h1v1h3v-1h1v1h5v-2h1v2h2v-1h1v1h2v-1h6v1h2v-1h3v1h1v-3h1v3h1v-1h1v1h2v-1h2v1h3v-1h2v1h1v-1h4v1h3v-1h4v1h1v-1h3v1h1v-1h1v1h2v-1h2v2h1v-4h1v3h1v-1h2v-1h1v1h1v1h4v-1h1v1h1v-1h7v2h2v1h2v1h2v-1h2v1h4v-1h2v-1h1v1h1v-1h1v1h1v-1h2v1h3v-2h1v2h1v-2h1v2h1v-1h1v1h1v-1h2v1h3v-1h1v1h2v-1h1v2h1v-1h1v1h1v-2h1v2h6v-2h1v1h1v-1h1v1h2v-1h1v1h1v-1h1v-1h1v1h1v1h1v-1h1v1h6v-1h2v1h1v-1h1v1h1v-1h2v1h2v-1h2v1h2v-1h1v1h3v-1h1v1h1v-1h2v-1h1v2h4v-1h2v1h1v-1h1v1h1v-1h1v1h2v-2h1v2h3v-1h1v1h6v1h4v-1h1v1h4v-1h1v-1h3v1h2v-1h1v1h1v-1h1v1h4v-1h3v1h3v-1h1v1h2v-1h1v1h2v-1h3v1h2v-1h7v1h1v-1h2v1h3v-1h2v1h2v-1h1v1h2v-1h1v1h2v1h3v-1h1v1h2v-1h3v-1h1v1h2v-2h1v2h2v-1h1v-1h1v2h4v-1h2v1h1v-1h1v1h1v1h1v-1h12v-1h1v1h2v-1h2v1h5v1h1v-1h2v1h1v-2h1v2h2v-1h1v1h2v-1h1v1h1v-2h1v1h2v-1h1v1h1v-1h3v1h2v-1h1v1h1v-1h1v1h2v-1h1v1h1v-1h1v1h5v1h6v-1h8v-1h1v1h2v-1h1v1h1v-1h1v1h2v-1h1v1h4v1h3v-1h1v1h1v-1h2v1h2v-1h2v-1h1v1h1v1h4v-2h3v1h2v-1h2v1h4v-1h2v1h4v1h5v-1h1v-1h3v1h1v-1h2v1h3v-1h1v-1h1v2h4v-1h1v1h1v-2h1v1h2v-1h1v1h1v1h2v-1h1v1h1v-1h1v1h3v-1h2v1h3v-2h1v2h7v-1h1v1h1v-1h4v1h3v-2h1v1h3v1h1v-1h5v1h2v-1h1v1h3v1h1v-1h2v1h1v-1h1v1h2v-1h1v1h1v-1h1v1h1v-1h1v1h1v-1h1v1h3v-2h2v1h1v-2h1v1h1v1h5v-1h2v1h2v-1h2v1h2v-1h1v1h1v-1h2v1h2v-1h1v1h3v-1h2v1h1v-1h1v1h1v-1h1v1h5v-1h1v1h8v-1h1v1h2v1h1v-1h1v1h1v-1h1v1h1v-1h2v-1h1v2h2v-1h2v1h2v-1h1v1h4v-1h1v1h3v-1h1v1h1v-1h3v-1h1v2h2v-1h1v-1h1v2h1v-1h2v-1h1v1h1v-1h1v1h2v-1h6v1h1v-1h2v1h1v-1h1v1h3v-1h3v1h1v-1h3v1h1v-1h2v1h2v-2h1v2h4V673h-4v1h-1v-1h-1v1h-2v-1h-4v1h-1v-1h-1v1h-3v-1h-2v1h-1v-1h-4v1h-2v-1h-1v1h-1v-1h-1v1h-2v-1h-2v1h-1v-1h-2v1h-1v-1h-1v1h-2v-1h-2v1h-1v-1h-2v1h-1v-1h-1v1h-2v-1h-2v1h-2v-1h-2v1h-1v-1h-2v1h-1v1h-1v-2h-2v1h-2v-2h-2v1h-1v-1h-1v1h-2v1h-1v-2h-3v1h-1v-1h-3v1h-3v1h-1v1h-1v-2h-1v1h-1v-1h-2v1h-1v-1h-2v1h-1v-1h-1v2h-1v-2h-1v1h-2v-1h-4v1h-1v-1h-2v1h-1v-1h-2v1h-2v-1h-8v1h-2v-1h-1v1h-2v-1h-1v1h-3v-1h-2v1h-1v-1h-1v1h-1v-1h-1v1h-1v-1h-3v1h-1v-1h-2v1h-2v-1h-5v1h-1v-1h-1v1h-2v-1h-1v1h-1v-1h-1v1h-1v-1h-3v-1h-5v2h-1v-1h-1v-1h-2v1h-1v-1h-3v2h-2v-1h-1v1h-1v-1h-1v1h-1v-1h-4v1h-1v-1h-3v-1h-1v1h-1v1h-2v1h-2v-1h-1v-1h-1v-1h-2v1h-2v-1h-1v2h-1v-1h-2v1h-1v-1h-1v1h-2v-1h-2v-1h-2v1h-2v-1h-3v1h-1v-1h-1v1h-1v-1h-4v1h-3v1h-1v-1h-4v-1h-3v1h-2v-1h-2v1h-2v-1h-4v2h-1v-1h-6v1h-2v-1h-2v2h-1v-1h-1v-1h-1v1h-1v-1h-1v1h-2v-1h-1v1h-1v-1h-1v1h-1v-1h-1v1h-1v-1h-2v1h-3v-1h-1v1h-2v-1h-1v1h-1v-1h-1v1h-1v-1h-1v1h-1v-1h-1v1h-1v-2h-2v2h-1v-2h-2v1h-3v1h-2v-1h-1v1h-1v-1h-1v2h-1v-2h-4v1h-1v-1h-2v1h-3v-1h-1v1h-1v-2h-2v1h-3v-1h-6v2h-1v-1h-1v1h-1v-1h-1v1h-1v-1h-1v1h-1v-1h-1v1h-1v-1h-2v2h-1v-2h-1v1h-2v-1h-1v1h-2v-1h-1v1h-1v1h-1v-2h-1v2h-1v-2h-1v1h-1v-1h-4v1h-1v1h-1v-2h-1v1h-2v-1h-1v1h-1v-2h-2v1h-1v-1h-2v1h-4v-1h-1v1h-3v-1h-1v1h-2v-1h-2v1h-2v1h-3v-1h-1v1h-2v-1h-1v1h-1v-1h-10v2h-1v-1h-1v-1h-2v1h-2v-1h-5v-1h-3v1h-1v1h-1v-2h-1v1h-1v-1h-2v1h-1v-1h-1v2h-1v-1h-1v1h-2v-1h-1v1h-1v-1h-1v-1h-3v1h-1v-1h-6v1h-4v1h-1v-1h-5v1h-2v-1h-2v1h-1v-1h-3v1h-1v-1h-1v1h-1v-1h-1v1h-1v-1h-1v1h-1v-1h-7v1h-2v-1h-2v1h-1v-1h-1v1h-1v-1h-1v1h-1v-1h-1v1h-2v-1h-4v1h-1v-1h-1v1h-2v-2h-2v1h-2v-1h-7v2h-1v-1h-5v1h-1v-1h-4v1h-7v-1h-3v1h-2v-1h-4v1h-2v-1h-3v1h-1v-1h-2v1h-1v-1h-1v1h-2v1h-1v2h-1v-2h-1v1h-4v-1h-5v1h-2v-1h-3v2h-1v-2h-1v1h-1v1h-1v-2h-1v1h-1v-1h-1v-1h-1v2h-3v-1h-1v1h-1v-1h-1v1h-1v-1h-1v1h-1v-1h-2v1h-1v-1h-1v1h-1v-1h-3v3h-1v-2h-2v-1h-3v-1h-1v2h-1v2h-1v-2h-4v-1h-2v1h-1v-1h-3v1h-1v2h-1v-3h-4v1h-1v2h-1v-3h-1v1h-2v-2h-1v2h-3v-1h-2v1h-3v-1h-1v1h-2v-1h-2v-2h-2v-1h-1v1h-1v-1h-1v1h-4v1h-2v-1h-3v1h-1v-1h-1v1h-1v-1h-5v1h-2v-1h-2v2h-1v-2h-3v1h-1v-1h-1v1h-1v-1h-3v1h-1v-1h-1v2h-1v-2h-2v2h-1v-2h-3v1h-3v-1h-2v1h-1v-1h-1v1h-3v-1h-2v1h-6v-1h-3v1h-1v-1h-1v1h-1v-2h-3v1h-2v-1h-2v1h-3v1h-1v-1h-4v1h-1v-1h-1v1h-1v-1h-5v1h-1v-1h-5v-1h-1v2h-4v-1h-1v1h-1v-1h-1v1h-1v-1h-1v1h-3v-1h-1v1h-5v-1h-1v-1h-2v1h-1v-1h-3v1h-1v-1h-4v1h-1v-1h-3v1h-1v-1h-2v1h-1v-1h-7v1h-1v-1h-5v1h-1v1h-1v-2h-1v1h-4v-1h-2v1h-1v-1h-1v2h-2v-1h-1v1h-2v-1h-1v1h-2v-1h-1v1h-1v-1h-2v1h-1v-1h-5v1h-1v-1h-3v1h-1v-1h-7v1h-1v-1h-3v1h-1v-1h-5v1h-3v-1h-1v1h-3v-1h-6v1h-4v-1h-1v1h-3v-1h-6v1h-2v1h-1v-1h-1v-1h-1v1h-2v-1h-1v-1h-2v1h-1v-1h-1v1h-1v-1h-1v1h-1v-1h-1v2h-1v-2h-1v2h-2v-1h-3v1h-1v1h-1v-2h-2v1h-2v-1h-3v1h-1v-1h-2v1h-1v-1h-2v1h-2v-1h-2v1h-1v-1h-4v1h-1v-1h-1v1h-3v-1h-3v1h-2v-1h-1v1h-1v-1h-1v1h-1v-1h-1v1h-3v-1h-5v1h-1v-1h-1v1h-1v-1h-3v1h-2v-1h-1v1h-2v-1h-1v1h-2v-1h-1v1h-2v-1h-1v1h-1v-1h-1v1h-2v-1h-1v1h-2v-2h-1v1h-2v-1h-1v1h-5v1h-1v-1h-4v1h-1v-1h-1v1h-2v-1h-1v1h-1v-1h-1v1h-1v1h-1v-2h-4v1h-1v-1h-1v1h-1v-1h-1v1h-2v-1h-1v1h-1v-1h-1v1h-1v-2h-1v1h-2v-1h-2v1h-1v-1h-1v2h-1v-1h-2v1h-1v-1h-3v1h-1v-1h-1v1h-2v-1h-2v1h-2v-1h-3v1h-2v-1h-2v1h-6v-1h-2v1h-1v-1h-2v1h-2v-1h-1v-1h-2v2h-1v-2h-2v2h-2v-2h-2v2h-1v-1h-1v1h-1v-1h-3v1h-1v-1h-2v1h-1v1h-1v-2h-11v2h-1v-2h-3v1h-1v-1h-1v1h-1v-1h-2v1h-2v-1h-1v1h-1v-1h-1v1h-1v1h-1v1h-1v1h-2v1h-1v-3h-1v2h-1v-1h-1v1h-1v-1h-1v1h-5v-1h-1v1h-1v-1h-1v1h-1v-2h-1v2h-1v-2h-1v2h-2v-1h-5v-1h-1v1h-1v-1h-1v-1h-1v-1h-1v1h-1v-1h-2v1h-2v-1h-1v1h-1v-1h-11v1h-2v-1h-2v1h-1z"/>
<path d="M277 698h1v-1h3v1h3v-1h2v1h2v-1h1v1h1v-1h1v1h2v-1h1v1h3v-1h1v1h2v-1h2v1h1v-1h2v1h5v-2h1v1h1v1h2v-1h1v1h3v-1h1v1h2v-1h1v1h3v-1h2v1h6v-1h1v1h1v-1h2v1h3v-1h2v1h3v-1h1v1h3v-1h2v1h5v-1h3v1h3v-1h1v1h2v-1h1v1h4v-1h1v1h1v-1h2v1h4v-1h1v1h1v-1h2v1h1v-1h1v1h1v-1h2v1h4v-1h1v1h6v-1h5v1h3v-1h1v-1h1v2h3v-2h1v2h1v-2h1v2h2v-1h1v1h3v-1h1v1h1v-1h1v1h1v-2h1v2h4v-1h1v1h3v-1h2v-1h1v1h2v1h2v-1h1v1h4v-1h1v-1h6v-2h1v2h2v2h1v-1h1v1h2v-1h1v1h5v-2h1v2h5v-1h2v1h7v-1h3v1h3v-1h1v1h8v-1h5v1h3v-1h1v1h1v-1h1v1h1v-1h4v1h6v-1h2v1h2v-1h3v1h3v-1h1v1h1v-1h1v1h1v-2h3v2h3v-1h1v1h1v-1h1v1h1v-1h2v1h6v-1h1v1h1v-1h1v1h8v-1h1v1h4v-1h1v1h2v-2h1v1h1v-1h8v1h1v-1h1v1h5v1h1v-1h1v1h1v-1h1v1h2v-1h3v1h1v-1h5v1h1v-1h1v1h4v-1h1v1h4v-1h3v1h1v-1h4v-1h1v2h2v-1h1v1h2v-1h5v1h3v-1h2v1h1v-2h1v1h2v1h13v-2h1v1h1v1h1v-1h3v1h8v-1h1v1h1v-1h1v1h2v-1h1v1h2v-1h2v-1h1v2h5v-1h1v1h1v-1h2v1h1v-1h1v1h1v-1h2v1h2v-1h1v1h5v-1h2v1h1v-1h1v1h1v-1h1v1h1v-1h3v1h1v-2h1v2h6v-2h1v1h1v1h3v-1h3v1h2v-2h1v2h1v-1h1v1h4v-1h2v1h3v-1h2v1h1v-1h4v1h1v-1h1v1h5v-1h4v1h3v-1h1v1h3v-1h1v1h7v-1h4v-1h6v1h1v-2h1v1h1v2h5v-1h1v1h1v-1h3v-1h1v2h2v-1h1v1h8v-1h2v1h1v-1h1v1h2v-1h4v1h1v-1h2v1h3v-1h3v1h1v-1h1v1h5v-1h1v1h2v-1h1v1h3v-1h1v1h7v-1h1v1h1v-1h1v1h4v-1h1v1h1v-1h2v1h2v-1h1v1h1v-1h1v1h3v-1h1v1h2v-1h2v1h1v-1h2v1h2v-1h1v1h1v-1h1v1h1v-1h6v1h2v1h2v-1h2v-1h2v1h4v-1h1v1h2v-1h1v1h6v-1h1v1h1v-1h1v1h3v-1h1v1h3v-2h1v1h1v1h2v-2h5v2h2v-2h1v2h1v-1h1v1h1v-1h4v1h5v-1h3v1h3v-2h1v1h1v1h6v-1h2v1h1v-1h1v1h2v-1h1v1h8v-1h1v1h8v-1h1v1h1v-1h3v1h2v-1h3v1h2v-2h1v2h1v-1h1v-1h2v1h1v1h5v-1h1v1h1v-1h1v1h3v-1h1v1h5v-1h1v1h2v-1h1v-1h2v-1h1v3h2v-2h1v2h6v-1h1v2h3v-2h2v1h3v-1h1v1h1v-1h1v1h6v-1h1v1h3v-1h1v1h9v-1h1v1h3v-1h4v1h2v-1h1v-1h1v2h1v-1h1v-1h1v2h1v-1h1v1h3v-1h2v1h2v-1h1v1h4v-1h3v-1h1v2h5v1h2v-2h1v1h1v1h1v-1h4v-1h1v1h1v-1h2v1h3v-1h4v1h1v-1h3v1h1v-1h1v1h6v-1h1v1h2v-1h1v1h3v-1h1v1h1v-1h1v1h2v-1h2v1h1v-1h1v1h1v-1h1v1h1v-1h1v1h3v-1h1v1h4v-1h2v1h3v-1h3v1h4v-1h2v1h3v-2h1v-1h1v1h2v-1h1v1h3v1h4v-1h1v2h5v-1h1v1h1v-1h1v1h2v-1h2v1h2v-1h1v1h7v-1h1v1h1v-1h2v-1h5v1h1v-1h3v1h1v-1h1v-1h1v2h2v1h3v-1h1v1h4v-1h4v1h1v-1h2v1h2v-2h1v2h6v-1h2v1h2v-1h1v1h3v-1h2v1h1v-1h3v1h1v-1h2v1h1v-1h1v1h5v-1h2v1h3v-1h2v1h2v-1h3v1h2v-1h1v1h1v-1h1v1h1v-2h1v2h2v-1h3v1h1v-1h2v1h1v1h1v-1h2v1h5v-2h1v1h4v-1h1v1h3v-1h1v1h1v-1h1v1h1v-1h2v1h4v-2h1v2h1v-1h1v1h4v-1h2v1h1v-1h1v1h1v-1h1v1h1v-1h1v1h2v-1h1v1h3v-2h1v2h3v-1h1v-1h1v2h2v-2h1v2h3v-1h1v1h2v-1h1v1h5v-1h1v1h1v-1h3v1h4v-1h4v1h2v-1h1v1h5v-1h1v1h2V702h-5v-1h-1v1h-1v-1h-1v1h-1v1h-4v-1h-10v1h-1v-1h-5v1h-1v1h-1v-2h-1v1h-1v-1h-2v1h-1v-1h-1v1h-1v-1h-3v2h-1v-1h-4v1h-1v-1h-1v1h-1v-1h-3v1h-1v-1h-1v1h-3v-1h-1v1h-2v-1h-1v1h-1v-2h-2v1h-1v-1h-5v1h-4v-1h-4v1h-2v-1h-3v1h-3v-1h-1v1h-1v-1h-2v1h-1v-1h-2v1h-2v-1h-1v2h-1v-2h-1v2h-1v-2h-1v1h-1v-1h-1v1h-1v-1h-1v1h-1v-1h-2v1h-1v1h-1v-1h-1v-1h-1v1h-1v-1h-5v-1h-1v1h-6v1h-1v-1h-2v1h-1v-1h-1v1h-1v-1h-2v2h-1v-1h-1v-1h-1v2h-1v-2h-2v1h-5v-1h-7v1h-3v-1h-6v1h-1v-1h-3v1h-2v-1h-1v1h-1v-1h-3v3h-1v-2h-3v1h-2v-1h-1v1h-6v-1h-4v-1h-1v1h-2v-1h-1v1h-2v-1h-1v1h-2v-1h-2v1h-1v-1h-3v1h-1v-1h-2v1h-2v-1h-7v3h-1v-2h-1v2h-1v-1h-1v1h-1v-1h-1v-1h-2v1h-2v-1h-1v-1h-2v1h-1v-1h-1v2h-1v-2h-1v1h-3v-1h-2v-1h-2v2h-1v-1h-3v1h-1v-1h-3v1h-1v-1h-2v1h-2v-1h-2v1h-1v-1h-2v2h-2v-1h-1v-1h-6v1h-1v-1h-1v1h-1v1h-1v-2h-3v1h-2v-1h-2v2h-1v-2h-2v1h-2v1h-1v-2h-1v1h-1v-1h-4v1h-1v-1h-3v1h-1v-1h-5v1h-2v-1h-2v1h-1v-1h-3v-1h-2v2h-1v-2h-2v1h-1v1h-1v-2h-1v1h-1v-1h-2v1h-1v-1h-1v1h-1v-1h-1v1h-3v1h-1v-1h-3v1h-1v-1h-4v1h-1v-1h-6v2h-1v-1h-1v-1h-1v1h-2v-1h-2v1h-1v-1h-1v1h-1v-1h-5v1h-1v-1h-1v1h-1v-1h-8v1h-1v-1h-1v1h-1v-1h-1v1h-1v-1h-1v1h-1v-1h-2v1h-1v-1h-1v1h-1v-1h-3v1h-1v1h-1v-2h-4v1h-1v-1h-1v1h-2v1h-1v-2h-2v1h-1v-1h-1v1h-3v-1h-2v1h-1v-2h-1v1h-2v-1h-1v1h-2v1h-3v-1h-9v2h-1v-1h-1v-1h-3v2h-1v-2h-1v1h-1v1h-1v-1h-3v-1h-2v1h-1v-1h-5v1h-2v-1h-3v1h-2v-1h-4v1h-1v-1h-1v1h-2v-1h-1v1h-2v-1h-2v1h-1v-1h-2v1h-1v-1h-11v1h-1v1h-1v-2h-4v1h-1v-1h-5v1h-1v-1h-2v1h-2v-1h-1v1h-2v-1h-1v-1h-5v1h-1v1h-1v-1h-1v1h-1v-1h-1v1h-1v-1h-2v1h-1v-1h-2v1h-1v-1h-1v1h-1v-1h-3v1h-1v-1h-2v1h-1v-1h-1v1h-1v-1h-1v1h-1v-1h-1v1h-1v-1h-4v1h-1v-1h-2v1h-2v-1h-6v1h-1v-1h-1v1h-3v-1h-2v1h-2v-1h-5v1h-3v-1h-3v1h-1v-1h-1v1h-2v-1h-5v1h-1v1h-1v-1h-1v-1h-3v1h-1v-1h-1v-1h-1v1h-1v-1h-2v1h-1v1h-3v-1h-5v1h-1v-1h-2v1h-3v-1h-2v1h-1v1h-1v-2h-3v1h-2v-1h-1v1h-1v-1h-6v2h-3v2h-1v-2h-2v-1h-1v2h-1v-2h-2v-1h-1v1h-2v-1h-1v1h-1v-1h-2v1h-2v-1h-8v1h-1v-1h-1v1h-1v-1h-8v1h-2v-1h-1v1h-2v-1h-3v1h-3v-1h-1v2h-1v-1h-2v-1h-7v1h-1v-1h-2v-1h-2v1h-1v-1h-2v1h-2v-1h-4v1h-1v-1h-2v2h-1v-2h-1v2h-6v-1h-6v1h-1v-1h-1v1h-1v-1h-2v1h-1v-1h-5v1h-1v-1h-2v1h-1v-1h-2v2h-1v-1h-1v-1h-1v1h-4v-1h-1v1h-1v-1h-3v1h-2v-1h-5v1h-1v-1h-3v1h-3v-1h-4v1h-2v-1h-2v1h-5v-1h-1v1h-1v1h-1v-2h-1v1h-1v-1h-2v1h-1v-1h-1v1h-1v-1h-2v-1h-1v1h-1v1h-1v-1h-5v1h-1v-1h-2v1h-3v-1h-1v2h-1v-1h-1v-1h-1v1h-1v-1h-3v1h-1v-2h-2v1h-1v1h-1v-1h-8v1h-1v1h-1v-2h-2v1h-1v-1h-1v1h-1v-1h-2v2h-1v-2h-1v1h-2v1h-4v-1h-1v1h-5v-2h-1v1h-3v-1h-1v2h-1v-2h-1v1h-1v-1h-2v1h-1v-1h-3v-1h-1v1h-1v1h-1v-1h-5v1h-3v-1h-2v2h-1v-1h-1v-1h-13v1h-1v-1h-1v1h-5v-1h-4v1h-2v-1h-1v1h-1v-1h-7v1h-1v1h-1v-1h-2v-1h-9v1h-1v-1h-1v1h-1v-1h-5v1h-2v1h-1v-2h-1v1h-1v-1h-2v1h-2v-1h-2v1h-1v-1h-3v1h-2v-1h-2v1h-1v1h-1v-2h-1v1h-1v-1h-1v1h-2v-1h-1v1h-3v1h-1v2h-1v-2h-1v-1h-1v2h-1v-1h-2v-1h-1v-2h-4v1h-1v-1h-3v1h-5v1h-1v-1h-3v1h-1v-1h-4v2h-1v-2h-1v1h-2v-1h-1v1h-1v-1h-4v1h-5v-1h-2v1h-1v-1h-3v1h-1v-1h-1v1h-4v-1h-1v1h-1v-1h-1v1h-1v-1h-1v1h-1v-1h-2v1h-1v-1h-4v1h-1v-1h-2v1h-1v-1h-5v1h-1v1h-1v-1h-1v-1h-1v1h-1v-1h-3v1h-1v-1h-2v1h-1v-1h-1v1h-3v-1h-3v1h-1v-1h-1v1h-3v-1h-1v1h-1v-1h-7v2h-1v-2h-1v1h-1v-1h-7v1h-1v-1h-5v1h-1v-1h-1v1h-2v-1h-1v1h-1v-1h-1v1h-1v-1h-8v1h-1v-1h-3v1h-6v-1h-2v1h-1v-1h-3v1h-1v-1h-2v1h-1v-1h-2v1h-1v-1h-2v1h-1v-1h-3v1h-3z"/>
<path d="M277 729h1v-1h1v-1h1v-1h1v2h1v-1h6v-1h1v1h1v-1h1v1h1v1h1v1h1v-1h1v1h3v-1h1v1h2v-1h2v1h3v-1h5v1h3v-1h1v1h4v-1h2v1h2v-1h2v1h1v-1h1v1h7v-1h1v1h7v-1h1v-1h1v2h4v-1h1v1h1v-1h3v1h2v-1h1v1h1v-1h4v-1h1v1h3v1h3v-1h2v1h1v1h6v-1h1v-1h1v1h2v-1h1v1h1v-1h1v1h2v-1h1v1h5v-1h2v1h1v-1h1v1h3v-1h1v1h2v-1h2v1h1v-1h2v-1h1v2h12v-1h1v1h8v-1h1v1h2v-1h1v1h1v-1h2v1h1v-1h1v1h3v-1h2v1h4v-1h1v1h1v-1h1v1h1v-1h2v1h2v-2h1v1h1v1h5v-1h2v1h5v-2h1v1h1v1h1v-1h3v-1h1v1h1v1h3v-1h1v1h1v-2h1v2h3v-1h1v1h2v-1h1v1h4v-1h1v1h3v-1h2v1h3v-1h1v-1h1v1h2v-1h1v1h1v1h1v-1h1v1h4v-1h1v1h3v-1h1v1h7v-1h1v1h3v-1h3v1h3v-1h2v1h6v-1h1v1h7v-1h1v1h5v-1h1v1h2v-1h2v1h5v-1h2v1h2v-1h3v1h1v-1h1v1h4v-1h2v1h7v-1h1v1h1v-1h1v1h1v-1h3v1h1v-2h1v1h1v1h2v-1h2v1h2v-1h1v1h5v-1h1v1h1v-1h1v1h2v-1h2v1h5v-1h2v1h2v-1h1v1h3v-1h1v1h4v-1h1v1h4v-1h1v1h1v-1h1v1h2v1h3v-1h1v-1h2v1h2v-2h1v1h1v1h1v-2h1v2h1v-1h1v1h6v-1h1v1h1v-1h2v1h1v-1h1v1h1v-1h1v1h1v-2h1v1h3v1h1v1h6v-1h2v-1h2v1h5v-1h1v1h8v-1h1v2h5v-1h2v-1h1v1h2v-1h1v1h4v-1h1v1h1v-1h1v1h4v-1h2v1h6v-1h1v1h2v-1h1v1h7v-1h1v1h1v-1h1v1h3v-1h2v1h4v-2h1v1h1v1h3v-2h1v1h1v1h6v-2h1v2h2v-1h1v1h3v-1h1v-1h1v2h2v-1h1v1h1v-2h1v1h1v1h1v-1h2v1h1v-1h1v1h2v-1h2v1h4v-1h1v1h9v-1h1v1h3v-1h1v1h2v-1h2v1h3v-1h1v1h1v-1h1v1h7v-2h1v2h4v-1h1v1h1v-1h2v1h1v-1h2v1h2v-1h1v1h1v-1h2v1h3v-1h1v1h2v-1h1v1h3v-1h1v1h3v-1h1v1h4v-1h1v1h1v-1h1v1h1v-1h2v1h3v-1h1v1h1v-1h1v1h3v-1h1v1h1v-1h1v1h3v-1h2v1h1v-1h1v1h1v-1h1v1h1v-1h2v1h1v-1h1v1h12v-1h4v1h2v-1h2v1h1v-1h1v1h1v-1h2v1h2v-1h1v1h1v-1h1v-1h1v2h1v-1h1v1h5v-1h1v1h1v-2h1v2h2v-1h1v1h2v-1h1v1h1v-1h2v1h1v-1h4v1h1v-1h1v1h1v-1h1v1h2v-1h1v1h4v-1h2v1h2v-1h1v2h2v-1h2v-1h1v1h9v-1h1v1h5v-1h2v1h5v-1h3v1h7v-1h1v1h4v-1h1v1h5v-2h1v2h2v-1h2v1h3v-1h1v1h2v-2h1v2h2v-2h1v1h1v1h3v-1h3v1h1v-1h1v1h5v-1h1v-1h1v2h1v-1h1v1h3v-2h1v1h2v1h2v-1h2v1h2v-1h1v1h5v-1h6v1h5v-1h1v1h1v-1h1v1h1v-1h1v1h2v-2h1v2h2v-2h1v1h1v1h3v-1h2v1h1v-1h1v1h2v-1h1v1h1v-2h1v1h2v1h1v-1h1v1h2v-1h1v1h2v-1h2v1h2v-1h1v1h2v-1h1v1h2v-1h1v1h3v-1h1v1h9v-2h1v1h1v1h1v-1h1v1h6v-1h1v1h3v-2h1v1h1v1h4v-1h1v1h2v-1h1v-1h1v2h2v-1h1v1h1v-1h2v1h3v-1h1v1h1v-2h1v2h3v-1h1v1h3v-2h1v2h1v-1h1v1h2v-1h1v1h1v-1h1v1h3v-2h1v1h3v1h8v-1h1v1h3v-1h1v1h1v-1h2v1h1v-1h1v1h3v-1h1v1h4v-1h1v-1h1v2h2v-1h4v1h2v-1h1v-1h1v2h2v-1h1v1h1v-1h1v1h1v-1h1v1h2v-1h1v1h2v-1h1v1h4v-1h1v1h1v-1h1v1h1v-1h1v1h1v-2h1v1h1v1h1v-2h1v2h2v-1h1v1h5v-1h1v2h2v-2h1v1h3v-1h1v1h4v-1h1v-1h1v2h1v-2h1v2h1v-1h1v1h2v-2h1v2h8v-1h2v1h9v-1h3v1h3v-1h1v1h4v-1h1v1h1v-1h1v1h3v-1h1v1h1v-1h1v1h3v-1h1v1h1v-1h1v1h2v-1h1v1h1v-1h1v1h2v-1h2v1h2v-1h1v1h1v-1h3v1h8v-1h2v1h1v-1h1v1h2v-1h1v1h1v-1h1v1h4v1h7v-1h1v-1h4v1h4v-1h2v1h3v-1h1v1h4V733h-10v1h-1v-1h-3v1h-1v-1h-2v1h-1v-1h-5v1h-1v-1h-2v1h-2v-1h-5v1h-2v-1h-1v1h-1v-1h-2v1h-1v-1h-1v1h-2v-1h-2v1h-1v-1h-1v1h-1v-1h-2v1h-1v-1h-1v1h-2v-1h-3v2h-1v-1h-1v-1h-2v2h-1v-1h-1v-1h-1v1h-5v1h-3v-2h-1v1h-1v-1h-5v1h-2v-1h-7v1h-1v-1h-1v1h-3v-1h-3v1h-1v-1h-1v1h-1v-1h-4v1h-1v-1h-5v1h-1v-1h-1v1h-2v-1h-3v1h-1v-1h-7v1h-1v-1h-1v2h-1v-1h-4v-1h-2v2h-1v-2h-2v1h-3v-1h-2v1h-3v-1h-4v1h-1v-1h-2v-1h-6v1h-2v1h-1v-1h-2v1h-1v-1h-1v1h-2v-1h-2v1h-1v-1h-4v2h-1v-1h-3v1h-1v-1h-2v-1h-1v2h-1v-2h-2v1h-1v-1h-1v1h-1v-1h-1v1h-1v-1h-3v2h-1v-2h-1v1h-1v-1h-1v1h-1v-1h-2v1h-3v-1h-1v1h-1v-1h-1v1h-1v-1h-1v1h-1v1h-1v-1h-1v2h-1v-2h-2v1h-1v-2h-1v1h-1v-1h-1v1h-3v-1h-1v1h-1v-1h-2v1h-2v-1h-1v1h-1v-1h-2v1h-1v-1h-1v1h-1v-1h-1v1h-1v-1h-3v1h-1v-1h-5v1h-1v-1h-1v1h-3v-1h-1v1h-1v-1h-4v1h-2v-1h-5v1h-1v-1h-1v1h-2v1h-1v-2h-2v1h-1v-1h-1v1h-1v1h-1v-1h-1v-1h-2v1h-1v-1h-1v1h-1v-1h-3v1h-2v-1h-1v1h-2v1h-1v-2h-4v1h-4v1h-1v-1h-1v-1h-2v1h-1v-1h-5v1h-1v-1h-1v1h-1v-1h-1v1h-1v-1h-5v1h-1v1h-2v-1h-2v1h-1v-1h-2v-1h-1v1h-2v-1h-2v1h-1v1h-1v-2h-4v1h-1v-1h-1v1h-1v-1h-2v1h-2v-1h-1v1h-1v-1h-2v1h-1v-1h-2v1h-1v-1h-2v1h-2v-1h-1v1h-1v-1h-3v1h-1v-1h-3v2h-1v-2h-1v1h-1v-1h-3v1h-2v-1h-1v1h-1v-1h-3v1h-4v-1h-2v1h-1v-1h-2v1h-1v-1h-3v1h-1v-1h-1v1h-1v-1h-3v2h-1v-2h-2v1h-1v-1h-2v1h-3v-1h-2v1h-2v-1h-4v2h-1v-1h-3v1h-3v-1h-1v1h-4v-1h-3v1h-1v-1h-4v-1h-10v1h-2v-1h-4v2h-1v-2h-3v1h-1v1h-1v-2h-3v1h-1v-1h-1v1h-1v1h-1v-1h-3v-1h-4v1h-2v-1h-3v1h-4v-1h-1v1h-2v-1h-1v1h-1v-1h-4v1h-3v1h-1v-2h-2v1h-1v-1h-2v1h-1v-1h-4v1h-1v-1h-1v1h-2v-1h-3v1h-1v-1h-3v2h-1v-1h-1v-1h-3v2h-1v-2h-2v1h-1v-1h-4v1h-1v-1h-1v1h-1v-1h-2v1h-1v-1h-1v1h-2v-1h-2v2h-1v-2h-1v1h-1v-1h-1v1h-1v-1h-4v1h-3v-1h-3v1h-1v-1h-2v1h-3v-1h-1v1h-1v-1h-7v1h-1v-1h-1v1h-1v-1h-2v1h-1v-1h-5v1h-1v-1h-1v1h-3v-1h-5v1h-1v-1h-8v1h-1v-1h-1v1h-3v-1h-5v2h-1v-1h-3v1h-2v-1h-2v1h-2v-1h-3v1h-1v-1h-1v1h-1v-2h-2v1h-3v-1h-3v1h-1v-1h-1v1h-2v-1h-2v1h-1v-1h-1v1h-3v-1h-1v1h-1v-1h-6v1h-1v-1h-2v1h-2v-1h-2v1h-2v-1h-2v1h-1v-1h-1v1h-1v-1h-3v1h-1v-1h-2v1h-3v-1h-4v2h-1v-2h-1v1h-1v-1h-7v1h-1v-1h-3v1h-3v-1h-1v1h-2v-1h-1v1h-2v-1h-3v2h-1v-1h-3v1h-1v-1h-4v1h-1v-1h-3v1h-2v-1h-2v-1h-1v2h-1v-2h-3v1h-1v1h-1v-2h-5v1h-1v-1h-2v1h-2v-1h-2v1h-2v1h-1v-1h-1v-1h-2v1h-1v1h-1v-2h-1v1h-2v-1h-3v1h-1v-1h-1v1h-1v-1h-3v1h-3v-1h-2v1h-1v-1h-1v1h-1v-1h-1v1h-1v-1h-7v1h-1v-1h-5v1h-1v-1h-1v1h-1v-1h-3v1h-1v-1h-2v1h-1v-1h-1v1h-2v-1h-4v-1h-4v2h-6v-1h-1v2h-1v-2h-2v1h-1v-1h-3v1h-1v-1h-5v1h-2v-1h-2v2h-1v-2h-4v1h-2v1h-1v1h-1v-1h-1v-1h-1v1h-1v-2h-4v1h-1v-1h-1v1h-2v-1h-2v1h-1v-1h-1v1h-1v-1h-2v1h-1v-1h-1v1h-1v-1h-1v1h-2v-1h-2v1h-1v-1h-4v1h-4v-1h-1v1h-1v-1h-4v1h-4v-1h-4v1h-2v-1h-1v1h-1v-1h-1v1h-3v-1h-2v1h-1v1h-1v-1h-1v1h-1v-1h-1v1h-2v-1h-4v-1h-3v1h-1v-1h-1v1h-1v1h-2v-2h-2v1h-1v1h-1v-2h-5v1h-3v-1h-1v2h-1v-2h-2v1h-2v-1h-4v1h-1v-1h-1v1h-1v-1h-2v2h-1v-2h-7v1h-1v-1h-5v2h-1v-1h-1v-1h-1v1h-2v-1h-3v1h-3v-1h-1v1h-1v-1h-4v1h-2v-1h-1v1h-1v-1h-2v1h-4v-1h-2v1h-3v-1h-1v1h-2v-1h-1v1h-3v-1h-2v1h-1v-1h-1v1h-1v-1h-1v2h-1v-1h-4v-1h-4v1h-1v-1h-1v1h-1v-1h-1v1h-1v-1h-2v1h-1v-1h-5v1h-2v-1h-5v1h-1v-1h-3v1h-1v-1h-1v1h-1v-1h-4v1h-1v-1h-1v1h-1v-1h-6v1h-2v-1h-2v1h-1v-1h-1v1h-2v-1h-3v1h-2v-1h-1v-1h-2v1h-1v-1h-1v1h-8v1h-3v1h-1v-2h-7v1h-3v-1h-1v1h-1v-1h-5v1h-1v-1h-2v1h-1v-1h-1v1h-1v-1h-2v1h-1v-1h-2v1h-1v-1h-1v1h-2v1h-2v1h-2v-1h-2v1h-1v-1h-3v1h-2v1h-1v-3h-2z"/>
<path d="M277 759h2v-1h4v1h4v-1h1v1h1v-1h4v1h2v-1h2v1h2v-1h1v1h1v-1h1v1h5v-1h1v1h2v-1h2v1h1v-1h1v1h2v-1h2v1h4v-1h2v1h1v-2h1v2h5v-2h1v2h2v-1h1v1h3v-1h1v1h2v-2h1v1h1v-1h1v2h2v-1h1v1h1v-1h1v1h4v-1h1v-1h1v2h1v-1h1v1h2v-1h1v1h4v-2h1v2h2v-1h1v-1h1v1h2v1h4v-1h3v1h4v-1h1v1h4v-1h2v1h1v-1h1v1h1v-2h1v1h1v1h3v-1h2v1h5v-1h1v1h1v-1h1v1h5v-1h1v1h2v-1h3v1h3v-1h2v1h2v-1h1v1h6v-1h1v1h10v-1h1v1h3v-1h1v1h1v-1h2v1h5v-1h1v1h4v-1h1v1h5v-1h1v1h2v-1h1v1h1v-1h1v1h1v-1h1v1h1v-1h6v1h1v-1h7v1h4v-1h1v1h4v-1h4v1h1v-2h1v1h1v1h1v-2h1v2h1v-1h3v1h1v-1h3v1h1v-1h1v1h4v-1h2v-1h1v1h3v-1h1v1h4v1h3v-1h1v1h6v-1h2v1h4v-1h1v1h1v-1h2v1h1v-1h1v1h1v-1h3v1h1v-1h1v1h2v-1h2v-1h2v1h2v1h2v-1h2v1h3v-1h1v1h3v-1h2v1h1v1h3v-1h1v1h4v-1h2v-1h3v1h1v-1h2v-1h1v2h4v-1h1v1h1v-1h2v1h2v-1h1v1h11v-1h1v1h1v-1h4v1h1v-1h2v1h3v-1h1v2h2v-1h1v1h1v-1h1v1h1v-1h1v-1h1v1h1v-1h1v1h3v-1h1v1h8v-1h1v1h3v-1h1v1h4v-1h5v1h1v-1h1v1h5v-1h1v1h9v-1h1v1h1v-1h1v1h1v-2h1v2h1v-1h1v1h2v-2h1v2h1v-1h1v-1h4v1h1v-2h1v2h2v1h1v-1h1v1h2v-2h1v2h5v-2h1v1h1v1h5v-1h1v1h1v-1h1v1h1v-1h1v1h2v-1h2v-1h1v1h1v1h5v-1h1v1h1v1h1v-2h1v2h3v-1h3v-1h4v1h5v-1h1v1h2v-2h1v2h1v-1h3v1h4v-1h1v1h1v-1h1v1h2v-1h4v1h4v-1h1v1h4v-1h1v2h1v-1h2v1h3v-1h1v-1h1v1h1v-1h1v1h5v-1h1v1h6v-1h1v-2h3v1h1v-1h1v1h1v1h2v1h1v-1h1v1h2v-1h1v1h2v-1h1v1h5v-1h1v1h4v1h1v-1h3v1h1v-1h3v-1h1v1h3v-1h3v1h1v-1h1v1h7v-2h1v2h1v-1h1v1h5v-1h1v1h2v-1h3v1h5v-1h1v1h3v-2h1v2h2v-1h2v-3h1v2h1v-1h2v1h1v1h1v1h1v-1h1v2h3v-2h1v1h1v-1h2v1h2v-1h2v1h2v-1h4v1h3v-1h1v1h1v-1h1v1h1v-1h1v1h1v-1h2v1h1v-1h1v1h1v-1h1v1h8v-1h1v1h5v-1h1v1h2v-1h2v1h1v-1h1v1h2v-1h1v1h1v-1h6v-1h1v1h1v-2h1v3h1v-1h2v1h1v-2h1v2h2v-1h1v1h1v-1h1v1h4v-1h1v1h4v-2h1v2h6v-1h1v1h1v-2h1v2h5v-1h1v1h6v-2h1v3h1v-1h2v-1h1v1h1v-1h2v1h7v-2h1v2h1v-2h1v1h2v-1h1v1h4v-1h1v1h1v-1h1v1h1v-1h1v1h2v-1h1v1h2v-1h2v1h2v-1h3v1h3v-1h1v-1h1v1h5v1h4v-2h1v2h1v-1h2v1h1v-1h1v1h1v-1h4v1h2v-1h4v1h1v-1h4v1h1v-1h1v1h1v-2h1v1h1v1h6v-1h2v1h1v-1h1v1h1v-1h1v1h1v-1h1v1h2v-1h1v1h2v-1h1v1h2v-2h1v2h1v-1h3v1h1v-2h1v1h2v1h1v-1h1v1h4v-1h1v1h1v-1h1v1h4v-1h1v2h1v-1h2v1h1v-1h2v1h2v-1h2v1h1v-2h1v1h3v1h1v-2h1v1h3v1h3v-1h2v1h7v-1h1v1h2v-1h1v1h1v-1h1v1h8v-1h1v1h3v-1h1v1h4v-1h1v1h7v-1h1v1h2v-1h1v1h5v-1h1v1h3v-1h1v1h3v-1h1v1h1v-1h3v1h1v-1h1v1h2v-2h1v2h1v-1h1v1h1v-1h3v1h2v-1h1v1h2v-1h1v1h1v-1h1v1h1v-1h1v1h8v-1h1v1h2v-1h1v1h5v-1h1v2h3v-1h3v-1h1v1h2v-1h1v1h2v-1h1v-1h2v1h1v1h2v-1h1v1h1v-1h2v1h8v-1h1v1h2v-1h1v-1h1v1h1v1h8v-1h1v1h6v-1h1v1h3v-1h1v1h5v-2h1v1h1v-1h2v2h2v-1h1v1h3v-1h3v1h1v-1h1v1h11v-2h1v2h16v-1h1v1h1v-1h1v1h4v-1h1v1h2v-1h1v1h3v-1h1v1h3v-1h3v1h5v-1h3v1h3v-1h1v1h1v-1h2v1h2V763h-1v1h-2v-1h-3v1h-1v-1h-2v1h-1v-1h-2v1h-1v-1h-2v2h-1v-1h-1v1h-1v-1h-1v1h-2v-1h-2v-1h-1v1h-1v-1h-1v1h-1v-1h-1v1h-1v-1h-2v1h-2v-1h-4v1h-1v-1h-3v1h-2v-1h-3v1h-1v-1h-4v1h-3v-1h-3v1h-1v-1h-8v2h-1v-2h-1v1h-2v-1h-1v1h-1v-1h-1v1h-1v-1h-1v1h-1v-1h-1v1h-3v1h-1v-1h-1v-1h-3v1h-1v-1h-3v1h-3v1h-1v-1h-1v1h-1v-1h-1v-1h-2v1h-1v-1h-4v1h-1v-1h-8v1h-1v-1h-1v1h-3v-1h-2v1h-2v-1h-2v1h-1v-1h-5v1h-1v-1h-1v1h-1v-1h-4v1h-1v-1h-1v1h-1v1h-2v-2h-6v1h-3v-1h-3v1h-1v-1h-2v1h-1v-1h-1v1h-1v-1h-1v1h-1v-1h-1v-1h-3v1h-1v1h-3v-1h-1v1h-1v-1h-12v1h-1v-1h-1v1h-2v-1h-2v1h-1v-1h-1v1h-2v-1h-2v1h-1v-1h-1v1h-1v-1h-1v2h-1v-2h-1v1h-1v-1h-2v1h-3v-1h-6v1h-1v-1h-2v1h-3v-1h-4v2h-1v-2h-1v1h-2v-1h-2v1h-2v-1h-5v1h-1v-1h-4v1h-1v-1h-11v1h-1v-1h-2v1h-1v-1h-8v1h-5v1h-2v-1h-1v1h-3v-1h-7v1h-2v-1h-1v1h-1v-1h-1v1h-2v-1h-1v1h-1v-1h-1v1h-5v-1h-4v2h-1v-1h-1v-1h-8v1h-1v-1h-2v1h-1v-1h-2v1h-1v1h-1v-2h-2v1h-1v1h-1v-1h-1v-1h-2v1h-1v-1h-1v1h-3v1h-1v-1h-1v1h-1v-1h-1v-1h-2v1h-1v-1h-2v1h-1v-1h-6v1h-1v-1h-1v1h-2v-1h-1v1h-1v-1h-2v1h-1v-1h-1v1h-1v-1h-6v1h-2v-1h-1v1h-1v-1h-1v1h-1v-1h-4v1h-2v-1h-2v-1h-1v1h-1v-1h-4v1h-2v-1h-3v1h-2v-1h-1v1h-1v-1h-3v1h-2v-1h-2v1h-1v-1h-3v1h-1v-1h-6v2h-1v-2h-3v1h-1v-1h-1v1h-3v-1h-3v1h-1v-1h-5v1h-1v-1h-2v1h-2v-1h-1v1h-1v-1h-1v1h-1v-1h-3v1h-2v-1h-7v1h-8v-1h-1v1h-2v-1h-1v1h-1v-1h-1v1h-1v-1h-2v1h-1v-1h-1v1h-2v-1h-3v1h-1v-1h-3v2h-1v-2h-1v1h-1v-1h-2v1h-1v-2h-2v1h-1v-1h-1v2h-2v-1h-4v1h-1v-1h-3v1h-1v-1h-1v1h-1v-1h-1v2h-4v1h-2v-2h-1v-1h-1v1h-5v-1h-3v1h-1v-1h-2v-1h-2v1h-1v1h-1v-1h-1v1h-1v-1h-3v1h-1v-1h-1v1h-1v-1h-3v1h-2v-1h-1v1h-1v-1h-6v1h-1v-1h-4v2h-1v-2h-2v1h-1v-1h-1v1h-4v-1h-9v1h-1v1h-1v1h-1v-2h-2v1h-1v-2h-4v2h-1v1h-1v-1h-5v-1h-1v-1h-4v1h-1v-1h-1v1h-3v-1h-3v1h-1v-1h-1v1h-1v-1h-1v1h-1v-1h-3v1h-1v-1h-1v1h-1v-1h-1v2h-1v-2h-2v1h-5v1h-2v-2h-3v2h-1v-1h-1v-1h-3v1h-1v-1h-3v1h-1v-1h-1v1h-1v-1h-1v1h-1v-1h-2v1h-1v-1h-3v1h-1v-1h-4v2h-1v-2h-1v1h-2v-1h-1v1h-2v-1h-6v1h-1v-1h-2v1h-1v-1h-1v1h-1v-1h-2v1h-1v-1h-2v1h-2v-1h-1v1h-1v-2h-3v1h-1v1h-1v-1h-3v1h-1v-1h-2v2h-1v-2h-3v1h-2v1h-3v-1h-1v1h-2v-1h-1v-1h-8v1h-1v-1h-1v1h-1v-1h-1v1h-2v-1h-1v1h-1v-1h-1v1h-5v-1h-3v1h-1v-1h-2v2h-1v-1h-1v-1h-4v1h-1v-1h-9v1h-2v-1h-1v1h-1v-1h-1v1h-1v-1h-2v1h-1v-1h-2v1h-2v1h-1v-2h-1v2h-3v-1h-2v-1h-1v1h-1v-1h-1v2h-2v-1h-3v-1h-3v1h-3v-1h-1v1h-2v-1h-5v1h-3v-1h-3v1h-1v-1h-1v1h-1v-1h-1v1h-1v-1h-3v2h-1v-2h-3v1h-1v-1h-4v1h-1v-1h-5v1h-1v-1h-1v2h-2v-1h-1v-1h-9v1h-1v-1h-1v1h-2v-1h-1v1h-2v-1h-1v1h-1v-1h-3v1h-3v-1h-4v1h-2v-1h-1v1h-2v-1h-2v1h-2v-1h-2v1h-1v-1h-1v2h-1v-2h-4v1h-1v-1h-7v1h-3v-1h-5v1h-1v-1h-3v1h-1v-1h-6v1h-1v-1h-4v1h-1v-1h-1v1h-1v-1h-4v1h-1v-1h-5v1h-1v-1h-3v1h-1v-1h-1v1h-1v-1h-4v-1h-4v1h-1v-1h-1v1h-2v-1h-2v2h-1v-1h-1v1h-1v-1h-4v1h-3v-1h-7v1h-1v-1h-2v2h-1v-1h-3v-1h-3v1h-1v-1h-1v1h-9v-1h-2v1h-1v-1h-3v1h-1v-1h-3v1h-1v-1h-2v1h-1v1h-1v-2h-1v1h-2v-1h-1v2h-1v-2h-2v1h-1v-1h-4v1h-1v-1h-1v1h-2v-1h-2v1h-1v-1h-3v1h-2v-1h-1v1h-1v-1h-2v1h-2v-1h-3v1h-1v-1h-2v1h-1v-1h-5v1h-3v-1h-2v1h-1v-1h-3v1h-1v-1h-3v1h-1v-1h-4v1h-1v-1h-1v-1h-1v1h-1v-1h-3v2h-1v-1h-3v1h-2v-1h-1v1h-2v-1h-1v1h-1v-1h-1v1h-1v-1h-2v1h-3v-1h-3v-1h-3v2h-1v-1h-4v1h-1v-1h-5v1h-2v-1h-1v1h-2v-1h-4v1h-2v-1h-5v1h-1v1h-1v-2h-3v2h-1v-2h-2v1h-1v-1h-3v1h-1v-1h-6z"/>
<path d="M277 790h3v-1h3v-1h1v1h2v-1h1v1h1v-1h1v1h2v-1h1v1h2v-1h2v1h1v-1h1v1h3v-1h1v1h2v-1h2v1h7v-1h2v1h3v-1h1v1h1v-1h1v1h2v-2h1v1h1v-2h1v1h1v1h3v-1h1v-1h1v1h3v1h1v-2h1v1h1v1h2v-1h1v2h3v-1h1v1h2v-1h2v1h1v-1h1v1h3v-1h1v1h2v-1h1v1h6v-1h1v-1h1v2h4v-1h1v1h3v-1h1v1h2v-1h2v1h3v-1h1v1h3v-1h1v1h1v-1h1v1h3v-1h2v1h4v-1h1v1h2v-1h1v1h6v-1h1v1h8v-1h1v1h3v-1h2v1h1v-1h3v1h4v-1h1v1h3v-1h3v1h2v-1h2v1h3v-1h2v1h1v-1h1v1h1v-1h5v1h1v-1h1v1h3v-1h2v1h1v-1h1v1h3v-1h1v1h2v-1h1v1h5v-1h2v1h2v-1h1v1h2v-1h1v1h2v-1h1v-1h1v2h2v-1h1v1h3v-1h3v1h1v-1h2v1h1v-1h3v1h2v-1h1v1h5v-1h1v1h1v-1h2v1h4v-1h1v1h3v-1h1v1h2v-2h2v2h3v-1h1v-1h2v2h6v-2h1v2h1v-1h1v1h2v-1h2v1h4v-1h2v1h1v-1h1v1h1v-1h1v1h6v-1h1v1h3v-1h3v1h2v-1h1v-1h1v2h1v-1h1v1h2v-1h2v1h1v-1h2v1h5v-1h1v1h4v-2h1v1h2v1h4v-1h1v1h1v-1h1v1h5v-2h1v2h3v-2h1v1h1v1h5v-1h1v1h1v-1h1v1h1v-1h1v1h6v-1h2v1h1v-1h3v1h1v-1h1v1h1v-1h1v1h6v-1h2v1h1v-1h1v1h2v-1h1v1h2v-1h1v1h7v-1h2v1h2v-1h1v1h4v-1h3v1h3v-1h1v1h4v-2h1v1h1v1h3v-2h1v2h1v-1h2v1h3v-1h1v1h4v-1h2v1h3v-1h2v1h1v-1h1v1h8v-1h1v1h3v-1h1v1h3v-1h2v1h3v-1h2v1h3v-1h2v1h10v-1h1v1h3v-1h1v1h1v-1h1v1h1v-1h1v1h3v-1h2v1h4v-1h5v1h8v-1h1v1h1v-1h3v1h2v-1h3v1h2v-1h2v1h2v-1h1v1h1v-1h1v1h1v-1h1v1h1v-1h2v1h1v-1h2v1h4v-1h2v1h3v-2h1v2h11v-1h1v1h2v-1h1v1h2v-1h1v1h1v-1h1v1h3v-1h2v-1h1v2h5v-1h1v1h1v-1h1v1h2v-1h1v-1h1v2h3v-2h2v2h1v-1h2v1h1v-1h3v1h1v-1h1v1h8v-1h1v1h1v-1h3v1h4v-1h1v1h1v-1h1v2h1v-1h1v1h1v-1h2v-1h4v1h3v-1h4v-1h1v2h1v-1h1v1h2v-1h2v1h1v-2h1v2h2v-1h1v1h4v-1h1v1h2v-1h1v1h7v-1h2v1h1v-1h1v2h3v-2h1v1h1v-1h1v1h1v-1h1v-1h1v2h4v-1h1v1h8v-1h1v1h1v-1h1v1h3v-1h1v1h3v-1h1v-1h2v1h5v-1h1v2h1v-1h3v-1h1v1h1v1h2v-1h3v1h6v-1h1v1h1v-1h1v1h2v-1h1v1h2v-1h1v1h4v-1h3v1h4v-1h2v1h1v-1h1v1h7v-1h1v1h4v-1h1v1h1v-2h1v1h2v-1h1v1h1v-1h1v2h3v-1h2v1h5v-1h1v1h2v-1h2v1h5v-2h1v2h5v-1h1v1h5v-1h2v1h1v-1h1v1h1v-1h1v1h4v-1h1v1h2v-1h1v1h2v-1h3v1h3v-2h1v1h3v-1h1v2h3v-1h1v1h2v-1h1v1h4v-1h2v1h1v-1h1v1h1v-1h1v1h1v-1h2v1h2v-1h1v1h1v-1h1v1h4v-1h1v1h1v-1h1v1h3v-1h1v1h1v-1h1v1h4v-1h1v1h1v-1h1v-1h1v1h1v-1h1v1h1v1h1v-1h3v1h3v-1h1v1h3v-1h1v1h2v-1h1v1h2v-1h1v1h2v-1h3v1h6v-1h1v1h1v-1h1v1h1v-1h1v1h1v-1h2v1h1v-1h1v1h3v-1h1v1h3v-1h1v1h1v-1h1v-1h1v2h3v-1h2v1h1v-2h1v1h4v-1h1v1h2v1h1v-1h3v1h1v-1h1v1h9v-1h2v1h2v-1h2v1h1v-2h1v2h4v-1h1v-1h1v2h3v-1h2v1h4v-1h1v-1h1v1h1v-1h1v1h1v1h1v-2h2v1h1v1h7v-1h1v1h2v-1h1v1h3v-2h1v1h3v-1h1v2h1v-1h4v1h4v-1h2v1h2v-1h1v1h2v-1h1v1h2v-1h1v1h2v-1h1v1h2v-1h2v1h4v-1h1v1h1v-1h9v-1h1v2h2v-2h1v1h1v1h2v-2h1v1h1v1h2v-1h4v1h1v-1h1v1h3v-1h1v1h6v-1h1v1h5v-1h1v1h2v-1h1v1h1v-1h1v1h1v-1h1v1h1v-1h2v1h3v-1h1v1h1v-1h1v1h1v-1h1v1h2v-1h1v1h3v-2h1v2h4v-1h1v1h1v-1h1v1h2v-1h1v1h1v-1h1v1h3v-1h1v1h6v-1h1v1h1v-1h1V794h-1v-1h-2v1h-1v1h-1v-2h-2v1h-1v-1h-3v1h-1v-1h-1v1h-1v-1h-1v1h-2v-1h-4v2h-1v-2h-5v1h-1v-1h-5v1h-1v-1h-1v1h-3v-1h-1v1h-3v-1h-2v1h-1v-1h-7v2h-2v-1h-1v-1h-3v1h-1v-1h-1v1h-2v-1h-2v1h-1v-1h-1v1h-3v-1h-2v1h-1v-1h-2v1h-1v-1h-2v2h-2v-1h-2v-1h-3v1h-1v-1h-2v1h-2v-1h-1v1h-1v-1h-3v1h-1v-1h-1v1h-1v-1h-1v1h-1v-1h-4v1h-3v-1h-2v1h-4v-1h-1v1h-1v-1h-2v1h-1v-1h-3v1h-2v-1h-5v1h-1v-1h-1v1h-1v-1h-3v1h-1v-1h-1v1h-3v-1h-2v1h-2v-1h-2v1h-1v-1h-1v1h-1v-1h-1v1h-1v-1h-2v1h-1v-1h-3v1h-2v-1h-3v1h-1v-1h-1v1h-3v-1h-1v1h-1v-1h-4v1h-1v-1h-1v1h-3v-1h-4v1h-3v-1h-2v1h-2v1h-1v-1h-1v-1h-1v1h-1v-1h-1v1h-3v-1h-2v-1h-3v1h-2v-1h-3v2h-1v-1h-2v1h-1v-1h-4v1h-1v-1h-1v1h-1v-1h-7v1h-1v-1h-2v2h-1v-2h-5v1h-2v-1h-8v1h-2v-1h-1v1h-1v-1h-1v1h-1v-1h-2v1h-1v-1h-5v1h-1v-1h-2v1h-1v-1h-2v1h-1v-1h-2v1h-3v-1h-4v1h-2v-1h-7v1h-1v-1h-1v1h-1v-1h-1v1h-2v-1h-2v1h-1v-1h-5v1h-1v-1h-2v1h-1v-1h-1v1h-2v-1h-1v1h-1v-1h-2v1h-1v-1h-3v1h-2v-1h-3v2h-1v-2h-2v1h-5v-1h-1v1h-1v-1h-2v1h-6v-2h-4v1h-1v-1h-2v1h-1v-1h-3v1h-4v1h-1v-1h-1v1h-1v-1h-1v1h-1v1h-2v-1h-2v1h-1v-2h-1v1h-2v-1h-4v1h-1v-1h-2v1h-2v-1h-5v1h-1v-1h-4v1h-1v-1h-1v1h-1v-1h-2v1h-1v-1h-1v1h-1v-1h-4v1h-1v-1h-2v1h-1v-1h-3v1h-1v-1h-2v1h-3v-1h-4v1h-1v-1h-3v-1h-1v1h-1v-1h-3v1h-1v1h-4v-1h-2v1h-1v-1h-3v1h-1v-1h-1v1h-1v-1h-5v-1h-4v1h-1v-1h-4v1h-2v1h-1v-2h-5v1h-1v-1h-2v1h-1v1h-1v-1h-1v1h-1v-1h-2v1h-1v-1h-3v1h-1v-1h-10v1h-1v-1h-1v1h-1v-1h-1v1h-1v-1h-2v1h-1v1h-1v-1h-3v-1h-2v1h-1v-1h-1v1h-2v-1h-1v1h-1v-1h-2v1h-1v-1h-5v1h-1v-1h-1v1h-1v-1h-1v1h-2v-1h-5v1h-2v-1h-1v1h-1v-1h-2v2h-2v-1h-2v-1h-2v1h-1v-1h-1v1h-2v-1h-5v1h-1v-1h-8v1h-1v-1h-3v2h-1v-2h-1v1h-1v-1h-5v-1h-3v2h-4v1h-1v-2h-2v1h-1v-1h-1v1h-1v-1h-2v1h-1v-1h-2v2h-1v-2h-1v1h-7v1h-1v-1h-1v-1h-3v2h-1v-2h-1v2h-1v-2h-1v1h-2v-1h-4v1h-1v-1h-3v1h-1v-1h-3v1h-1v-1h-2v1h-1v-1h-5v1h-1v-1h-1v1h-1v1h-1v-2h-1v1h-1v-1h-1v2h-1v-2h-1v1h-2v-1h-1v2h-1v-2h-1v2h-1v-2h-5v1h-1v1h-1v-1h-1v1h-2v-1h-4v-1h-3v1h-2v-1h-2v1h-1v-1h-9v1h-2v-1h-3v1h-1v-1h-2v1h-2v-1h-2v1h-1v-1h-3v1h-1v-1h-1v1h-1v-1h-1v1h-1v-1h-5v-1h-1v1h-1v-1h-2v1h-3v1h-2v-1h-1v1h-1v-1h-1v1h-1v-1h-2v1h-3v1h-1v-2h-2v1h-1v1h-1v-2h-4v1h-1v-1h-1v1h-1v1h-1v-2h-6v1h-2v-1h-2v1h-2v-1h-3v1h-2v-1h-4v1h-2v-1h-3v1h-1v-1h-2v1h-1v-1h-4v1h-2v-1h-1v1h-1v-1h-3v1h-1v-1h-3v1h-1v-1h-1v1h-2v-1h-1v2h-1v-2h-2v1h-1v1h-1v-2h-2v1h-1v-1h-3v1h-1v-1h-3v1h-1v-1h-2v1h-1v-1h-2v1h-1v-1h-5v1h-1v-1h-1v1h-3v-1h-6v2h-1v-2h-1v1h-2v-1h-4v1h-1v-1h-2v1h-1v-1h-6v1h-1v-1h-4v2h-2v-1h-1v-1h-11v2h-1v-2h-2v1h-2v-1h-1v1h-1v-1h-1v1h-3v-1h-2v2h-1v-1h-1v-1h-4v2h-1v-2h-3v1h-1v-1h-2v1h-1v-1h-2v1h-2v-1h-1v1h-2v-1h-2v1h-1v-1h-3v1h-1v-1h-1v1h-1v-1h-2v1h-1v-1h-2v2h-1v-2h-1v1h-2v-1h-6v1h-1v-1h-2v1h-1v-1h-1v2h-1v-2h-1v1h-1v-1h-8v2h-1v-1h-1v-1h-2v1h-1v-1h-4v1h-1v-1h-2v1h-2v-1h-2v1h-2v-1h-1v1h-1v-1h-1v1h-2v-1h-4v1h-1v1h-1v-2h-3v1h-1v-1h-7v1h-1v-1h-3v1h-1v-1h-1v1h-3v-1h-4v1h-1v-1h-1v1h-2v-1h-3v2h-1v-2h-8v1h-2v-1h-8v1h-2v-1h-1v1h-1v-1h-1v1h-1v-1h-1v1h-1v-1h-5v1h-2v-1h-2v2h-1v-2h-2v1h-3v-1h-1v1h-1v-1h-7v2h-1v-2h-1v1h-1v-1h-2v2h-1v-2h-1v1h-2v-1h-2v1h-1v-1h-2v2h-1v-1h-1v-1h-1v1h-1v-1h-12v2h-1v-2h-6v1h-2v-1h-2v-1h-1v1h-1v-1h-1v1h-1v-1h-1v2h-1v-1h-3v1h-2v-1h-1v1h-1v-1h-5v2h-1v-2h-3v1h-1v-1h-6v1h-1v-1h-1v2h-1v-1h-2v-1h-1v1h-1v-1h-3v1h-1v-1h-3v1h-1v-1h-2v1h-1v1h-1v-1h-2v-1h-2z"/>
<path d="M277 821h3v-2h1v1h1v-1h4v1h1v-1h2v1h1v-1h1v1h2v-1h1v1h1v-1h2v1h4v-1h1v1h1v-2h1v2h1v-1h1v1h5v-1h1v1h1v-1h2v1h3v-1h1v1h5v-1h1v1h1v-1h3v1h1v-1h2v-1h1v1h3v1h1v-1h1v1h1v-1h1v-1h1v2h2v-1h1v1h6v-1h1v1h4v-1h1v1h2v-1h1v1h1v-1h1v1h2v-1h1v1h6v-1h2v1h4v-1h1v1h3v-1h1v-1h1v2h2v-1h1v1h2v-1h4v1h8v-1h1v1h1v-1h1v1h2v-1h1v1h1v-1h1v-1h1v1h3v1h3v-1h1v1h4v1h1v-1h2v1h3v-2h1v1h3v-1h1v1h2v-1h1v1h1v-1h2v1h2v-1h5v1h2v-1h1v1h3v-1h1v1h1v-1h2v1h2v-1h1v1h4v-2h1v1h1v1h2v-1h1v1h3v1h1v-2h1v2h4v-1h2v1h2v-1h1v1h3v-2h1v1h1v-1h1v1h3v-1h2v1h3v-1h1v1h3v-1h2v-1h1v1h1v1h1v-1h1v1h1v-1h1v1h1v-1h1v1h4v-1h2v1h1v-1h1v1h2v-1h2v1h3v-1h2v1h2v1h2v-1h1v1h4v-2h1v2h1v-1h1v-1h2v1h3v-1h2v1h1v-1h1v1h3v-1h1v1h3v-1h3v1h1v1h8v-1h1v1h1v-1h1v-1h1v1h3v-1h1v1h4v-1h2v1h4v-1h1v1h1v-1h1v1h1v-1h1v1h4v-1h2v1h3v-1h1v1h4v-2h1v2h3v-1h1v1h4v-1h1v1h1v-1h2v1h2v-1h1v1h6v-1h1v1h1v-1h1v-1h1v2h1v-1h1v1h2v-1h1v1h1v-1h2v1h1v-1h1v1h2v-1h3v1h2v-1h2v1h3v-1h2v1h6v-1h1v1h3v-1h1v1h4v1h1v-1h1v1h5v-1h1v1h3v-2h1v1h11v-1h1v1h3v-1h2v1h7v-1h4v1h3v-1h2v1h5v-1h2v1h1v-1h1v1h3v-1h2v1h7v-1h2v1h2v-1h2v1h9v-2h1v1h2v1h1v-1h1v1h1v-1h4v1h1v-1h1v1h7v-1h3v1h1v-1h1v1h1v-1h1v1h1v-1h2v1h4v-1h1v1h1v-1h1v-1h2v-1h1v1h5v1h1v1h1v1h1v-1h3v-1h3v1h4v-1h1v1h1v-2h1v2h2v-1h1v1h4v1h5v-1h2v-1h1v1h2v-1h1v1h1v-1h1v1h2v-1h1v1h4v-1h1v1h4v-1h2v1h3v-1h1v1h1v-1h1v1h1v-1h1v-1h1v3h1v-1h1v1h8v-1h2v1h2v-1h2v1h1v-1h6v-2h1v1h2v1h5v-1h2v1h2v-1h2v1h1v-1h4v1h2v-1h1v1h3v-1h1v1h2v1h1v-1h2v-1h1v1h1v-2h1v1h1v1h7v-1h1v1h1v-1h1v-1h1v2h4v-1h1v1h1v-1h1v1h1v-1h2v1h5v-1h1v1h1v-1h4v1h1v-2h3v1h1v-1h2v1h4v1h7v-1h1v1h1v-1h1v1h2v-1h1v1h5v-1h1v1h3v-1h1v1h1v-1h1v-1h1v1h1v1h2v-1h1v1h2v-1h1v1h3v-1h2v1h4v-1h1v1h2v-1h1v1h1v-1h1v1h4v-2h1v2h1v-2h1v1h3v1h2v-1h1v1h1v-1h2v1h2v-1h1v-1h1v1h2v1h7v-1h1v1h5v-1h1v1h1v-1h1v1h1v-2h1v2h15v1h1v-1h2v1h5v-1h1v-1h2v1h1v-1h1v1h11v-1h1v1h4v-1h1v1h2v-1h1v1h1v-2h3v1h1v1h1v-1h1v-1h1v2h1v-1h2v1h2v-1h1v1h3v-1h1v1h3v-1h1v1h4v-1h1v1h1v-1h1v1h1v-1h1v1h2v-1h1v1h4v-1h1v1h2v-1h3v1h1v-1h2v1h4v-1h2v2h1v-1h1v1h1v-1h1v-1h3v1h3v-1h2v1h1v-1h2v1h1v-1h2v1h4v-1h4v1h1v-1h1v1h8v-1h1v1h4v-1h1v1h2v-1h1v1h2v-1h2v1h1v-2h1v2h2v-1h5v1h7v-1h4v1h2v-1h2v1h4v-1h1v1h2v-1h1v1h5v-1h3v1h10v-1h4v1h4v-2h1v2h1v-2h1v2h1v-1h1v1h9v-1h1v1h5v-1h2v1h2v-1h1v-1h1v2h4v-1h1v1h4v-1h2v1h1v-1h2v1h1v-1h1v1h2v-1h1v1h1v-1h2v1h1v-1h1v1h3v-1h1v1h2v-2h1v2h1v1h2v-1h2v-1h1v2h1v-1h1v1h5v-1h1v1h3v-1h2v-1h1v2h4v-2h1v1h1v-1h1v1h6v-1h1v1h1v-1h2v1h1v-1h1v1h2v-1h3v1h1v-2h1v2h1v-1h3v1h3v-1h1v1h3v-1h2v1h1v-1h1v1h2v-1h1v1h3v-1h1v1h1v-1h1v1h3v-1h1v1h6v-1h1v1h3v-1h2v1h1v-1h1v1h2v-1h1v1h3v-2h1v2h1v-1h1V824h-3v1h-1v-1h-1v1h-1v-1h-2v1h-2v-1h-7v1h-2v-1h-3v1h-1v-1h-3v-1h-3v1h-1v1h-1v-2h-1v1h-1v-1h-4v1h-4v1h-1v-1h-7v2h-1v-2h-1v1h-2v-1h-5v1h-1v-1h-3v1h-2v-1h-1v1h-3v-1h-3v1h-1v-1h-2v1h-2v-1h-2v1h-1v-1h-1v1h-1v-1h-1v1h-2v-1h-5v1h-2v-1h-2v1h-1v-1h-1v1h-2v-1h-2v1h-1v-1h-3v1h-1v-1h-7v1h-4v-1h-1v1h-1v-1h-1v1h-3v-1h-1v1h-1v-1h-1v-1h-1v2h-1v-2h-1v1h-1v-1h-3v1h-1v1h-2v-1h-3v1h-1v-1h-1v1h-1v-1h-1v1h-1v-1h-1v2h-1v-1h-1v-1h-2v1h-3v-1h-3v1h-1v-1h-2v1h-1v1h-1v-2h-4v1h-1v-1h-1v1h-1v-1h-6v1h-1v1h-1v-1h-1v-1h-2v1h-1v-1h-5v1h-6v-1h-2v1h-1v-1h-2v1h-1v-1h-5v1h-1v-1h-1v1h-1v-1h-4v1h-1v-1h-5v2h-1v-2h-3v1h-2v-1h-1v1h-4v-1h-1v1h-1v-1h-1v1h-3v-1h-2v1h-1v-1h-5v1h-1v-1h-3v1h-1v-1h-2v1h-1v-1h-4v1h-1v1h-1v-2h-3v2h-1v-2h-1v1h-2v1h-1v-2h-6v1h-1v1h-1v-2h-1v1h-3v-1h-2v1h-3v-1h-2v1h-2v-1h-2v-1h-7v1h-1v1h-4v-1h-4v1h-1v-1h-5v1h-3v-1h-3v1h-2v-1h-2v1h-1v-1h-4v1h-1v-1h-3v1h-2v-1h-1v2h-1v-2h-1v1h-1v1h-2v-2h-4v1h-1v-1h-1v1h-1v-1h-2v1h-1v-1h-1v1h-2v-1h-1v1h-2v-1h-11v1h-1v-1h-4v2h-1v-2h-3v1h-1v-1h-1v1h-1v-1h-2v1h-1v-1h-1v1h-1v-1h-2v1h-1v-1h-1v1h-2v-1h-2v1h-1v-1h-1v1h-1v-1h-4v1h-6v-1h-1v2h-1v-1h-1v-1h-2v2h-1v-2h-2v1h-3v-1h-3v1h-1v-1h-5v1h-1v-1h-2v1h-1v-1h-2v1h-1v-1h-1v1h-3v1h-1v-2h-4v1h-2v-1h-2v1h-3v-1h-1v1h-1v-1h-1v1h-1v1h-1v-2h-5v1h-2v-1h-1v1h-1v1h-3v-1h-1v1h-3v-1h-1v-1h-2v1h-1v-1h-2v1h-2v-1h-2v1h-2v-1h-1v-1h-1v1h-1v-1h-3v1h-3v1h-2v-1h-2v1h-1v-1h-1v1h-1v-1h-1v1h-1v-1h-2v1h-2v-1h-1v1h-3v-1h-1v1h-2v-1h-9v1h-1v-1h-2v1h-2v-1h-1v1h-1v-1h-1v1h-1v-1h-1v1h-2v-1h-5v1h-1v-1h-2v1h-1v-1h-2v1h-1v-1h-2v2h-1v-1h-1v-1h-1v1h-1v-1h-4v1h-1v-2h-1v1h-2v1h-1v-2h-1v1h-1v-1h-2v2h-2v-1h-6v1h-4v-2h-3v1h-1v-1h-1v2h-1v-2h-1v1h-1v-1h-4v1h-1v1h-3v-1h-1v1h-1v-1h-2v1h-1v-1h-2v1h-2v-1h-2v1h-1v-1h-1v1h-1v-1h-4v2h-1v-2h-8v1h-1v-1h-1v1h-3v1h-4v-1h-3v-1h-2v1h-2v-1h-1v1h-1v-1h-3v1h-1v-1h-1v1h-1v-1h-1v1h-1v-1h-3v1h-2v-2h-1v1h-1v-1h-1v1h-1v-1h-1v1h-1v-1h-1v1h-4v1h-1v-1h-4v1h-1v-1h-5v1h-2v-1h-2v1h-2v-1h-3v1h-2v-1h-2v1h-1v-1h-2v1h-1v-1h-2v1h-2v-1h-1v1h-1v-1h-3v1h-4v-1h-1v1h-1v-1h-1v1h-1v-1h-3v1h-1v-1h-1v1h-1v-1h-1v-1h-2v1h-1v-1h-2v1h-1v1h-1v-1h-2v1h-2v-1h-6v1h-1v-1h-1v1h-1v-1h-7v1h-2v-1h-4v2h-1v-2h-2v1h-1v-1h-5v2h-1v-2h-1v1h-1v-1h-2v1h-3v-1h-4v1h-1v-1h-4v1h-1v-1h-1v2h-1v-2h-1v2h-1v-2h-4v1h-1v-1h-4v-1h-1v1h-1v-1h-2v1h-1v1h-1v-1h-3v1h-2v-1h-2v1h-2v-1h-2v1h-4v-1h-3v1h-1v-1h-1v1h-1v-1h-3v1h-1v-1h-1v1h-1v-1h-2v1h-1v-1h-5v1h-2v-1h-1v1h-2v-1h-1v1h-1v-1h-11v1h-1v-1h-4v1h-2v-1h-1v1h-3v-1h-1v1h-3v-1h-2v1h-1v-1h-7v1h-1v-1h-1v1h-1v-1h-2v1h-1v-1h-1v1h-1v-1h-4v-1h-3v1h-2v1h-2v-1h-3v1h-2v-1h-1v1h-2v-1h-5v1h-2v-1h-1v1h-1v-1h-2v1h-2v-1h-10v1h-1v-1h-4v1h-1v-1h-2v-1h-3v1h-2v1h-3v-1h-1v1h-1v-1h-1v1h-1v-1h-6v1h-2v-1h-3v1h-1v-1h-8v1h-3v-1h-1v1h-1v-1h-1v1h-8v-1h-1v1h-2v-1h-4v1h-1v-1h-2v1h-1v-1h-5v1h-1v-1h-2v1h-1v-1h-2v1h-3v-2h-5v2h-1v-1h-1v1h-1v-1h-1v1h-1v-1h-9v1h-1v-1h-1v2h-1v-2h-2v1h-2v-1h-1v1h-1v-1h-4v1h-4v-1h-6v1h-1v-1h-2v2h-1v-2h-6v2h-1v-2h-3v1h-1v-1h-3v1h-1v-1h-1v1h-1v-1h-4v1h-1v-1h-2v1h-1v-2h-4v2h-1v-2h-1v1h-2v1h-2v-1h-1v1h-1v-1h-2v1h-2v-1h-6v1h-1v-1h-2v2h-1v-1h-2v-1h-2v1h-1v-1h-3v1h-1v-1h-1v1h-1v-1h-1v1h-1v-1h-4v1h-2v-1h-1v1h-1v-1h-1v1h-1v-1h-3v1h-1v-1h-3v1h-1v-1h-4v1h-1v-1h-1v1h-1v-1h-1z"/>
<path d="M277 850h2v-1h1v1h1v-1h1v1h1v-1h2v1h1v-1h1v1h1v-1h1v1h2v-1h2v1h1v-1h1v1h2v-1h1v1h1v-1h2v1h7v-1h1v1h3v-1h3v1h4v-1h2v1h2v-1h1v1h4v-1h2v1h1v-1h2v1h1v-1h1v1h6v-1h3v1h9v-1h1v1h4v-1h2v1h2v-1h2v1h1v-1h1v1h3v-1h1v1h2v-1h1v1h1v-1h3v1h1v-1h1v1h1v-1h5v1h2v-2h1v1h2v1h1v-1h1v1h3v-1h3v1h3v-1h1v1h5v-2h1v2h4v-1h1v1h1v-1h1v1h1v-1h1v1h6v-1h1v1h5v-1h2v1h1v1h1v-2h1v2h2v-2h2v1h1v-1h1v1h2v-1h3v1h3v-1h2v1h3v-1h1v1h1v-1h1v1h1v-1h2v1h2v-1h1v1h3v-1h1v1h4v-1h1v1h1v-2h1v2h7v-1h3v1h3v-1h3v1h1v-2h1v1h1v-1h1v2h1v-1h1v1h4v-1h2v1h14v-1h1v1h3v-1h1v1h2v-1h1v1h1v-1h1v1h5v-1h1v-1h1v2h3v-3h1v2h1v-1h1v1h2v1h2v-1h1v1h1v-1h1v1h6v1h2v-1h5v1h1v-1h1v-1h1v1h1v-1h1v1h1v-1h2v1h8v-1h2v1h3v-1h1v1h1v-1h1v1h1v-1h2v1h1v-2h2v1h5v-1h3v1h1v-1h2v1h3v-1h2v1h3v-1h1v1h3v-1h3v1h1v1h1v-2h1v2h3v-1h6v1h11v-1h3v1h1v-1h1v1h1v-1h1v1h2v-1h1v1h1v-1h1v1h2v-1h1v1h5v-1h1v1h6v-1h3v1h2v-1h1v1h1v-1h1v1h2v-1h1v1h1v-1h1v1h2v-1h1v1h7v-1h1v1h2v-1h2v1h1v-2h1v1h3v-1h1v1h3v1h3v-1h2v1h1v-2h1v2h2v-1h2v1h2v-1h1v1h3v-1h3v-1h1v1h1v1h1v-1h1v1h1v-1h1v1h2v-1h2v1h1v1h4v-2h1v1h2v-1h1v1h1v-1h2v-1h1v2h11v-1h1v1h2v-1h1v1h1v-1h1v1h1v-1h1v1h5v-1h1v1h1v-1h2v1h1v-1h1v1h1v-1h4v1h2v-1h1v1h4v-1h1v-1h4v1h1v1h6v-1h2v-1h1v1h1v1h1v-1h1v1h1v1h1v-1h1v1h2v-1h1v1h6v-1h1v-1h1v2h1v-1h3v-1h1v1h1v-1h1v1h1v-1h1v1h2v-1h1v1h10v-2h1v2h3v-1h1v1h6v-1h1v1h5v-2h1v1h2v1h1v-1h1v-1h1v2h5v-1h2v1h3v-1h1v1h1v1h1v-2h1v2h1v-1h1v-1h2v1h3v-1h1v1h6v-1h1v-1h1v2h3v-1h2v1h2v-1h1v1h4v-1h1v1h2v-1h1v1h3v-1h1v1h1v-1h1v1h3v-1h1v1h2v-1h1v1h1v-1h4v-1h1v1h2v1h3v-1h1v1h1v-1h1v-1h1v2h2v-1h1v1h1v-1h1v1h3v-1h1v1h3v-1h3v1h1v-1h2v1h7v-2h1v2h10v-1h1v-1h1v2h10v-1h1v1h7v-1h2v-1h1v1h2v1h1v-1h1v1h1v-1h1v1h6v-1h1v1h2v-1h2v-1h1v1h7v-1h1v1h1v1h1v-1h1v-1h1v2h3v-1h1v1h2v1h3v-1h1v1h2v-1h4v-1h2v1h2v-1h1v1h1v-1h1v1h2v-1h1v1h3v-1h1v1h1v-1h1v1h1v-1h1v1h7v-2h2v1h1v1h2v-1h2v1h1v-1h1v1h5v-1h1v1h1v-1h3v1h3v-2h1v2h4v-1h1v1h1v-1h3v1h2v1h1v-1h1v1h2v-1h2v1h6v-2h3v1h1v-1h1v1h1v-1h2v1h8v-1h1v1h1v-1h1v1h1v-2h1v2h5v-1h1v1h7v-1h2v1h3v-2h1v2h3v-1h2v1h2v-1h1v1h2v-1h1v-1h4v1h1v-1h2v1h4v-2h1v1h1v1h2v-2h1v2h2v-1h1v1h1v-1h1v1h4v-1h3v1h1v1h4v-1h1v1h3v-2h1v2h1v-1h1v1h4v-1h1v1h2v-1h1v1h4v-1h1v1h8v-1h1v1h1v-1h1v1h1v-1h1v1h2v-1h1v1h2v-1h1v1h3v-1h2v1h3v-1h1v1h2v-1h1v1h4v-1h1v1h6v-1h1v1h4v-1h1v-1h2v-1h2v1h1v-2h1v2h3v1h1v1h6v1h2v-1h1v1h1v-2h1v1h1v1h1v-1h2v1h2v-1h1v1h1v-1h1v1h4v-1h3v-1h2v1h2v-1h6v1h1v-1h1v-1h1v2h4v-1h1v1h1v-1h5v1h1v-1h2v1h6v-1h1v1h3v-1h2v1h4v-1h1v1h3v-1h6v1h1v-1h1v1h4v-1h2v1h1v-1h1v1h2v-1h1v-1h1v2h1v-1h1v1h3v-1h1v1h3v-1h1v1h2v-1h1v1h11v-1h4v1h1v-1h1v1h2V854h-3v1h-2v-1h-1v1h-1v-1h-4v1h-1v-1h-4v1h-1v-1h-1v1h-2v-1h-2v1h-1v-1h-1v2h-1v-2h-3v1h-1v-1h-1v1h-1v-1h-6v1h-2v-1h-1v2h-1v-2h-1v1h-1v-1h-17v1h-2v-1h-1v1h-1v-1h-1v2h-1v-1h-1v-1h-3v1h-2v-1h-1v1h-1v-1h-3v1h-1v-1h-6v1h-2v-1h-3v1h-2v-1h-4v1h-2v-1h-1v1h-1v-1h-2v1h-1v-1h-3v1h-2v-1h-4v1h-2v-1h-14v3h-2v-2h-1v1h-2v1h-4v-1h-1v-2h-1v1h-1v-1h-5v1h-1v-1h-3v1h-2v-1h-2v1h-3v-1h-2v1h-1v-1h-2v-1h-4v1h-1v-1h-1v1h-2v1h-1v-1h-1v1h-1v-1h-1v1h-1v-1h-1v1h-1v-1h-1v1h-1v-1h-3v1h-1v-1h-2v1h-1v-1h-5v1h-3v-1h-3v1h-1v-1h-4v1h-1v-1h-1v1h-1v-1h-1v1h-2v-1h-2v2h-6v-1h-1v1h-1v-1h-1v1h-1v-1h-2v1h-2v1h-1v-2h-3v1h-1v-1h-1v1h-1v-1h-1v1h-2v-1h-7v1h-1v-1h-3v1h-2v1h-1v-1h-1v-1h-2v1h-3v-1h-2v1h-2v-1h-2v1h-2v-1h-3v-1h-1v1h-1v-1h-3v1h-1v-1h-3v1h-1v-1h-2v1h-2v-1h-2v1h-7v1h-1v-2h-1v1h-1v-1h-4v1h-1v-1h-7v1h-2v-1h-1v1h-1v-1h-1v1h-1v-1h-6v1h-3v-2h-19v1h-2v1h-3v-1h-1v1h-1v-1h-1v1h-1v-1h-2v1h-1v-1h-2v1h-1v-1h-3v1h-1v-1h-2v1h-1v-1h-5v1h-1v-1h-1v1h-1v-1h-4v1h-1v-1h-5v1h-1v-1h-2v1h-1v-1h-8v1h-1v-1h-2v1h-2v-1h-4v1h-1v-1h-4v-1h-1v1h-1v1h-1v-2h-2v1h-1v1h-1v-1h-2v1h-1v-1h-2v1h-1v-1h-2v1h-1v-1h-2v2h-1v-2h-5v1h-1v-1h-1v1h-2v-1h-2v1h-2v-1h-1v1h-1v-1h-2v1h-2v1h-3v-2h-4v1h-3v-1h-7v1h-1v-1h-11v1h-1v-1h-2v1h-3v2h-1v-2h-1v-2h-1v1h-1v-1h-4v1h-1v-1h-2v2h-1v-1h-2v-1h-1v1h-2v1h-1v-1h-3v1h-1v-1h-3v1h-2v-1h-2v1h-1v-1h-1v1h-2v-2h-1v2h-2v-2h-1v1h-2v-1h-1v2h-1v-1h-10v1h-2v-1h-3v1h-2v-1h-5v1h-1v-1h-1v1h-1v-1h-3v1h-1v-1h-4v1h-1v-1h-1v1h-1v-1h-7v1h-2v-1h-6v1h-1v-1h-1v-1h-3v1h-1v1h-1v-1h-1v-1h-3v2h-1v-1h-1v1h-4v-1h-1v1h-1v-1h-8v1h-2v-1h-2v1h-2v-1h-5v1h-2v1h-1v-2h-2v1h-1v1h-2v-1h-3v-1h-8v1h-1v-1h-2v1h-2v-1h-1v2h-1v-1h-1v-1h-1v1h-1v-1h-1v1h-1v-1h-2v1h-2v-1h-1v2h-1v-2h-1v1h-2v-1h-1v1h-1v-1h-1v1h-3v-1h-3v1h-1v-1h-3v1h-2v1h-1v-2h-1v1h-1v-1h-6v1h-2v-1h-2v1h-1v-1h-2v1h-2v-1h-3v1h-2v-1h-1v1h-1v-1h-2v1h-2v-1h-3v1h-2v-1h-4v1h-1v1h-1v-2h-4v1h-1v-1h-1v1h-2v-1h-1v2h-1v-2h-2v1h-1v-1h-1v1h-1v-1h-2v1h-2v-1h-2v1h-1v-1h-2v1h-1v-1h-2v1h-1v-2h-1v2h-1v-1h-1v-1h-1v2h-1v-2h-1v1h-1v-1h-2v2h-1v-2h-6v1h-1v1h-1v-1h-6v1h-1v-1h-2v1h-1v-1h-5v1h-1v-2h-2v1h-1v-1h-1v1h-2v1h-2v-1h-1v1h-2v-1h-2v1h-1v-1h-3v1h-1v-1h-3v1h-1v-1h-1v1h-2v1h-1v-1h-1v-1h-2v1h-1v-1h-2v1h-1v-1h-4v2h-1v-2h-2v1h-1v-1h-5v1h-1v-1h-6v1h-2v-1h-2v1h-1v-1h-8v1h-1v-1h-1v1h-1v-1h-2v1h-2v-1h-2v1h-1v-1h-1v1h-1v-1h-4v1h-2v-1h-10v1h-1v-1h-2v1h-1v-1h-3v1h-1v1h-1v-1h-4v-1h-3v1h-2v-1h-5v1h-1v-1h-1v1h-2v-1h-2v1h-1v-1h-1v1h-1v-1h-11v1h-3v-1h-2v1h-1v1h-1v-1h-2v-1h-1v1h-1v-1h-2v1h-2v-1h-1v1h-1v-1h-2v-1h-4v1h-1v1h-2v-1h-5v2h-1v-2h-13v1h-1v-1h-2v1h-3v-1h-2v1h-1v-1h-5v1h-1v-1h-3v1h-3v-1h-5v1h-1v-1h-1v2h-1v-2h-1v1h-1v-1h-2v1h-5v1h-1v-2h-2v1h-2v-1h-8v1h-1v-1h-2v1h-1v-1h-7v1h-1v-1h-1v1h-1v1h-2v-1h-3v1h-1v-1h-2v1h-2v-2h-1v1h-1v-1h-9v1h-1v-1h-5v1h-2v-1h-1v1h-1v1h-2v-2h-1v1h-1v-1h-1v1h-4v-1h-1v1h-2v-2h-1v1h-6v1h-2v-1h-4v1h-1v-1h-2v1h-1v-1h-1v1h-1v-1h-5v1h-1v-1h-2v1h-1v-1h-2v1h-5v-1h-1v1h-2v-1h-1v1h-1v-1h-1v1h-1v1h-1v-2h-1v1h-2v-1h-1v1h-1v-1h-3v1h-1v-1h-3v2h-1v-2h-4v1h-1v-1h-3v1h-1v-1h-4v1h-1v-1h-3z"/>
<path d="M277 880h2v-1h1v1h9v-1h2v1h1v-1h3v1h2v-1h1v1h2v-1h1v1h2v-1h1v1h1v-1h1v1h2v-1h2v1h1v-1h1v1h2v-2h1v1h1v1h2v-1h1v1h1v-1h2v1h3v-1h1v1h3v-1h2v1h1v-1h1v1h7v-1h1v1h5v-1h1v1h3v-1h1v-1h1v1h1v1h4v-1h1v1h7v-1h1v1h13v-2h1v1h1v1h1v1h1v-2h1v2h4v-1h3v-1h3v1h6v-1h3v1h6v-1h1v1h4v-1h1v1h2v-1h1v1h4v-1h1v1h2v-1h1v1h1v-1h2v1h2v-1h1v1h8v-1h1v1h1v-1h1v1h11v-1h1v1h1v-1h1v1h2v-1h1v1h2v-1h1v1h4v-1h7v1h2v-1h1v1h2v-1h1v1h3v-1h1v1h4v-1h1v1h1v-1h3v2h2v-1h2v-1h1v1h1v-1h1v1h1v-1h2v1h1v-1h2v1h1v-1h1v1h1v-1h1v1h11v-1h1v1h1v-1h1v1h4v-1h3v1h1v-1h1v1h1v-1h2v1h3v-1h1v-1h2v1h2v1h2v-1h1v1h3v-1h1v1h6v-1h1v1h2v-1h1v1h3v-2h1v2h1v-1h1v-1h1v1h1v1h1v-2h1v2h3v-1h2v1h4v-1h3v1h1v-1h1v1h2v-1h6v1h2v-1h2v1h4v-1h2v1h1v-1h1v1h19v-2h1v2h3v-1h1v1h2v-1h1v1h2v-1h1v1h8v-1h1v1h1v-1h1v1h1v-1h1v1h1v-1h1v1h2v-2h1v2h5v-2h1v2h1v-1h1v1h1v-1h1v1h1v-2h1v2h1v-1h1v1h2v-1h3v1h3v-1h1v-1h1v2h1v-1h2v1h3v-1h1v-1h1v1h1v-1h1v2h6v-1h1v1h8v-1h1v1h1v-1h1v1h3v-1h1v1h1v-1h1v1h1v-1h1v1h4v-1h2v1h5v-1h1v1h2v-1h1v1h5v-2h1v1h3v1h2v-1h1v1h2v-1h1v1h1v-1h1v1h6v-1h1v1h1v-1h1v1h1v-1h1v1h2v-1h1v1h2v-1h2v-1h1v2h2v-1h1v-1h1v2h1v-1h1v1h2v-1h1v1h1v-1h2v1h4v-1h2v1h4v-1h1v1h1v-1h1v1h1v-1h1v1h1v-1h2v1h1v-1h1v1h2v-1h1v1h10v-2h1v2h3v-1h2v1h1v-1h1v1h2v-1h2v1h4v-1h1v1h2v-1h2v1h10v-1h1v1h3v-1h2v1h3v-1h1v1h2v-1h4v-1h2v2h2v-1h1v-1h1v2h2v-1h1v1h2v-1h3v1h2v-1h1v1h4v-1h3v1h2v-1h1v1h8v-1h4v1h2v-1h1v-1h1v1h1v-1h1v2h2v-1h1v1h4v-1h1v1h2v-1h3v1h1v-1h1v1h2v-1h1v1h1v-1h2v1h1v-1h4v1h10v-1h1v1h1v-1h2v1h2v-1h1v1h1v-1h1v1h3v1h2v-1h3v-1h1v1h6v-1h1v1h1v-1h2v1h1v-1h1v1h1v-1h2v1h1v-1h5v1h3v-1h2v1h4v-1h1v1h3v-1h1v1h3v1h7v-2h1v1h1v-1h2v1h1v-1h1v1h4v-1h2v1h2v-1h1v1h1v-1h3v1h1v-1h1v1h1v-1h1v1h1v-1h1v1h4v1h6v-1h1v1h1v-1h3v-1h2v1h1v-1h1v1h1v-1h2v1h3v-1h1v1h1v-1h1v1h2v-1h1v1h1v-1h2v1h4v-1h1v1h4v-1h2v1h2v-1h1v1h2v-1h1v1h1v-1h1v1h2v-1h1v1h7v-1h1v1h3v-1h2v1h1v-1h1v1h3v-1h1v1h1v-1h1v1h4v-2h1v1h2v1h5v-2h1v1h1v-1h1v1h2v-1h1v2h4v-1h1v1h3v-1h2v1h7v-2h1v2h1v-1h1v1h2v-1h1v1h3v-1h2v-1h1v1h2v-1h1v1h1v-1h5v2h6v-1h1v1h2v-1h1v1h1v-2h1v2h1v-1h1v1h1v-1h2v1h1v-1h1v1h1v-1h1v1h1v-1h6v1h4v-1h1v1h1v-1h1v1h4v-1h1v1h3v-1h1v1h6v-1h3v1h2v-1h2v1h1v-1h1v1h4v-1h1v1h4v-1h2v1h3v-1h1v1h1v-1h1v1h1v-1h1v2h2v-1h1v1h2v-2h1v1h4v-1h3v1h5v-1h1v1h1v-1h1v-1h1v2h7v-1h2v1h1v-1h1v1h1v-1h1v1h4v-1h2v1h1v-1h1v1h3v-1h2v1h2v-1h3v1h2v-1h1v1h3v-1h1v1h1v-2h1v2h2v-1h1v1h2v-1h1v1h2v-1h1v1h9v-1h2v1h1v-1h2v1h1v-1h1v1h4v-1h1v1h7v-1h1v1h18v-1h1v1h3v-1h1v1h2v-1h1v1h3v-1h1v1h14v-1h1v1h2v-1h3v1h2v-1h1v1h2v-2h1v2h1v-1h3v1h1v-1h1v1h3V884h-7v1h-1v-1h-2v1h-2v-1h-4v1h-4v1h-1v-1h-2v-1h-1v1h-1v-1h-5v1h-1v-1h-1v2h-1v-1h-3v-1h-1v1h-1v-1h-1v1h-2v-1h-1v1h-1v-1h-1v1h-1v-1h-2v1h-1v-1h-7v1h-1v-1h-7v1h-1v-1h-2v1h-1v-1h-7v1h-1v-1h-2v-1h-3v1h-2v1h-1v-1h-2v1h-1v-1h-2v1h-3v-1h-2v1h-2v-1h-1v1h-2v-1h-2v1h-1v-1h-3v1h-1v-1h-6v1h-2v-1h-2v1h-1v-1h-2v1h-1v-1h-4v1h-1v-1h-1v1h-1v-1h-4v1h-1v-1h-1v1h-1v-1h-1v1h-1v-1h-4v1h-2v-1h-1v1h-1v-1h-3v1h-2v-1h-2v1h-1v-1h-5v1h-2v-1h-1v2h-1v-2h-9v1h-1v-1h-1v1h-1v-1h-1v1h-3v-1h-1v1h-1v-1h-2v1h-2v-1h-1v1h-2v-1h-1v1h-1v-1h-3v1h-1v-1h-1v1h-1v-1h-2v1h-1v-1h-6v1h-1v-1h-7v1h-3v-1h-1v2h-1v-1h-2v-1h-2v1h-7v1h-1v-1h-1v1h-7v-1h-4v-1h-2v1h-3v-1h-2v1h-2v-1h-3v1h-1v-1h-3v1h-1v-1h-4v1h-2v-1h-4v1h-1v-1h-2v1h-1v-1h-3v1h-3v-1h-1v1h-2v-1h-3v1h-1v-1h-1v1h-2v-1h-1v1h-2v-1h-8v1h-2v-1h-1v1h-4v-1h-2v1h-1v-1h-19v1h-2v-1h-1v1h-4v-1h-2v1h-1v-1h-5v1h-1v-2h-2v1h-1v1h-1v-1h-3v1h-1v-1h-5v1h-1v-1h-1v2h-1v-1h-2v-1h-2v1h-1v-1h-1v1h-1v-1h-2v1h-2v-1h-2v1h-1v-1h-10v1h-3v-1h-3v1h-1v-1h-2v1h-1v-1h-2v1h-1v-1h-1v1h-1v-1h-1v1h-1v-1h-3v1h-1v-1h-2v1h-1v-1h-2v1h-1v-1h-4v1h-1v-1h-1v1h-1v-1h-4v1h-1v-1h-10v1h-1v-1h-1v2h-1v-1h-3v-1h-1v1h-1v-1h-3v1h-1v-1h-1v1h-2v-1h-4v1h-1v-1h-1v1h-1v-1h-4v1h-6v-1h-4v1h-1v-1h-4v1h-2v-1h-6v1h-1v-1h-1v1h-2v-1h-8v1h-3v-1h-8v2h-1v-2h-8v1h-1v-1h-4v1h-1v-1h-2v2h-1v-1h-1v-1h-1v1h-2v-1h-4v1h-2v-1h-3v1h-1v1h-1v-2h-1v1h-1v-1h-3v1h-1v-1h-5v1h-1v-1h-3v1h-1v-1h-8v1h-4v-1h-1v1h-1v-1h-2v1h-1v-1h-13v1h-2v-1h-3v1h-1v-1h-3v2h-1v-1h-1v-1h-5v1h-2v-1h-4v2h-1v-1h-4v1h-2v-1h-3v1h-2v-1h-3v1h-1v-1h-2v1h-1v-1h-1v-1h-2v2h-1v-2h-1v1h-1v-1h-1v1h-1v-1h-6v1h-1v-1h-2v1h-1v-1h-1v1h-3v-1h-3v1h-1v-1h-4v1h-2v-1h-3v1h-2v-1h-2v1h-1v-1h-2v1h-1v-1h-2v1h-1v-1h-1v1h-1v-1h-1v1h-1v-1h-2v1h-1v-1h-1v1h-1v-1h-1v1h-1v-1h-1v1h-2v1h-1v-1h-2v-1h-2v1h-1v-1h-1v1h-1v-1h-4v1h-2v-1h-3v1h-6v-1h-1v1h-1v-1h-7v1h-2v-1h-3v1h-2v-1h-3v1h-1v-1h-7v1h-3v-1h-2v1h-1v-1h-7v1h-1v-1h-1v1h-1v-2h-1v1h-1v-1h-3v1h-2v1h-1v-1h-2v1h-2v-1h-3v1h-1v-1h-1v1h-2v-1h-1v1h-2v-1h-1v1h-1v-1h-1v1h-1v-1h-1v1h-1v-1h-3v1h-1v-1h-3v1h-1v1h-1v-1h-1v-1h-1v1h-1v-1h-1v1h-1v-1h-1v1h-1v-1h-4v1h-1v-2h-3v1h-1v-1h-3v1h-1v-1h-2v1h-1v-1h-1v1h-3v-1h-3v1h-3v1h-1v-1h-4v1h-1v-1h-4v1h-1v-1h-6v1h-2v-1h-4v-1h-2v1h-1v-1h-1v1h-1v-1h-6v2h-2v-1h-4v1h-1v-1h-2v1h-1v-1h-5v1h-3v-1h-1v1h-1v-1h-4v1h-3v-1h-2v1h-1v-1h-4v1h-1v-1h-5v1h-3v-1h-1v1h-2v-1h-1v2h-1v-1h-1v-1h-1v1h-1v-1h-2v1h-1v1h-1v-2h-2v1h-1v-1h-2v2h-1v-2h-8v1h-1v-1h-1v1h-1v-1h-5v1h-1v-1h-4v1h-1v-1h-2v1h-2v-1h-6v1h-2v-1h-6v1h-1v-1h-2v1h-1v-1h-1v1h-1v-1h-5v1h-2v-1h-4v2h-1v-1h-3v-1h-3v-1h-3v1h-1v1h-3v-1h-4v1h-1v-1h-3v1h-1v1h-1v-2h-3v1h-1v-1h-2v2h-3v-1h-2v-1h-1v1h-1v-1h-4v1h-1v-1h-2v1h-2v-1h-1v1h-3v-1h-6v1h-1v-1h-5v1h-2v-1h-2v1h-1v-1h-1v1h-1v-1h-3v1h-2v-1h-3v1h-1v-1h-1v2h-1v-2h-1v1h-1v-1h-2v1h-1v-1h-6v1h-1v-1h-2v1h-2v-1h-3v1h-2v-1h-1v2h-4v-1h-2v1h-1v-1h-1v1h-1v-2h-1v1h-1v-1h-1v1h-1v-1h-7v1h-1v1h-1v-1h-1v-1h-7v1h-1v-1h-2v1h-1v-1h-3v-1h-1v1h-1v1h-1v-2h-8v1h-2v-1h-1z"/>
<path d="M277 911h2v-1h2v1h5v-1h1v1h5v-1h3v-1h1v2h3v-1h1v-1h1v1h3v1h3v-1h2v1h6v-1h1v1h1v-1h1v1h2v-1h1v1h1v1h3v-1h1v1h2v-1h5v-1h1v1h1v-1h1v-1h3v2h2v-1h2v-1h1v1h2v1h1v-1h1v1h2v-1h3v1h1v-1h1v1h3v-1h1v1h6v-1h2v1h1v-1h3v1h3v-1h1v1h4v-1h1v1h3v-1h1v1h1v-1h1v1h5v-1h1v1h3v-1h1v2h2v-1h3v-1h1v1h5v-1h1v-2h1v2h4v1h3v-1h1v1h8v-1h3v1h3v-1h3v-1h1v1h1v1h4v-1h1v1h3v-1h1v1h1v-1h1v-1h1v1h3v1h3v-1h1v1h2v-1h2v1h1v-1h1v1h1v-1h4v1h12v-1h1v1h4v-1h1v-1h1v1h1v1h4v-1h1v1h1v-1h2v1h1v-1h1v1h1v-1h1v-1h1v1h2v1h1v-1h1v1h4v-1h1v1h1v-1h1v1h2v-1h1v1h1v-2h1v1h2v1h9v-2h2v2h1v-2h1v2h2v-2h1v1h1v1h2v-1h2v1h1v-1h5v1h4v-1h6v1h6v-1h1v1h2v-1h1v1h1v-1h4v1h2v-1h1v1h1v-1h1v1h5v-1h2v1h2v-1h2v1h6v-1h1v1h1v-1h1v1h1v-1h1v1h1v-1h2v1h1v-1h1v1h2v-1h1v1h4v-2h1v1h7v1h3v-1h1v1h3v-2h1v2h2v-1h2v1h4v-1h2v1h1v-1h2v1h2v-1h1v1h4v-1h2v1h1v-1h1v1h6v-1h1v1h1v-1h1v1h3v-1h1v1h1v-1h1v1h5v-1h1v1h3v-1h1v1h7v-1h1v1h3v-2h1v1h1v1h1v-1h3v1h11v-1h2v1h1v-2h1v2h6v-1h1v1h1v-2h1v2h1v-2h1v1h1v1h1v-1h2v1h5v-2h1v1h1v1h8v-1h3v-1h2v1h6v-1h1v1h5v1h3v-2h1v1h1v1h2v-1h1v1h2v-1h1v1h3v-1h1v2h2v-1h1v1h1v-1h4v-1h1v1h4v-2h1v1h3v1h12v-1h2v1h2v-1h1v1h1v-1h1v1h2v-1h1v1h1v-1h2v1h6v-1h1v1h1v-1h1v1h1v-1h1v1h1v-1h1v1h1v-1h1v1h1v-1h1v1h1v-1h1v1h1v-2h1v2h5v-1h1v-1h2v1h1v-1h5v1h1v-1h1v1h1v-1h1v2h1v-1h1v1h2v-1h1v1h6v-1h3v1h3v-1h1v-1h1v2h4v-1h1v1h2v-1h2v1h3v-1h1v1h6v-1h4v1h3v-1h3v1h1v-2h1v1h2v-1h2v1h1v1h3v-1h1v-1h1v2h7v-1h1v1h1v-1h1v1h2v-1h1v1h1v-1h1v1h4v-1h1v1h2v-1h1v-1h1v2h2v-1h1v1h2v-1h2v1h1v-1h1v1h12v-1h1v1h4v-1h2v1h5v-1h1v1h1v-1h1v1h2v-1h1v1h3v1h2v-2h1v1h1v-1h2v1h6v-1h1v1h3v-1h2v1h2v-1h3v1h2v-1h1v-1h1v2h1v-1h1v1h1v-1h2v1h1v-1h1v-1h1v1h3v1h1v-1h2v-1h2v2h2v-1h1v1h3v-2h1v1h1v1h11v-1h3v1h3v-1h2v1h1v-1h2v1h1v-1h1v1h3v-2h1v2h7v-1h1v1h9v1h2v-1h2v-1h1v1h6v-1h1v1h6v-1h1v1h1v-1h1v2h1v-1h1v1h1v-2h1v1h8v1h2v-1h1v1h1v-1h4v-1h1v1h1v-1h1v1h5v-1h1v1h5v-1h2v1h2v-1h1v1h3v-1h1v1h2v-1h1v1h3v-1h1v1h1v-1h1v1h3v-1h1v1h1v-1h1v1h1v-1h1v1h1v-1h1v2h1v-1h1v-1h1v1h4v-1h1v1h3v-1h1v1h1v-2h1v2h1v-1h1v1h1v-1h1v1h2v-1h1v1h5v-1h1v1h1v-1h1v1h6v-1h1v1h2v-1h1v1h3v-1h2v1h5v-1h1v1h1v-1h4v1h3v-1h1v1h4v-1h2v-1h1v1h3v-1h1v1h2v-1h1v1h9v-1h1v1h3v-1h1v1h1v1h4v-1h1v1h3v-1h2v1h2v-1h3v1h1v-1h1v1h4v-1h1v1h3v-1h1v1h4v-1h2v-1h1v2h3v-1h3v1h4v-1h1v1h1v-1h2v1h1v-1h1v1h5v-1h3v1h3v-1h1v1h7v-1h1v1h5v-1h1v1h2v-1h1v1h2v-1h2v1h1v-1h1v1h1v-1h2v1h1v-2h1v1h1v1h1v-1h1v1h1v-1h1v1h2v-1h2v1h1v-1h1v1h4v-1h2V915h-2v1h-1v-1h-6v1h-1v-1h-3v1h-1v1h-1v-2h-4v1h-1v-1h-3v2h-1v-2h-1v2h-1v-2h-4v1h-8v-1h-3v1h-1v-1h-1v1h-1v-1h-1v1h-2v-1h-4v-1h-1v1h-1v1h-1v-1h-2v1h-2v-1h-3v1h-2v-1h-10v1h-2v-1h-5v1h-1v-1h-1v2h-1v-2h-3v1h-1v-1h-6v1h-2v-1h-4v1h-1v-1h-2v1h-1v-1h-2v1h-2v-1h-1v1h-1v-1h-1v1h-6v1h-1v-1h-3v1h-1v-1h-1v-1h-1v1h-1v-1h-1v2h-1v-1h-2v-1h-4v1h-1v-1h-8v1h-1v-1h-1v1h-1v-1h-1v1h-2v-1h-1v1h-1v-1h-1v1h-2v-1h-1v1h-1v-1h-1v1h-1v-1h-1v1h-1v-1h-2v1h-1v-1h-1v1h-1v-1h-1v1h-2v-1h-1v-1h-1v2h-1v-1h-1v-1h-1v2h-4v-1h-2v1h-1v-1h-1v1h-2v-1h-1v1h-5v-1h-10v1h-2v-1h-1v1h-1v1h-1v-2h-3v1h-2v-1h-3v1h-2v-1h-7v1h-5v-1h-5v1h-1v-1h-1v1h-1v-1h-6v1h-1v-1h-1v1h-1v-1h-2v1h-4v-1h-5v1h-1v-1h-2v1h-2v-1h-1v1h-1v-1h-1v1h-1v-1h-8v1h-1v-1h-1v1h-1v-1h-1v1h-1v-1h-7v1h-1v-1h-3v1h-1v-1h-7v1h-2v-1h-5v2h-1v-1h-1v-1h-2v2h-1v-1h-2v-1h-7v2h-1v-1h-2v-1h-1v1h-1v-1h-5v1h-3v-1h-6v1h-1v-1h-5v1h-2v-1h-5v1h-1v-1h-2v1h-1v-1h-2v1h-2v1h-1v-2h-1v1h-1v-1h-3v-1h-2v1h-1v-1h-2v1h-1v-1h-4v1h-3v-1h-1v1h-13v1h-2v-1h-3v1h-1v-1h-5v1h-3v-1h-1v1h-1v-1h-4v1h-4v-1h-1v1h-1v-1h-2v1h-1v-1h-2v1h-1v-1h-3v1h-3v-1h-7v1h-1v-1h-2v1h-1v-1h-8v1h-1v-1h-1v1h-1v-1h-1v1h-1v-1h-4v1h-1v-1h-1v1h-2v-1h-1v1h-4v-1h-1v1h-1v-1h-2v1h-2v-1h-2v1h-1v-1h-1v1h-2v-1h-3v1h-1v-1h-2v2h-1v-1h-1v1h-2v-1h-6v1h-1v-1h-2v1h-3v-1h-1v-1h-2v1h-1v1h-1v-1h-1v1h-5v-1h-1v1h-3v-1h-1v-1h-2v1h-1v-1h-9v1h-1v-1h-1v2h-1v-2h-6v1h-1v-1h-1v1h-1v-1h-1v2h-1v-2h-2v1h-3v-1h-2v1h-2v-1h-2v1h-2v-1h-2v1h-1v-1h-1v2h-1v-2h-2v1h-1v-1h-3v1h-2v-1h-5v1h-3v-1h-2v1h-5v-1h-2v1h-5v-1h-1v1h-2v-1h-6v1h-3v-1h-2v1h-4v-1h-1v1h-2v1h-1v-1h-2v-1h-1v1h-1v1h-2v1h-1v-3h-4v2h-1v-1h-1v-1h-1v1h-1v-1h-3v1h-3v-1h-3v1h-1v-1h-3v1h-1v-1h-2v1h-3v-1h-8v1h-1v-1h-3v1h-1v-1h-3v1h-1v1h-1v-1h-3v-1h-5v1h-1v-1h-3v1h-2v-1h-3v1h-1v-1h-5v2h-1v-2h-11v2h-1v-1h-1v-1h-6v1h-1v-1h-4v1h-1v-1h-2v1h-1v-1h-6v2h-1v-2h-1v2h-3v-1h-1v-1h-3v1h-1v-1h-2v1h-2v-1h-1v2h-1v-1h-2v1h-1v-2h-1v2h-1v-1h-1v-1h-3v1h-1v-1h-5v1h-1v-1h-2v1h-1v-1h-1v1h-1v-1h-1v2h-1v-2h-1v1h-4v-1h-2v2h-1v-1h-1v-1h-5v1h-1v-1h-7v1h-1v-1h-1v-1h-1v1h-3v1h-1v-1h-2v1h-1v-1h-1v1h-2v-1h-3v1h-1v-1h-2v1h-3v-1h-1v1h-1v-1h-2v1h-1v-1h-1v1h-3v-1h-1v2h-1v-2h-2v1h-2v-1h-1v1h-1v-1h-1v1h-1v-1h-2v1h-2v-1h-1v1h-1v-1h-1v1h-1v-1h-1v1h-1v-1h-5v1h-1v-1h-4v1h-1v-1h-1v1h-2v-1h-1v1h-2v1h-1v-1h-1v-1h-3v1h-1v-1h-1v1h-2v-1h-1v1h-2v-1h-9v1h-1v-1h-4v2h-1v-2h-10v1h-2v-1h-1v1h-2v-1h-2v1h-1v-1h-3v1h-2v-1h-3v1h-3v-1h-1v1h-2v-1h-2v1h-2v1h-1v-2h-3v1h-2v-1h-5v2h-1v-2h-1v2h-2v-1h-6v-1h-1v1h-1v-1h-1v1h-2v1h-1v-2h-1v1h-1v-1h-2v1h-2v-1h-1v1h-1v-1h-1v1h-2v-1h-1v1h-1v-1h-2v1h-1v-1h-1v1h-1v-1h-1v2h-1v-2h-1v1h-5v1h-1v-2h-1v1h-2v-1h-1v1h-1v-1h-2v1h-1v-1h-4v1h-1v-1h-1v2h-1v-1h-1v-1h-4v1h-1v-1h-2v1h-1v-1h-6v1h-1v-1h-1v-1h-2v1h-2v1h-1v-1h-3v1h-1v-1h-2v1h-6v-1h-3v1h-1v-1h-3v2h-1v-2h-2v1h-1v-1h-4v1h-1v-1h-3v1h-1v-1h-4v1h-3v-1h-7v1h-1v-1h-4v1h-1v-1h-3v2h-1v-1h-4v-1h-1v1h-4v-1h-4z"/>
  </g>
  <g stroke="#00ffff" stroke-width="1" fill="none" class="spk">
<path d="M322.5 196.0V229.5M400.5 203.9V230.6M447.5 197.8V227.7M498.5 200.1V238.9M517.5 198.9V230.6M570.5 200.1V234.7M656.5 203.9V225.7M748.5 196.0V225.7M766.5 200.1V234.7M813.5 207.9V222.8M831.5 196.0V235.6M909.5 205.0V227.7M995.5 196.0V226.8M1074.5 196.0V236.2M1120.5 207.2V224.4M1138.5 198.9V236.2M1248.5 202.1V234.7M1287.5 198.9V234.7M1317.5 205.0V221.7M1351.5 208.3V224.4M1369.5 196.7V234.7"/>
<path d="M284.5 219.9V260.8M302.5 226.2V270.8M344.5 236.2V253.0M386.5 221.0V263.7M434.5 222.2V258.5M455.5 222.2V260.8M636.5 239.1V250.7M709.5 231.1V266.8M745.5 245.8V253.6M831.5 239.6V250.7M1006.5 245.8V251.8M1047.5 245.8V253.4M1337.5 245.8V252.5"/>
<path d="M373.5 257.9V289.8M417.5 270.4V281.5M680.5 268.1V281.5M698.5 251.8V296.5M841.5 257.0V292.7M859.5 263.0V286.9M1131.5 263.0V284.2M1155.5 261.9V288.7M1218.5 264.1V289.1M1224.5 258.5V289.8"/>
<path d="M322.5 289.1V328.9M389.5 293.1V321.5M520.5 293.1V328.9M626.5 278.6V328.9M311.5 314.3V328.9M366.5 317.2V328.9M545.5 313.2V328.9M618.5 324.4V328.9M756.5 280.9V328.9M726.5 311.0V328.9M790.5 311.0V328.9M896.5 293.1V318.8M918.5 298.7V314.3M955.5 292.0V315.0M781.5 293.1V317.7M799.5 295.4V316.6M1051.5 282.0V319.9M1131.5 282.0V328.9M1167.5 283.1V322.2M1253.5 284.2V328.9M1237.5 306.5V328.9M1308.5 286.9V328.9M1324.5 283.1V328.9M1349.5 316.6V328.9M1399.5 293.1V317.7M322.5 306.0V325.6M389.5 306.0V321.6M520.5 306.0V325.0M626.5 306.0V328.3M756.5 306.0V328.3M896.5 306.0V318.7M1051.5 306.0V319.4M1167.5 306.0V322.7M1308.5 306.0V327.2M1324.5 306.0V327.9M1399.5 306.0V318.3"/>
<path d="M311.5 313.8V356.2M366.5 316.7V352.9M545.5 312.7V350.6M618.5 325.0V352.9M508.5 336.8V343.5M636.5 330.1V342.8M658.5 327.2V344.4M726.5 310.5V354.0M790.5 319.8V349.5M993.5 327.2V343.5M773.5 330.1V336.8M779.5 330.1V336.8M1131.5 310.5V352.9M1237.5 310.5V354.0M1253.5 308.2V356.2M1349.5 317.2V351.8"/>
<path d="M297.5 350.0V382.6M393.5 356.9V379.7M473.5 359.1V377.9M538.5 356.9V377.0M552.5 359.6V376.3M601.5 367.2V373.4M713.5 343.9V382.6M686.5 360.0V373.4"/>
<path d="M330.5 397.5V403.8M414.5 391.9V404.2M632.5 381.9V409.1M698.5 376.3V424.3M700.5 385.2V410.9M727.5 377.9V412.7M763.5 376.3V411.4M924.5 381.9V410.5M843.5 390.8V406.4M1037.5 378.5V419.8M1073.5 369.6V412.7M1110.5 385.9V411.4M1155.5 378.5V420.3M1252.5 369.6V413.6M1323.5 375.6V414.9M1306.5 397.5V406.9M1164.5 397.5V405.3"/>
<path d="M297.5 412.0V448.9M342.5 409.1V443.3M348.5 427.9V448.9M468.5 427.9V448.9M520.5 421.0V435.0M537.5 415.4V438.8M659.5 414.9V437.7M779.5 422.1V433.7M952.5 414.3V441.0M998.5 414.9V442.6M1004.5 413.1V439.9M1012.5 414.9V435.0M1024.5 417.2V448.9M728.5 427.9V448.9M1195.5 413.1V448.9M1125.5 427.9V435.5M1354.5 419.8V427.9M1316.5 422.1V432.1M1166.5 437.7V448.9M1209.5 437.7V448.9M1226.5 437.7V448.9M1387.5 437.7V448.9M297.5 428.0V447.0M342.5 428.0V443.6M537.5 428.0V438.7M659.5 428.0V437.4M952.5 428.0V440.7M998.5 428.0V442.5M1004.5 428.0V439.6M1012.5 428.0V434.7M1024.5 428.0V473.8M1195.5 428.0V445.9"/>
<path d="M348.5 435.8V470.4M468.5 436.9V473.8M601.5 457.9V465.5M669.5 452.1V462.6M691.5 444.1V471.5M728.5 438.0V479.8M942.5 444.7V472.6M915.5 457.9V464.2M1128.5 449.2V475.3M1166.5 438.0V475.3M1209.5 436.3V479.8M1226.5 441.4V479.8M1326.5 446.3V467.7M1356.5 450.3V463.7M1387.5 439.2V469.3M1048.5 457.9V464.2"/>
<path d="M281.5 470.9V505.7M356.5 470.9V505.7M361.5 478.2V494.5M399.5 473.8V508.8M492.5 476.0V495.4M552.5 480.5V531.8M568.5 469.3V508.8M623.5 477.1V505.0M716.5 469.3V503.4M897.5 470.9V500.5M1014.5 472.2V504.3M1020.5 477.1V500.5M822.5 488.3V493.8M1068.5 480.5V497.6M1205.5 473.1V501.7"/>
<path d="M342.5 498.3V530.7M655.5 499.9V532.5M757.5 498.3V534.7M736.5 510.1V526.2M708.5 511.0V525.1M713.5 510.1V522.9M835.5 512.4V524.4M885.5 511.0V526.2M986.5 503.9V536.9M1161.5 499.9V536.9M1178.5 508.8V528.4M1083.5 518.6V525.8M1394.5 518.6V525.8"/>
<path d="M287.5 536.9V558.6M392.5 524.0V570.9M409.5 528.9V570.9M753.5 537.8V561.9M810.5 522.9V564.6M876.5 539.2V555.7M957.5 537.8V570.9M679.5 543.6V553.4M1123.5 565.3V570.9M392.5 549.0V571.3M409.5 549.0V568.6M287.5 549.0V558.4M753.5 549.0V561.7M810.5 549.0V564.6M957.5 549.0V564.6M876.5 549.0V555.2"/>
<path d="M960.5 562.8V591.0M1010.5 562.8V591.0M1123.5 565.7V598.1M1249.5 568.0V592.5M1289.5 571.3V588.7"/>
<path d="M412.5 599.9V624.4M494.5 589.8V620.9M570.5 591.9V629.8M612.5 590.7V626.7M678.5 582.5V623.8M739.5 586.9V626.7M1177.5 595.9V626.7M1251.5 589.2V624.4M1360.5 585.8V636.1"/>
<path d="M318.5 620.9V660.6M339.5 628.9V647.7M536.5 622.2V649.4M573.5 614.8V661.7M395.5 642.8V691.9M762.5 622.2V659.5M806.5 623.8V658.8M849.5 620.0V655.7M1029.5 616.0V660.6M1047.5 617.1V657.9M1136.5 620.0V657.9M1175.5 624.4V659.5M1298.5 612.6V653.5M1346.5 620.9V653.5M1361.5 622.7V659.5"/>
<path d="M287.5 646.8V684.0M395.5 642.8V691.9M612.5 662.4V676.7M714.5 647.7V685.6M788.5 647.7V685.6M907.5 653.9V691.9M988.5 664.6V675.1M1111.5 653.9V691.9M1148.5 660.2V682.9M1155.5 679.6V691.9M287.5 671.0V683.7M395.5 671.0V690.6M714.5 671.0V685.5M788.5 671.0V685.5M907.5 671.0V688.4M1111.5 671.0V690.0M1148.5 671.0V682.6"/>
<path d="M342.5 693.8V710.7M707.5 687.1V716.8M1119.5 688.9V713.9M1155.5 679.9V715.0"/>
<path d="M320.5 717.9V746.9M475.5 716.8V747.6M615.5 721.2V742.9M980.5 724.1V737.5M1080.5 716.8V745.8M1268.5 713.9V748.0"/>
<path d="M408.5 745.8V777.0M521.5 741.3V777.7M746.5 742.0V777.7M812.5 745.1V772.6M996.5 743.5V779.9M1092.5 744.2V774.8M1190.5 746.9V774.8M1226.5 742.9V779.9M1284.5 744.2V777.7M1351.5 746.4V771.9"/>
<path d="M364.5 780.8V804.9M435.5 778.1V800.5M508.5 784.8V796.4M560.5 778.1V804.9M676.5 784.4V798.7M909.5 779.9V806.7M1032.5 779.9V813.9M364.5 792.0V804.3M435.5 792.0V800.5M560.5 792.0V804.7M676.5 792.0V798.2M909.5 792.0V806.5"/>
<path d="M289.5 808.7V838.9M388.5 813.9V828.8M434.5 808.7V832.2M671.5 807.2V832.6M777.5 814.3V827.7M833.5 802.0V835.5M972.5 816.1V826.6M981.5 823.2V872.8M1033.5 795.3V839.3M1071.5 799.8V835.5M1162.5 811.0V837.8M1223.5 807.2V838.9M1394.5 805.8V837.8"/>
<path d="M442.5 842.2V860.8M491.5 842.2V865.7M616.5 842.9V857.8M959.5 845.1V859.4M1313.5 834.0V864.5"/>
<path d="M1069.5 871.9V892.0M1329.5 869.0V892.0"/>
<path d="M849.5 908.1V919.7M1331.5 895.8V927.7"/>
  </g>
  <g stroke="#000" stroke-width="1" fill="none">
    <path d="M277.5 184.5H1400.5M277.5 184.5V943.5M1401.5 184.5V942.5M277.5 944.5H1400.5"/>
<path d="M352.5 177V184 M352.5 944V951"/>
<path d="M427.5 177V184 M427.5 944V951"/>
<path d="M502.5 177V184 M502.5 944V951"/>
<path d="M577.5 177V184 M577.5 944V951"/>
<path d="M652.5 177V184 M652.5 944V951"/>
<path d="M727.5 177V184 M727.5 944V951"/>
<path d="M802.5 177V184 M802.5 944V951"/>
<path d="M876.5 177V184 M876.5 944V951"/>
<path d="M951.5 177V184 M951.5 944V951"/>
<path d="M1026.5 177V184 M1026.5 944V951"/>
<path d="M1101.5 177V184 M1101.5 944V951"/>
<path d="M1176.5 177V184 M1176.5 944V951"/>
<path d="M1251.5 177V184 M1251.5 944V951"/>
<path d="M1326.5 177V184 M1326.5 944V951"/>
<path d="M270 215.5H277 M1401 215.5H1408"/>
<path d="M270 246.5H277 M1401 246.5H1408"/>
<path d="M270 276.5H277 M1401 276.5H1408"/>
<path d="M270 306.5H277 M1401 306.5H1408"/>
<path d="M270 337.5H277 M1401 337.5H1408"/>
<path d="M270 367.5H277 M1401 367.5H1408"/>
<path d="M270 397.5H277 M1401 397.5H1408"/>
<path d="M270 428.5H277 M1401 428.5H1408"/>
<path d="M270 458.5H277 M1401 458.5H1408"/>
<path d="M270 488.5H277 M1401 488.5H1408"/>
<path d="M270 518.5H277 M1401 518.5H1408"/>
<path d="M270 549.5H277 M1401 549.5H1408"/>
<path d="M270 579.5H277 M1401 579.5H1408"/>
<path d="M270 609.5H277 M1401 609.5H1408"/>
<path d="M270 640.5H277 M1401 640.5H1408"/>
<path d="M270 670.5H277 M1401 670.5H1408"/>
<path d="M270 700.5H277 M1401 700.5H1408"/>
<path d="M270 731.5H277 M1401 731.5H1408"/>
<path d="M270 761.5H277 M1401 761.5H1408"/>
<path d="M270 791.5H277 M1401 791.5H1408"/>
<path d="M270 822.5H277 M1401 822.5H1408"/>
<path d="M270 852.5H277 M1401 852.5H1408"/>
<path d="M270 882.5H277 M1401 882.5H1408"/>
<path d="M270 913.5H277 M1401 913.5H1408"/>
  </g>
  <g font-family="Liberation Sans" fill="#000">
    <text x="277" y="121" font-size="16" letter-spacing="0.05">Département de géologie et de génie géologique</text>
    <text x="277" y="140" font-size="16" letter-spacing="0.04">Faculté des sciences et de génie</text>
    <text x="277" y="159" font-size="16">Université Laval</text>
    <text x="839.5" y="141.5" font-size="21" letter-spacing="0.36" text-anchor="middle">Séismographe QCQ (CGC/GSC)</text>
    <text x="839.5" y="1000.5" font-size="17.5" letter-spacing="0.45" text-anchor="middle">Minutes écoulées</text>
    <text x="1405" y="192" font-size="18" fill="#ff0000">UTC</text>
  </g>
  <g font-family="Liberation Sans" font-size="13" fill="#000">
<text x="351.9" y="178" text-anchor="middle">02</text>
<text x="351.9" y="960" text-anchor="middle">02</text>
<text x="426.9" y="178" text-anchor="middle">04</text>
<text x="426.9" y="960" text-anchor="middle">04</text>
<text x="501.8" y="178" text-anchor="middle">06</text>
<text x="501.8" y="960" text-anchor="middle">06</text>
<text x="576.7" y="178" text-anchor="middle">08</text>
<text x="576.7" y="960" text-anchor="middle">08</text>
<text x="651.7" y="178" text-anchor="middle">10</text>
<text x="651.7" y="960" text-anchor="middle">10</text>
<text x="726.6" y="178" text-anchor="middle">12</text>
<text x="726.6" y="960" text-anchor="middle">12</text>
<text x="801.5" y="178" text-anchor="middle">14</text>
<text x="801.5" y="960" text-anchor="middle">14</text>
<text x="876.5" y="178" text-anchor="middle">16</text>
<text x="876.5" y="960" text-anchor="middle">16</text>
<text x="951.4" y="178" text-anchor="middle">18</text>
<text x="951.4" y="960" text-anchor="middle">18</text>
<text x="1026.3" y="178" text-anchor="middle">20</text>
<text x="1026.3" y="960" text-anchor="middle">20</text>
<text x="1101.3" y="178" text-anchor="middle">22</text>
<text x="1101.3" y="960" text-anchor="middle">22</text>
<text x="1176.2" y="178" text-anchor="middle">24</text>
<text x="1176.2" y="960" text-anchor="middle">24</text>
<text x="1251.1" y="178" text-anchor="middle">26</text>
<text x="1251.1" y="960" text-anchor="middle">26</text>
<text x="1326.1" y="178" text-anchor="middle">28</text>
<text x="1326.1" y="960" text-anchor="middle">28</text>
<text x="1407" y="220.0">12:30</text>
<text x="1407" y="251.0">13:00</text>
<text x="1407" y="281.0">13:30</text>
<text x="1407" y="311.0">14:00</text>
<text x="1407" y="342.0">14:30</text>
<text x="1407" y="372.0">15:00</text>
<text x="1407" y="402.0">15:30</text>
<text x="1407" y="433.0">16:00</text>
<text x="1407" y="463.0">16:30</text>
<text x="1407" y="493.0">17:00</text>
<text x="1407" y="523.0">17:30</text>
<text x="1407" y="554.0">18:00</text>
<text x="1407" y="584.0">18:30</text>
<text x="1407" y="614.0">19:00</text>
<text x="1407" y="645.0">19:30</text>
<text x="1407" y="675.0">20:00</text>
<text x="1407" y="705.0">20:30</text>
<text x="1407" y="736.0">21:00</text>
<text x="1407" y="766.0">21:30</text>
<text x="1407" y="796.0">22:00</text>
<text x="1407" y="827.0">22:30</text>
<text x="1407" y="857.0">23:00</text>
<text x="1407" y="887.0">23:30</text>
<text x="1407" y="918.0">24:00</text>
  </g>
<g id="logo">
  <path d="M1300.5 114.5 H1332.5 V148.5 Q1332.5 151.5 1329.5 151.5 H1320 L1316.5 155.5 L1313 151.5 H1303.5 Q1300.5 151.5 1300.5 148.5 Z" fill="#e3202b" stroke="#8a1a1a" stroke-width="1"/>
  <rect x="1313.2" y="115" width="6.4" height="36.5" fill="#fdc010"/>
  <rect x="1301" y="129.3" width="31" height="6.6" fill="#fdc010"/>
  <path d="M1314 151 L1319 151 L1316.5 154 Z" fill="#fdc010"/>
  <g fill="#dadada">
    <circle cx="1304" cy="118.8" r="2.1"/><circle cx="1310" cy="118.8" r="2.1"/>
    <circle cx="1304" cy="125.6" r="2.1"/><circle cx="1310" cy="125.6" r="2.1"/>
    <circle cx="1322.7" cy="118.8" r="2.1"/><circle cx="1328.7" cy="118.8" r="2.1"/>
    <circle cx="1322.7" cy="125.6" r="2.1"/><circle cx="1328.7" cy="125.6" r="2.1"/>
    <circle cx="1304" cy="139.4" r="2.1"/><circle cx="1310" cy="139.4" r="2.1"/>
    <circle cx="1304" cy="146.2" r="2.1"/><circle cx="1310" cy="146.2" r="2.1"/>
    <circle cx="1322.7" cy="139.4" r="2.1"/><circle cx="1328.7" cy="139.4" r="2.1"/>
    <circle cx="1322.7" cy="146.2" r="2.1"/><circle cx="1328.7" cy="146.2" r="2.1"/>
  </g>
  <g fill="#2a8ad6">
    <circle cx="1316.4" cy="122.3" r="2.2"/>
    <circle cx="1307.1" cy="132.6" r="2.2"/><circle cx="1316.4" cy="132.6" r="2.2"/><circle cx="1325.7" cy="132.6" r="2.2"/>
    <circle cx="1316.4" cy="142.9" r="2.2"/>
  </g>
  <text x="1339" y="126.8" font-family="Liberation Sans" font-size="11" fill="#231f20" stroke="#231f20" stroke-width="0.3" textLength="62" lengthAdjust="spacingAndGlyphs">UNIVERSITÉ</text>
  <text x="1338.5" y="146.2" font-family="Liberation Sans" font-size="23.3" fill="#231f20" stroke="#231f20" stroke-width="0.45" textLength="62.5" lengthAdjust="spacingAndGlyphs">LAVAL</text>
</g>

</svg>
</body></html>
